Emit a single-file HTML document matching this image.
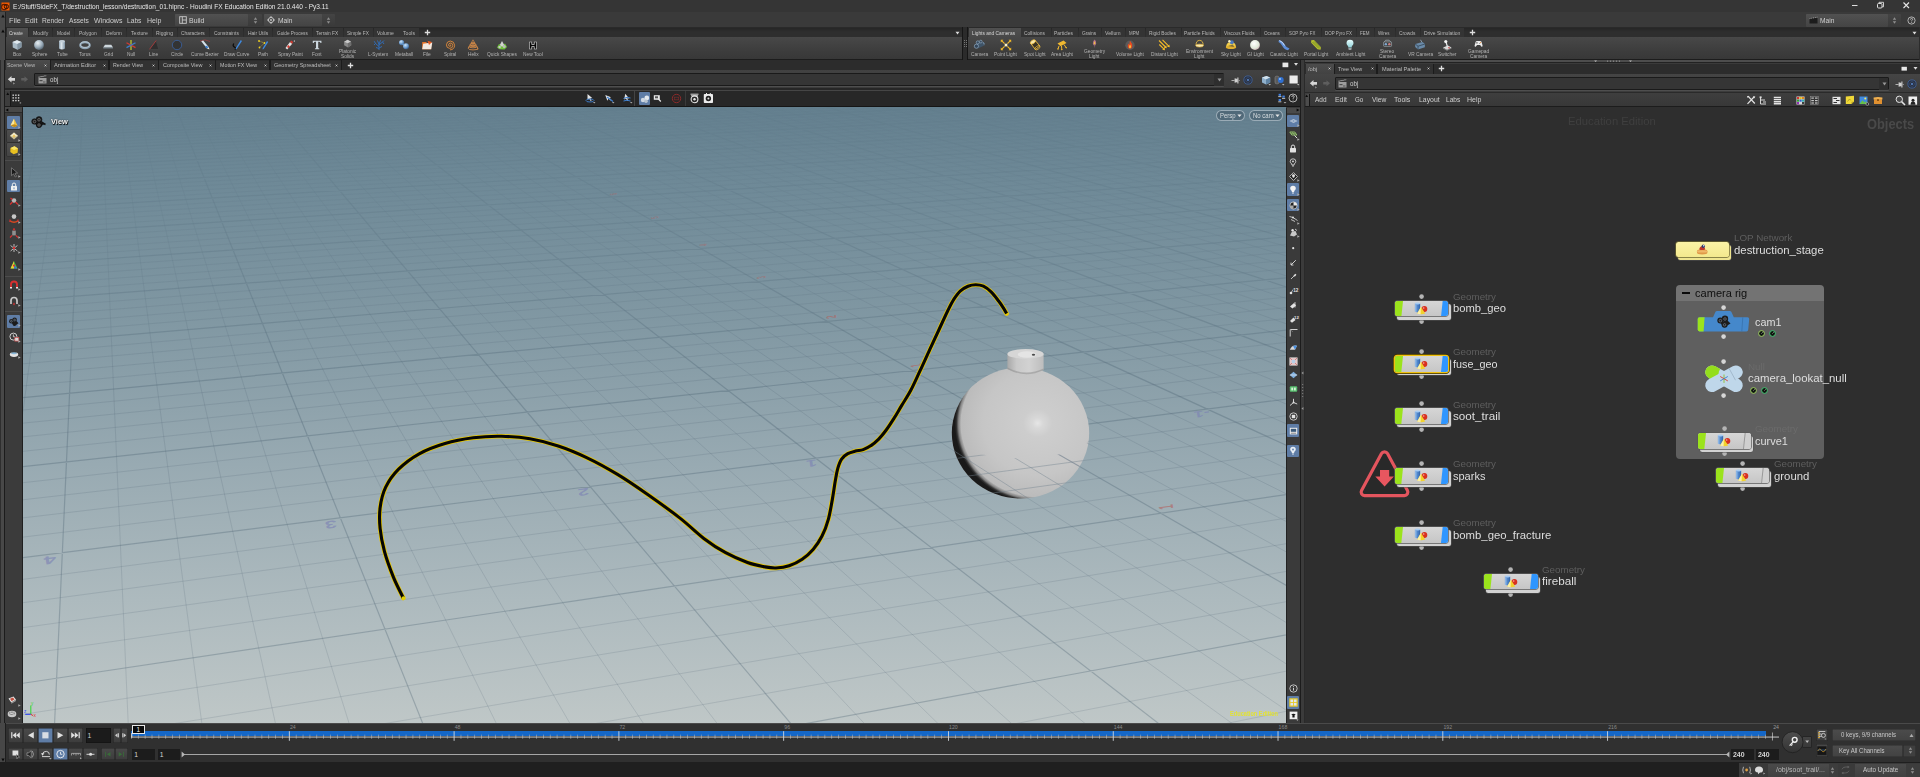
<!DOCTYPE html>
<html><head><meta charset="utf-8"><title>Houdini FX Education Edition</title>
<style>
html,body{margin:0;padding:0;background:#3a3a3a;overflow:hidden;}
body{width:1920px;height:777px;position:relative;font-family:"Liberation Sans",sans-serif;}
#app{position:absolute;left:0;top:0;width:1920px;height:777px;overflow:hidden;}
#app div,#app span,#app svg{position:absolute;}
#app svg{overflow:visible;display:block;}
.t{white-space:nowrap;transform-origin:0 50%;display:block;}
</style></head><body><div id="app"><div style="left:0px;top:0px;width:1920px;height:12px;background:#353535;"></div><svg style="left:1px;top:1.5px;" width="9" height="9" viewBox="0 0 9 9"><rect x="0.5" y="0.5" width="8" height="8" fill="#f05a00"/><circle cx="3.2" cy="5" r="2.6" fill="none" stroke="#5a1c00" stroke-width="1.1"/><circle cx="5.4" cy="4.6" r="2.1" fill="none" stroke="#3a1200" stroke-width="1"/></svg><span class="t" style="left:12.50px;top:2.82px;font-size:7.3px;line-height:7.3px;color:#e6e6e6;transform:scaleX(0.8991);">E:/Stuff/SideFX_T/destruction_lesson/destruction_01.hipnc - Houdini FX Education Edition 21.0.440 - Py3.11</span><svg style="left:1849px;top:0.3px;" width="64" height="10" viewBox="0 0 64 10"><path d="M3 5.5 H8.5" stroke="#ddd" stroke-width="1"/><rect x="28.5" y="3.5" width="4.5" height="4.5" fill="none" stroke="#ddd" stroke-width="1" rx="1"/><path d="M30 3.5 V2.3 H34.5 V6.8 H33" fill="none" stroke="#ddd" stroke-width="0.9"/><path d="M54.5 2.5 L60 8 M60 2.5 L54.5 8" stroke="#e6e6e6" stroke-width="1.1"/></svg><div style="left:0px;top:12px;width:1920px;height:15px;background:#3a3a3a;"></div><div style="left:0px;top:12px;width:5px;height:15px;background:#4a4a4a;"></div><div style="left:5px;top:12px;width:1px;height:15px;background:#222;"></div><svg style="left:1px;top:14px;" width="4" height="4" viewBox="0 0 4 4"><path d="M2 0.5 L3.7 3.5 H0.3Z" fill="#0a0a0a"/></svg><span class="t" style="left:9.00px;top:16.57px;font-size:7.6px;line-height:7.6px;color:#cfcfcf;transform:scaleX(0.9768);">File</span><span class="t" style="left:25.00px;top:16.57px;font-size:7.6px;line-height:7.6px;color:#cfcfcf;transform:scaleX(0.9514);">Edit</span><span class="t" style="left:42.00px;top:16.57px;font-size:7.6px;line-height:7.6px;color:#cfcfcf;transform:scaleX(0.8798);">Render</span><span class="t" style="left:69.00px;top:16.57px;font-size:7.6px;line-height:7.6px;color:#cfcfcf;transform:scaleX(0.8740);">Assets</span><span class="t" style="left:94.00px;top:16.57px;font-size:7.6px;line-height:7.6px;color:#cfcfcf;transform:scaleX(0.9214);">Windows</span><span class="t" style="left:127.00px;top:16.57px;font-size:7.6px;line-height:7.6px;color:#cfcfcf;transform:scaleX(0.8770);">Labs</span><span class="t" style="left:147.00px;top:16.57px;font-size:7.6px;line-height:7.6px;color:#cfcfcf;transform:scaleX(0.9248);">Help</span><div style="left:175.2px;top:13.6px;width:86.8px;height:12.6px;background:linear-gradient(#444,#3a3a3a);border-radius:1px;"></div><div style="left:175.2px;top:13.6px;width:73.3px;height:12.6px;background:linear-gradient(#515151,#444444);border-radius:1px;"></div><svg style="left:179px;top:16px;" width="8" height="8" viewBox="0 0 8 8"><rect x="0.7" y="0.7" width="6.6" height="6.6" fill="none" stroke="#ccc" stroke-width="0.9"/><path d="M3.3 0.7 V7.3 M3.3 4 H7.3" stroke="#ccc" stroke-width="0.9"/></svg><span class="t" style="left:189.00px;top:16.57px;font-size:7.6px;line-height:7.6px;color:#d0d0d0;transform:scaleX(0.9143);">Build</span><svg style="left:252.8px;top:15.5px;" width="5" height="9" viewBox="0 0 5 9"><path d="M2.5 1.2 L4.2 3.7 L0.8 3.7Z M2.5 7.8 L4.2 5.3 L0.8 5.3Z" fill="#8e8e8e"/></svg><div style="left:264.2px;top:13.6px;width:71px;height:12.6px;background:linear-gradient(#444,#3a3a3a);border-radius:1px;"></div><div style="left:264.2px;top:13.6px;width:57.8px;height:12.6px;background:linear-gradient(#515151,#444444);border-radius:1px;"></div><svg style="left:267px;top:16px;" width="8" height="8" viewBox="0 0 8 8"><circle cx="4" cy="4" r="2.6" fill="none" stroke="#ccc" stroke-width="0.9"/><circle cx="4" cy="4" r="0.9" fill="#ccc"/><path d="M4 0 V1.6 M4 6.4 V8 M0 4 H1.6 M6.4 4 H8" stroke="#ccc" stroke-width="0.9"/></svg><span class="t" style="left:278.00px;top:16.57px;font-size:7.6px;line-height:7.6px;color:#d0d0d0;transform:scaleX(0.8774);">Main</span><svg style="left:326.3px;top:15.5px;" width="5" height="9" viewBox="0 0 5 9"><path d="M2.5 1.2 L4.2 3.7 L0.8 3.7Z M2.5 7.8 L4.2 5.3 L0.8 5.3Z" fill="#8e8e8e"/></svg><div style="left:1806px;top:13.5px;width:95px;height:13px;background:linear-gradient(#444,#3a3a3a);border-radius:1px;"></div><div style="left:1806px;top:13.5px;width:81.5px;height:13px;background:linear-gradient(#515151,#444444);border-radius:1px;"></div><svg style="left:1808.5px;top:15.5px;" width="9" height="8" viewBox="0 0 9 8"><path d="M0.5 2.6 L8.5 1.4 V7.5 H0.5Z" fill="#1c1c1c"/><path d="M0.5 2.6 L8.5 1.2" stroke="#999" stroke-width="1" stroke-dasharray="1 0.8"/></svg><span class="t" style="left:1820.00px;top:16.57px;font-size:7.6px;line-height:7.6px;color:#d0d0d0;transform:scaleX(0.8774);">Main</span><svg style="left:1892.2px;top:15.5px;" width="5" height="9" viewBox="0 0 5 9"><path d="M2.5 1.2 L4.2 3.7 L0.8 3.7Z M2.5 7.8 L4.2 5.3 L0.8 5.3Z" fill="#8e8e8e"/></svg><svg style="left:1906.5px;top:15.5px;" width="9" height="9" viewBox="0 0 9 9"><circle cx="4.5" cy="4.5" r="3.6" fill="none" stroke="#ccc" stroke-width="0.8"/><path d="M3.5 3.6 Q3.5 2.4 4.6 2.4 Q5.7 2.4 5.6 3.5 Q5.5 4.2 4.6 4.7 V5.3 M4.6 6 V6.8" fill="none" stroke="#ccc" stroke-width="0.8"/></svg><div style="left:0px;top:27px;width:1920px;height:33px;background:#2a2a2a;"></div><div style="left:0px;top:27px;width:5px;height:33px;background:#4a4a4a;"></div><div style="left:5px;top:27px;width:1px;height:33px;background:#1e1e1e;"></div><svg style="left:1px;top:29px;" width="4" height="4" viewBox="0 0 4 4"><path d="M2 0.5 L3.7 3.5 H0.3Z" fill="#0a0a0a"/></svg><div style="left:6px;top:27.5px;width:956px;height:10px;background:linear-gradient(#262626,#2e2e2e 40%);"></div><div style="left:6px;top:37px;width:956px;height:22.5px;background:linear-gradient(#484848,#3b3b3b 70%,#373737);"></div><div style="left:6px;top:59.2px;width:956px;height:1px;background:#1c1c1c;"></div><div style="left:6.5px;top:27.5px;width:21.8px;height:10px;background:linear-gradient(#505050,#474747);"></div><span class="t" style="left:8.70px;top:30.96px;font-size:5.6px;line-height:5.6px;color:#d8d8d8;transform:scaleX(0.8173);">Create</span><div style="left:29px;top:28px;width:22.8px;height:9px;background:#343434;"></div><span class="t" style="left:32.80px;top:30.96px;font-size:5.6px;line-height:5.6px;color:#b8b8b8;transform:scaleX(0.9355);">Modify</span><div style="left:52.7px;top:28px;width:21.6px;height:9px;background:#343434;"></div><span class="t" style="left:56.70px;top:30.96px;font-size:5.6px;line-height:5.6px;color:#b8b8b8;transform:scaleX(0.8680);">Model</span><div style="left:75.2px;top:28px;width:25.6px;height:9px;background:#343434;"></div><span class="t" style="left:78.70px;top:30.96px;font-size:5.6px;line-height:5.6px;color:#b8b8b8;transform:scaleX(0.8756);">Polygon</span><div style="left:101.7px;top:28px;width:24.8px;height:9px;background:#343434;"></div><span class="t" style="left:105.50px;top:30.96px;font-size:5.6px;line-height:5.6px;color:#b8b8b8;transform:scaleX(0.8676);">Deform</span><div style="left:127.4px;top:28px;width:24.4px;height:9px;background:#343434;"></div><span class="t" style="left:130.50px;top:30.96px;font-size:5.6px;line-height:5.6px;color:#b8b8b8;transform:scaleX(0.9215);">Texture</span><div style="left:152.7px;top:28px;width:24.1px;height:9px;background:#343434;"></div><span class="t" style="left:155.80px;top:30.96px;font-size:5.6px;line-height:5.6px;color:#b8b8b8;transform:scaleX(0.8911);">Rigging</span><div style="left:177.7px;top:28px;width:31.8px;height:9px;background:#343434;"></div><span class="t" style="left:181.30px;top:30.96px;font-size:5.6px;line-height:5.6px;color:#b8b8b8;transform:scaleX(0.8651);">Characters</span><div style="left:210.4px;top:28px;width:33.1px;height:9px;background:#343434;"></div><span class="t" style="left:213.80px;top:30.96px;font-size:5.6px;line-height:5.6px;color:#b8b8b8;transform:scaleX(0.8787);">Constraints</span><div style="left:244.4px;top:28px;width:27.9px;height:9px;background:#343434;"></div><span class="t" style="left:247.80px;top:30.96px;font-size:5.6px;line-height:5.6px;color:#b8b8b8;transform:scaleX(0.8898);">Hair Utils</span><div style="left:273.2px;top:28px;width:39.1px;height:9px;background:#343434;"></div><span class="t" style="left:276.70px;top:30.96px;font-size:5.6px;line-height:5.6px;color:#b8b8b8;transform:scaleX(0.8402);">Guide Process</span><div style="left:313.2px;top:28px;width:29.9px;height:9px;background:#343434;"></div><span class="t" style="left:316.00px;top:30.96px;font-size:5.6px;line-height:5.6px;color:#b8b8b8;transform:scaleX(0.8595);">Terrain FX</span><div style="left:344px;top:28px;width:29.1px;height:9px;background:#343434;"></div><span class="t" style="left:347.00px;top:30.96px;font-size:5.6px;line-height:5.6px;color:#b8b8b8;transform:scaleX(0.8479);">Simple FX</span><div style="left:374px;top:28px;width:24.5px;height:9px;background:#343434;"></div><span class="t" style="left:377.00px;top:30.96px;font-size:5.6px;line-height:5.6px;color:#b8b8b8;transform:scaleX(0.9060);">Volume</span><div style="left:399.4px;top:28px;width:19.9px;height:9px;background:#343434;"></div><span class="t" style="left:403.00px;top:30.96px;font-size:5.6px;line-height:5.6px;color:#b8b8b8;transform:scaleX(0.9137);">Tools</span><svg style="left:423.5px;top:29px;" width="7" height="7" viewBox="0 0 7 7"><path d="M3.5 0.8 V6.2 M0.8 3.5 H6.2" stroke="#ddd" stroke-width="1.3"/></svg><svg style="left:955px;top:30.5px;" width="5" height="4" viewBox="0 0 5 4"><path d="M0.5 0.8 H4.5 L2.5 3.4Z" fill="#ddd"/></svg><div style="left:962px;top:27px;width:6px;height:33px;background:#2b2b2b;"></div><div style="left:962px;top:27px;width:0.8px;height:33px;background:#161616;"></div><div style="left:967.4px;top:27px;width:0.8px;height:33px;background:#161616;"></div><svg style="left:963.5px;top:40px;" width="3" height="7" viewBox="0 0 3 7"><g fill="#777"><rect x="0" y="0" width="1" height="1"/><rect x="2" y="0" width="1" height="1"/><rect x="0" y="2" width="1" height="1"/><rect x="2" y="2" width="1" height="1"/><rect x="0" y="4" width="1" height="1"/><rect x="2" y="4" width="1" height="1"/><rect x="0" y="6" width="1" height="1"/><rect x="2" y="6" width="1" height="1"/></g></svg><div style="left:968px;top:27.5px;width:950.5px;height:10px;background:linear-gradient(#262626,#2e2e2e 40%);"></div><div style="left:968px;top:37px;width:950.5px;height:22.5px;background:linear-gradient(#484848,#3b3b3b 70%,#373737);"></div><div style="left:968px;top:59.2px;width:950.5px;height:1px;background:#1c1c1c;"></div><div style="left:1918.5px;top:27px;width:1.5px;height:33px;background:#2c2c2c;"></div><div style="left:968.7px;top:27.5px;width:52px;height:10px;background:linear-gradient(#505050,#474747);"></div><span class="t" style="left:971.70px;top:30.96px;font-size:5.6px;line-height:5.6px;color:#d8d8d8;transform:scaleX(0.8601);">Lights and Cameras</span><div style="left:1021.4px;top:28px;width:29.4px;height:9px;background:#343434;"></div><span class="t" style="left:1024.00px;top:30.96px;font-size:5.6px;line-height:5.6px;color:#b8b8b8;transform:scaleX(0.8723);">Collisions</span><div style="left:1051.7px;top:28px;width:26.8px;height:9px;background:#343434;"></div><span class="t" style="left:1054.30px;top:30.96px;font-size:5.6px;line-height:5.6px;color:#b8b8b8;transform:scaleX(0.8808);">Particles</span><div style="left:1079.4px;top:28px;width:22.1px;height:9px;background:#343434;"></div><span class="t" style="left:1082.00px;top:30.96px;font-size:5.6px;line-height:5.6px;color:#b8b8b8;transform:scaleX(0.8631);">Grains</span><div style="left:1102.4px;top:28px;width:23.1px;height:9px;background:#343434;"></div><span class="t" style="left:1105.00px;top:30.96px;font-size:5.6px;line-height:5.6px;color:#b8b8b8;transform:scaleX(0.9298);">Vellum</span><div style="left:1126.4px;top:28px;width:19.1px;height:9px;background:#343434;"></div><span class="t" style="left:1129.00px;top:30.96px;font-size:5.6px;line-height:5.6px;color:#b8b8b8;transform:scaleX(0.7849);">MPM</span><div style="left:1146.4px;top:28px;width:34.4px;height:9px;background:#343434;"></div><span class="t" style="left:1149.00px;top:30.96px;font-size:5.6px;line-height:5.6px;color:#b8b8b8;transform:scaleX(0.8549);">Rigid Bodies</span><div style="left:1181.7px;top:28px;width:38.8px;height:9px;background:#343434;"></div><span class="t" style="left:1184.30px;top:30.96px;font-size:5.6px;line-height:5.6px;color:#b8b8b8;transform:scaleX(0.8775);">Particle Fluids</span><div style="left:1221.4px;top:28px;width:38.8px;height:9px;background:#343434;"></div><span class="t" style="left:1224.00px;top:30.96px;font-size:5.6px;line-height:5.6px;color:#b8b8b8;transform:scaleX(0.8489);">Viscous Fluids</span><div style="left:1261.1px;top:28px;width:24.1px;height:9px;background:#343434;"></div><span class="t" style="left:1263.70px;top:30.96px;font-size:5.6px;line-height:5.6px;color:#b8b8b8;transform:scaleX(0.8253);">Oceans</span><div style="left:1286.1px;top:28px;width:35.1px;height:9px;background:#343434;"></div><span class="t" style="left:1288.70px;top:30.96px;font-size:5.6px;line-height:5.6px;color:#b8b8b8;transform:scaleX(0.7874);">SOP Pyro FX</span><div style="left:1322.1px;top:28px;width:34.4px;height:9px;background:#343434;"></div><span class="t" style="left:1324.70px;top:30.96px;font-size:5.6px;line-height:5.6px;color:#b8b8b8;transform:scaleX(0.7949);">DOP Pyro FX</span><div style="left:1357.4px;top:28px;width:16.8px;height:9px;background:#343434;"></div><span class="t" style="left:1360.00px;top:30.96px;font-size:5.6px;line-height:5.6px;color:#b8b8b8;transform:scaleX(0.8001);">FEM</span><div style="left:1375.1px;top:28px;width:20.1px;height:9px;background:#343434;"></div><span class="t" style="left:1377.70px;top:30.96px;font-size:5.6px;line-height:5.6px;color:#b8b8b8;transform:scaleX(0.8140);">Wires</span><div style="left:1396.1px;top:28px;width:24.1px;height:9px;background:#343434;"></div><span class="t" style="left:1398.70px;top:30.96px;font-size:5.6px;line-height:5.6px;color:#b8b8b8;transform:scaleX(0.8653);">Crowds</span><div style="left:1421.1px;top:28px;width:43.2px;height:9px;background:#343434;"></div><span class="t" style="left:1423.70px;top:30.96px;font-size:5.6px;line-height:5.6px;color:#b8b8b8;transform:scaleX(0.8912);">Drive Simulation</span><svg style="left:1469px;top:29px;" width="7" height="7" viewBox="0 0 7 7"><path d="M3.5 0.8 V6.2 M0.8 3.5 H6.2" stroke="#ddd" stroke-width="1.3"/></svg><svg style="left:1912px;top:31px;" width="5" height="4" viewBox="0 0 5 4"><path d="M0.5 0.8 H4.5 L2.5 3.4Z" fill="#ddd"/></svg><svg width="0" height="0" style="position:absolute"><defs>
<radialGradient id="gSph" cx="38%" cy="30%" r="70%"><stop offset="0" stop-color="#e8eef2"/><stop offset="0.6" stop-color="#9fb0bd"/><stop offset="1" stop-color="#5d6d7a"/></radialGradient>
<radialGradient id="gBlu" cx="38%" cy="30%" r="70%"><stop offset="0" stop-color="#cfe3f7"/><stop offset="0.6" stop-color="#6f9fd0"/><stop offset="1" stop-color="#3a5f8e"/></radialGradient>
<radialGradient id="gGI" cx="40%" cy="35%" r="70%"><stop offset="0" stop-color="#ffffff"/><stop offset="0.7" stop-color="#dfe8d8"/><stop offset="1" stop-color="#c9a9b0"/></radialGradient>
<linearGradient id="gCyl" x1="0" x2="1"><stop offset="0" stop-color="#8fa3b2"/><stop offset="0.4" stop-color="#dde6ec"/><stop offset="1" stop-color="#7f93a3"/></linearGradient>
<linearGradient id="gBulb" x1="0" x2="0" y1="0" y2="1"><stop offset="0" stop-color="#e8ffff"/><stop offset="1" stop-color="#8fd0d8"/></linearGradient>
</defs></svg><svg style="left:10.7px;top:38.6px;" width="12" height="12" viewBox="0 0 12 12"><path d="M1.5 3 L6 1.2 L10.5 3 L10.5 8.3 L6.5 10.8 L1.8 8.5Z" fill="#a9bac6"/><path d="M1.5 3 L6 1.2 L10.5 3 L6.3 5Z" fill="#dfe8ee"/><path d="M6.3 5 L10.5 3 L10.5 8.3 L6.5 10.8Z" fill="#8193a1"/></svg><span class="t" style="left:12.53px;top:51.76px;font-size:5.6px;line-height:5.6px;color:#b4b4b4;transform:scaleX(0.8600);">Box</span><svg style="left:33.3px;top:38.6px;" width="12" height="12" viewBox="0 0 12 12"><circle cx="6" cy="6" r="4.9" fill="url(#gSph)"/></svg><span class="t" style="left:31.50px;top:51.76px;font-size:5.6px;line-height:5.6px;color:#b4b4b4;transform:scaleX(0.8600);">Sphere</span><svg style="left:56.3px;top:38.6px;" width="12" height="12" viewBox="0 0 12 12"><path d="M3 2.2 V9.5 Q6 11.3 9 9.5 V2.2Z" fill="url(#gCyl)"/><ellipse cx="6" cy="2.3" rx="3" ry="1.3" fill="#c4d0d9"/></svg><span class="t" style="left:56.88px;top:51.76px;font-size:5.6px;line-height:5.6px;color:#b4b4b4;transform:scaleX(0.8600);">Tube</span><svg style="left:79.3px;top:38.6px;" width="12" height="12" viewBox="0 0 12 12"><ellipse cx="6" cy="6.2" rx="4.7" ry="3" fill="none" stroke="#8fa5b6" stroke-width="2.2"/><ellipse cx="6" cy="5.6" rx="4.6" ry="2.7" fill="none" stroke="#c3d0da" stroke-width="0.8"/></svg><span class="t" style="left:79.38px;top:51.76px;font-size:5.6px;line-height:5.6px;color:#b4b4b4;transform:scaleX(0.8600);">Torus</span><svg style="left:102.3px;top:38.6px;" width="12" height="12" viewBox="0 0 12 12"><path d="M3 5.8 H9.3 L11 8.6 H1.2Z" fill="#cdd6dc"/><path d="M1.2 8.6 H11 V9.4 H1.2Z" fill="#7d8e9b"/></svg><span class="t" style="left:103.73px;top:51.76px;font-size:5.6px;line-height:5.6px;color:#b4b4b4;transform:scaleX(0.8600);">Grid</span><svg style="left:125px;top:38.6px;" width="12" height="12" viewBox="0 0 12 12"><path d="M6 1 V11" stroke="#b8c832" stroke-width="1.3"/><path d="M1.5 3.8 L10.5 8.6" stroke="#d23a32" stroke-width="1.3"/><path d="M1.5 8.6 L10.5 3.8" stroke="#3d7fc8" stroke-width="1.3"/></svg><span class="t" style="left:126.83px;top:51.76px;font-size:5.6px;line-height:5.6px;color:#b4b4b4;transform:scaleX(0.8600);">Null</span><svg style="left:148px;top:38.6px;" width="12" height="12" viewBox="0 0 12 12"><path d="M1.5 10.5 H10.8 L8 1.5Z" fill="#2f2f2f" stroke="#4a4a4a" stroke-width="0.5"/><path d="M1.5 10.3 L8.2 1.5" stroke="#a03a3a" stroke-width="1"/></svg><span class="t" style="left:149.43px;top:51.76px;font-size:5.6px;line-height:5.6px;color:#b4b4b4;transform:scaleX(0.8600);">Line</span><svg style="left:171px;top:38.6px;" width="12" height="12" viewBox="0 0 12 12"><circle cx="6" cy="6" r="4.7" fill="#333" stroke="#3a5f9a" stroke-width="0.9"/></svg><span class="t" style="left:170.82px;top:51.76px;font-size:5.6px;line-height:5.6px;color:#b4b4b4;transform:scaleX(0.8600);">Circle</span><svg style="left:199px;top:38.6px;" width="12" height="12" viewBox="0 0 12 12"><path d="M1 2 Q6 -0.5 11 2.5" fill="none" stroke="#a04040" stroke-width="0.7"/><path d="M2.2 2.2 L4.2 1.6 L9.8 8.3 L8 9.6Z" fill="#d8e2ea"/><path d="M7 6.5 L9.8 8.3 L8 9.6 L6 8Z" fill="#3d7fd0"/><path d="M8 9.6 L9.8 8.3 L10.5 10.6Z" fill="#e8e8e8"/></svg><span class="t" style="left:191.02px;top:51.76px;font-size:5.6px;line-height:5.6px;color:#b4b4b4;transform:scaleX(0.8600);">Curve Bezier</span><svg style="left:231px;top:38.6px;" width="12" height="12" viewBox="0 0 12 12"><path d="M2.8 4.5 Q1.2 7 3.5 8.2 Q5.5 9 4 10.8" fill="none" stroke="#0c0c0c" stroke-width="1.3"/><path d="M9.8 1 L11 1.9 L5.7 10 L4.6 10.6 L4.7 9.2Z" fill="#3f8ae0"/></svg><span class="t" style="left:224.23px;top:51.76px;font-size:5.6px;line-height:5.6px;color:#b4b4b4;transform:scaleX(0.8600);">Draw Curve</span><svg style="left:257.3px;top:38.6px;" width="12" height="12" viewBox="0 0 12 12"><path d="M2 2 L7.5 4 L2.5 8.5" fill="none" stroke="#d8c030" stroke-width="0.7" stroke-dasharray="1 0.7"/><circle cx="2" cy="2" r="0.9" fill="#f0d020"/><circle cx="7.5" cy="4" r="0.9" fill="#f0d020"/><circle cx="2.5" cy="8.5" r="0.9" fill="#f0d020"/><path d="M10 2 L11.2 2.9 L6.7 10 L5.6 10.6 L5.7 9.2Z" fill="#3f8ae0"/></svg><span class="t" style="left:258.32px;top:51.76px;font-size:5.6px;line-height:5.6px;color:#b4b4b4;transform:scaleX(0.8600);">Path</span><svg style="left:284.3px;top:38.6px;" width="12" height="12" viewBox="0 0 12 12"><path d="M3.2 10.5 L1.5 9 L6 3 L8.2 4.7Z" fill="#e4e4e4"/><path d="M4.3 6 L6 7.4 L4.5 9.2 L3 7.9Z" fill="#cf3a30"/><path d="M6 3 L7.2 1.5 L9.2 3 L8.2 4.7Z" fill="#cf3a30"/><path d="M9.5 2 L11 1.3 L10.5 3Z" fill="#e4e4e4"/></svg><span class="t" style="left:277.80px;top:51.76px;font-size:5.6px;line-height:5.6px;color:#b4b4b4;transform:scaleX(0.8600);">Spray Paint</span><svg style="left:311px;top:38.6px;" width="12" height="12" viewBox="0 0 12 12"><path d="M1.2 1.5 H10.8 V4 H9.8 Q9.6 2.6 8.2 2.6 H7.2 V9.3 Q7.2 10 8.4 10 V10.8 H3.6 V10 Q4.8 10 4.8 9.3 V2.6 H3.8 Q2.4 2.6 2.2 4 H1.2Z" fill="#cdd8e0" transform="translate(0.7 0.5) scale(0.9)"/></svg><span class="t" style="left:312.16px;top:51.76px;font-size:5.6px;line-height:5.6px;color:#b4b4b4;transform:scaleX(0.8600);">Font</span><svg style="left:343.1px;top:38.6px;" width="9.2" height="9.2" viewBox="0 0 12 12"><path d="M6 1 L10.5 3.5 L10.8 8 L6.5 11 L1.5 8.3 L1.5 3.5Z" fill="#8a8a8a"/><path d="M6 1 L10.5 3.5 L6.2 5.5 L1.5 3.5Z" fill="#c8c8c8"/><path d="M6.2 5.5 L10.5 3.5 L10.8 8 L6.5 11Z" fill="#6e6e6e"/></svg><span class="t" style="left:339.09px;top:48.86px;font-size:5.6px;line-height:5.6px;color:#b4b4b4;transform:scaleX(0.8600);">Platonic</span><span class="t" style="left:341.11px;top:53.86px;font-size:5.6px;line-height:5.6px;color:#b4b4b4;transform:scaleX(0.8600);">Solids</span><svg style="left:372.7px;top:38.6px;" width="12" height="12" viewBox="0 0 12 12"><path d="M6 11 V5.5 M6 7.5 L2.5 4.5 M6 6 L9.5 3 M6 5.5 L4.5 1.5 M6 5.5 L7.5 1.2 M2.5 4.5 L1.2 2.2 M2.5 4.5 L1 6 M9.5 3 L11 1.5 M9.5 3 L11 5 M6 9 L9 7.5 M6 9.5 L3 8.5" fill="none" stroke="#2f6fbf" stroke-width="0.9"/></svg><span class="t" style="left:368.48px;top:51.76px;font-size:5.6px;line-height:5.6px;color:#b4b4b4;transform:scaleX(0.8600);">L-System</span><svg style="left:398px;top:38.6px;" width="12" height="12" viewBox="0 0 12 12"><circle cx="3.6" cy="3.6" r="2.6" fill="url(#gBlu)"/><circle cx="8" cy="7.3" r="3" fill="url(#gBlu)"/><path d="M4.5 5.2 L6.2 5.8" stroke="#6f9fd0" stroke-width="1.6"/></svg><span class="t" style="left:394.86px;top:51.76px;font-size:5.6px;line-height:5.6px;color:#b4b4b4;transform:scaleX(0.8600);">Metaball</span><svg style="left:421.3px;top:38.6px;" width="12" height="12" viewBox="0 0 12 12"><path d="M1.2 3 H5 L6 4 H10.2 V10.3 H1.2Z" fill="#e8742a"/><path d="M2.2 4.8 L11.3 3.6 L10.2 10.3 H1.2Z" fill="#f3e9e0"/><path d="M6.5 1.8 L11 3 L8 6Z" fill="#e85a20"/></svg><span class="t" style="left:423.40px;top:51.76px;font-size:5.6px;line-height:5.6px;color:#b4b4b4;transform:scaleX(0.8600);">File</span><svg style="left:444.3px;top:38.6px;" width="12" height="12" viewBox="0 0 12 12"><path d="M6 6 Q7 5.5 6.8 6.8 Q6 8 4.8 6.8 Q4 5 6 4 Q8.5 3.6 8.8 6.5 Q8.6 9.4 5.6 9.4 Q2.4 9 2.4 5.8 Q2.8 2.2 6.3 2 Q10.4 2.3 10.6 6.3 Q10.4 10.6 6 10.9" fill="none" stroke="#e08a3a" stroke-width="0.9"/></svg><span class="t" style="left:444.12px;top:51.76px;font-size:5.6px;line-height:5.6px;color:#b4b4b4;transform:scaleX(0.8600);">Spiral</span><svg style="left:467.3px;top:38.6px;" width="12" height="12" viewBox="0 0 12 12"><g fill="none" stroke="#e09048" stroke-width="0.75"><ellipse cx="6" cy="9.2" rx="4.8" ry="1.7"/><ellipse cx="6" cy="7.4" rx="3.8" ry="1.4"/><ellipse cx="6" cy="5.7" rx="2.8" ry="1.1"/><ellipse cx="6" cy="4.1" rx="1.8" ry="0.8"/><path d="M6 0.8 L1.2 9 M6 0.8 L10.8 9" stroke-width="0.6"/><path d="M9.5 10.5 Q11.5 10.8 10.9 9.2"/></g></svg><span class="t" style="left:467.92px;top:51.76px;font-size:5.6px;line-height:5.6px;color:#b4b4b4;transform:scaleX(0.8600);">Helix</span><svg style="left:496.3px;top:38.6px;" width="12" height="12" viewBox="0 0 12 12"><path d="M1 8.5 L3 5 L6 6.5 L9 4.5 L11 8 L8.5 10.5 L3.5 10.3Z" fill="#6fc03a"/><path d="M3.8 6 L6 2 L8.2 6 L6 7.8Z" fill="#d2d2d2"/><circle cx="8.2" cy="7.5" r="1.5" fill="#bbb"/><path d="M2.5 7 h2.2 v2.2 h-2.2Z" fill="#c8c8c8"/></svg><span class="t" style="left:487.24px;top:51.76px;font-size:5.6px;line-height:5.6px;color:#b4b4b4;transform:scaleX(0.8600);">Quick Shapes</span><svg style="left:527px;top:38.6px;" width="12" height="12" viewBox="0 0 12 12"><path d="M3.6 4.2 V8.8 M8.4 4.2 V8.8 M3.6 6.5 H8.4" stroke="#dcdcdc" stroke-width="2.8" stroke-linecap="square"/><path d="M3.6 4.2 V8.8 M8.4 4.2 V8.8 M3.6 6.5 H8.4" stroke="#060606" stroke-width="1.7" stroke-linecap="square"/></svg><span class="t" style="left:523.09px;top:51.76px;font-size:5.6px;line-height:5.6px;color:#b4b4b4;transform:scaleX(0.8600);">New Tool</span><svg style="left:973.3px;top:38.6px;" width="12" height="12" viewBox="0 0 12 12"><path d="M2.5 5 L9.5 3.2 L11.3 6.6 L4.8 9.6Z" fill="#3f5468"/><path d="M9.5 3.2 L11.3 6.6 L11.6 4.6 L10.6 2.9Z" fill="#6c8aa6"/><circle cx="3.4" cy="7.2" r="2.1" fill="#33465a" stroke="#9db8d0" stroke-width="0.6"/><circle cx="4.8" cy="3.4" r="1.6" fill="#3a4e62" stroke="#9db8d0" stroke-width="0.55"/><circle cx="7.8" cy="2.6" r="1.4" fill="#3a4e62" stroke="#9db8d0" stroke-width="0.55"/></svg><span class="t" style="left:970.70px;top:51.76px;font-size:5.6px;line-height:5.6px;color:#b4b4b4;transform:scaleX(0.8600);">Camera</span><svg style="left:999.7px;top:38.6px;" width="12" height="12" viewBox="0 0 12 12"><path d="M1.3 1.3 L4.6 4.6 M10.7 1.3 L7.4 4.6 M1.3 10.7 L4.6 7.4 M10.7 10.7 L7.4 7.4" stroke="#f0b82a" stroke-width="1.2"/><path d="M0.8 0.8 h2.6 l-2.6 2.6Z M11.2 0.8 v2.6 l-2.6 -2.6Z M0.8 11.2 v-2.6 l2.6 2.6Z M11.2 11.2 h-2.6 l2.6 -2.6Z" fill="#f0b82a"/><circle cx="6" cy="6" r="1.5" fill="#fff4c8"/></svg><span class="t" style="left:994.27px;top:51.76px;font-size:5.6px;line-height:5.6px;color:#b4b4b4;transform:scaleX(0.8600);">Point Light</span><svg style="left:1028.7px;top:38.6px;" width="12" height="12" viewBox="0 0 12 12"><path d="M1.6 4.2 L6 1.2 L10.8 7 L6.4 10.6Z" fill="#3a3424" stroke="#eebc3c" stroke-width="0.9"/><ellipse cx="3.9" cy="2.9" rx="2.9" ry="1.7" transform="rotate(-33 3.9 2.9)" fill="#f7e6a8" stroke="#eebc3c" stroke-width="0.7"/><ellipse cx="8.5" cy="8.7" rx="2.9" ry="1.6" transform="rotate(-33 8.5 8.7)" fill="none" stroke="#eebc3c" stroke-width="0.7"/></svg><span class="t" style="left:1023.81px;top:51.76px;font-size:5.6px;line-height:5.6px;color:#b4b4b4;transform:scaleX(0.8600);">Spot Light</span><svg style="left:1056.3px;top:38.6px;" width="12" height="12" viewBox="0 0 12 12"><path d="M1.5 4.5 L7.5 1.5 L10.5 4 L4.5 7.2Z" fill="#f0b830"/><path d="M3 7 L2 10 M5.5 7 L5.8 10.5 M8 5.5 L10 8.5" stroke="#f0b830" stroke-width="1"/><path d="M1 9.5 h2 l-1 1.7Z M4.8 10 h2 l-1 1.5Z M9 8 h2 l-0.6 1.7Z" fill="#f0b830"/></svg><span class="t" style="left:1051.27px;top:51.76px;font-size:5.6px;line-height:5.6px;color:#b4b4b4;transform:scaleX(0.8600);">Area Light</span><svg style="left:1090.1px;top:38.6px;" width="9.2" height="9.2" viewBox="0 0 12 12"><path d="M6 0.8 Q8.5 3 8 6 Q7.5 8.5 6 9 Q4 8.5 3.8 6 Q3.6 3 6 0.8Z" fill="#b0708a"/><path d="M6 2.5 Q7.3 4.5 6.8 6.5 Q6.3 7.8 5.6 7.6 Q4.8 6.5 5 4.8Z" fill="#f0c040"/><path d="M6 7 V11" stroke="#7a5a68" stroke-width="1"/></svg><span class="t" style="left:1084.08px;top:48.86px;font-size:5.6px;line-height:5.6px;color:#b4b4b4;transform:scaleX(0.8600);">Geometry</span><span class="t" style="left:1089.45px;top:53.86px;font-size:5.6px;line-height:5.6px;color:#b4b4b4;transform:scaleX(0.8600);">Light</span><svg style="left:1124.3px;top:38.6px;" width="12" height="12" viewBox="0 0 12 12"><circle cx="6" cy="6.3" r="4.7" fill="#5a5a5a"/><path d="M6 1.8 Q8.8 5 8.3 7.4 Q7.8 9.6 6 9.8 Q4.1 9.6 3.7 7.4 Q3.5 5.6 4.8 4.6 Q5 5.8 5.6 5.8 Q5.3 3.6 6 1.8Z" fill="#e84a20"/><path d="M6 5.4 Q7.4 7 7 8.3 Q6.6 9.3 6 9.3 Q5.2 9.2 5 8.2 Q5 7 6 5.4Z" fill="#f8c040"/></svg><span class="t" style="left:1116.31px;top:51.76px;font-size:5.6px;line-height:5.6px;color:#b4b4b4;transform:scaleX(0.8600);">Volume Light</span><svg style="left:1158px;top:38.6px;" width="12" height="12" viewBox="0 0 12 12"><path d="M1 1.5 L7.5 8 M4.5 0.8 L11 7.3 M1.3 5.5 L6 10.2" stroke="#f0b82a" stroke-width="1.1"/><path d="M8.8 9.3 L5.8 8.8 L8.3 6.3Z M11.8 8.2 L9 7.8 L11.3 5.5Z M7 11.3 L4.2 10.8 L6.6 8.5Z" fill="#f0b82a"/></svg><span class="t" style="left:1150.55px;top:51.76px;font-size:5.6px;line-height:5.6px;color:#b4b4b4;transform:scaleX(0.8600);">Distant Light</span><svg style="left:1195.1px;top:38.6px;" width="9.2" height="9.2" viewBox="0 0 12 12"><path d="M1.3 8.5 Q1.3 1.8 6 1.8 Q10.7 1.8 10.7 8.5" fill="none" stroke="#f0c040" stroke-width="1.1"/><ellipse cx="6" cy="8.6" rx="4.9" ry="1.9" fill="#f8e8b0" stroke="#f0c040" stroke-width="0.8"/></svg><span class="t" style="left:1186.12px;top:48.86px;font-size:5.6px;line-height:5.6px;color:#b4b4b4;transform:scaleX(0.8600);">Environment</span><span class="t" style="left:1194.45px;top:53.86px;font-size:5.6px;line-height:5.6px;color:#b4b4b4;transform:scaleX(0.8600);">Light</span><svg style="left:1225px;top:38.6px;" width="12" height="12" viewBox="0 0 12 12"><path d="M1 8 Q1.5 3 6 3 Q10.5 3 11 8Z" fill="#f0cc4a"/><ellipse cx="6" cy="8.3" rx="5.2" ry="1.8" fill="#e0b030"/><circle cx="6.8" cy="3.2" r="2" fill="#4a78c0"/><circle cx="4.4" cy="2.2" r="1.2" fill="#f8f0c0"/><path d="M3 7 L8 5.5 L9 8Z" fill="#3a3a3a" opacity="0.6"/></svg><span class="t" style="left:1221.05px;top:51.76px;font-size:5.6px;line-height:5.6px;color:#b4b4b4;transform:scaleX(0.8600);">Sky Light</span><svg style="left:1249.3px;top:38.6px;" width="12" height="12" viewBox="0 0 12 12"><circle cx="6" cy="6" r="4.9" fill="url(#gGI)"/></svg><span class="t" style="left:1246.83px;top:51.76px;font-size:5.6px;line-height:5.6px;color:#b4b4b4;transform:scaleX(0.8600);">GI Light</span><svg style="left:1278px;top:38.6px;" width="12" height="12" viewBox="0 0 12 12"><path d="M1 1 Q5 2 7 6 Q8.5 9 11.5 9.5 L10 11.3 Q6 10.5 4 6.5 Q2.5 3.5 0.5 3Z" fill="#5f8fd8"/><path d="M1.5 1.5 Q5 3 6.5 6.5" fill="none" stroke="#cfe0f8" stroke-width="1"/></svg><span class="t" style="left:1270.02px;top:51.76px;font-size:5.6px;line-height:5.6px;color:#b4b4b4;transform:scaleX(0.8600);">Caustic Light</span><svg style="left:1310.3px;top:38.6px;" width="12" height="12" viewBox="0 0 12 12"><path d="M1.2 1.2 L4 1 L11 8.3 L10.5 10.8 L7.5 10.2 L1.2 3.8Z" fill="#b8c030"/><path d="M2.5 3 L9 9.5 M4 2.4 L10.3 8.8" stroke="#5a7a20" stroke-width="0.7"/></svg><span class="t" style="left:1304.06px;top:51.76px;font-size:5.6px;line-height:5.6px;color:#b4b4b4;transform:scaleX(0.8600);">Portal Light</span><svg style="left:1344.3px;top:38.6px;" width="12" height="12" viewBox="0 0 12 12"><path d="M6 0.8 Q9.5 0.8 9.5 4.2 Q9.5 5.8 7.8 7.3 V8.6 H4.2 V7.3 Q2.5 5.8 2.5 4.2 Q2.5 0.8 6 0.8Z" fill="url(#gBulb)"/><path d="M4.4 9 H7.6 V10.6 Q6 11.6 4.4 10.6Z" fill="#9aa4a8"/></svg><span class="t" style="left:1335.51px;top:51.76px;font-size:5.6px;line-height:5.6px;color:#b4b4b4;transform:scaleX(0.8600);">Ambient Light</span><svg style="left:1382.7px;top:38.6px;" width="9.2" height="9.2" viewBox="0 0 12 12"><rect x="0.8" y="3.8" width="10.4" height="5.8" rx="0.8" fill="#3c3c3c" stroke="#b8c4cc" stroke-width="0.7"/><path d="M1.8 3.6 L3.5 1.6 H8 L10 3.6" fill="none" stroke="#b8c4cc" stroke-width="0.8"/><circle cx="3.7" cy="6.7" r="1.6" fill="#7fa8d0"/><circle cx="8.3" cy="6.7" r="1.6" fill="#d07f7f"/></svg><span class="t" style="left:1380.17px;top:48.86px;font-size:5.6px;line-height:5.6px;color:#b4b4b4;transform:scaleX(0.8600);">Stereo</span><span class="t" style="left:1378.70px;top:53.86px;font-size:5.6px;line-height:5.6px;color:#b4b4b4;transform:scaleX(0.8600);">Camera</span><svg style="left:1414.3px;top:38.6px;" width="12" height="12" viewBox="0 0 12 12"><path d="M1.2 5 L8.5 3 L11 5 L10.8 8.2 L4 10.5 L1.2 8Z" fill="#6a8aa8"/><path d="M1.2 5 L4 7.2 L11 5 M4 7.2 V10.5" stroke="#2a3a48" stroke-width="0.7" fill="none"/><path d="M6.5 0.8 L7.8 3" stroke="#9ab0c4" stroke-width="0.8"/></svg><span class="t" style="left:1407.66px;top:51.76px;font-size:5.6px;line-height:5.6px;color:#b4b4b4;transform:scaleX(0.8600);">VR Camera</span><svg style="left:1441.3px;top:38.6px;" width="12" height="12" viewBox="0 0 12 12"><path d="M2 8.5 L7 6.5 L10.5 8.5 L6 11Z" fill="#d8d8d8"/><path d="M2 8.5 V9.5 L6 11.8 L10.5 9.5 V8.5 L6 11Z" fill="#8a8a8a"/><path d="M6.5 8 L5 3" stroke="#e8e8e8" stroke-width="1.2"/><circle cx="4.8" cy="2.5" r="1.6" fill="#f4f4f4"/><circle cx="8" cy="8.8" r="0.8" fill="#c83a3a"/></svg><span class="t" style="left:1438.02px;top:51.76px;font-size:5.6px;line-height:5.6px;color:#b4b4b4;transform:scaleX(0.8600);">Switcher</span><svg style="left:1473.7px;top:38.6px;" width="9.2" height="9.2" viewBox="0 0 12 12"><path d="M2.2 3.5 Q3 2.2 4.5 2.6 H7.5 Q9 2.2 9.8 3.5 L11.2 8.5 Q11.3 10.3 9.8 10 L8 7.8 H4 L2.2 10 Q0.7 10.3 0.8 8.5Z" fill="#ededed"/><path d="M2.8 5 h2 M3.8 4 v2" stroke="#555" stroke-width="0.8"/><circle cx="8.6" cy="4.6" r="0.8" fill="#e88a3a"/><circle cx="7.4" cy="5.8" r="0.6" fill="#666"/></svg><span class="t" style="left:1467.68px;top:48.86px;font-size:5.6px;line-height:5.6px;color:#b4b4b4;transform:scaleX(0.8600);">Gamepad</span><span class="t" style="left:1469.70px;top:53.86px;font-size:5.6px;line-height:5.6px;color:#b4b4b4;transform:scaleX(0.8600);">Camera</span><div style="left:0px;top:60px;width:1300px;height:663px;background:#3a3a3a;"></div><div style="left:0px;top:60px;width:1.2px;height:663px;background:#2e2e2e;"></div><div style="left:1.2px;top:60px;width:2.6px;height:663px;background:#484848;"></div><div style="left:3.8px;top:60px;width:0.9px;height:663px;background:#1c1c1c;"></div><div style="left:4.7px;top:60px;width:1.3px;height:663px;background:#3b3b3b;"></div><div style="left:4.7px;top:60px;width:1295.3px;height:10.5px;background:#2c2c2c;"></div><div style="left:5.7px;top:60px;width:44px;height:11px;background:linear-gradient(#4c4c4c,#414141);"></div><span class="t" style="left:7.20px;top:63.07px;font-size:5.7px;line-height:5.7px;color:#b9b9b9;transform:scaleX(0.9418);">Scene View</span><svg style="left:43.5px;top:63.6px;" width="3" height="3" viewBox="0 0 3 3"><path d="M0.7 0.7 L2.3 2.3 M2.3 0.7 L0.7 2.3" stroke="#d8d8d8" stroke-width="0.95"/></svg><div style="left:50px;top:60px;width:1.1px;height:10.5px;background:#1c1c1c;"></div><div style="left:51.1px;top:60.6px;width:57.2px;height:9.7px;background:#323232;"></div><div style="left:108.3px;top:60px;width:1px;height:10.5px;background:#1c1c1c;"></div><span class="t" style="left:53.80px;top:63.07px;font-size:5.7px;line-height:5.7px;color:#bdbdbd;transform:scaleX(1.0075);">Animation Editor</span><svg style="left:102.5px;top:63.6px;" width="3" height="3" viewBox="0 0 3 3"><path d="M0.7 0.7 L2.3 2.3 M2.3 0.7 L0.7 2.3" stroke="#d8d8d8" stroke-width="0.95"/></svg><div style="left:108.8px;top:60px;width:1.1px;height:10.5px;background:#1c1c1c;"></div><div style="left:109.9px;top:60.6px;width:47.7px;height:9.7px;background:#323232;"></div><div style="left:157.6px;top:60px;width:1px;height:10.5px;background:#1c1c1c;"></div><span class="t" style="left:113.30px;top:63.07px;font-size:5.7px;line-height:5.7px;color:#bdbdbd;transform:scaleX(0.9295);">Render View</span><svg style="left:151.8px;top:63.6px;" width="3" height="3" viewBox="0 0 3 3"><path d="M0.7 0.7 L2.3 2.3 M2.3 0.7 L0.7 2.3" stroke="#d8d8d8" stroke-width="0.95"/></svg><div style="left:158.1px;top:60px;width:1.1px;height:10.5px;background:#1c1c1c;"></div><div style="left:159.2px;top:60.6px;width:55.4px;height:9.7px;background:#323232;"></div><div style="left:214.6px;top:60px;width:1px;height:10.5px;background:#1c1c1c;"></div><span class="t" style="left:162.50px;top:63.07px;font-size:5.7px;line-height:5.7px;color:#bdbdbd;transform:scaleX(0.9653);">Composite View</span><svg style="left:208.8px;top:63.6px;" width="3" height="3" viewBox="0 0 3 3"><path d="M0.7 0.7 L2.3 2.3 M2.3 0.7 L0.7 2.3" stroke="#d8d8d8" stroke-width="0.95"/></svg><div style="left:215.1px;top:60px;width:1.1px;height:10.5px;background:#1c1c1c;"></div><div style="left:216.2px;top:60.6px;width:53.1px;height:9.7px;background:#323232;"></div><div style="left:269.3px;top:60px;width:1px;height:10.5px;background:#1c1c1c;"></div><span class="t" style="left:219.50px;top:63.07px;font-size:5.7px;line-height:5.7px;color:#bdbdbd;transform:scaleX(0.9338);">Motion FX View</span><svg style="left:263.5px;top:63.6px;" width="3" height="3" viewBox="0 0 3 3"><path d="M0.7 0.7 L2.3 2.3 M2.3 0.7 L0.7 2.3" stroke="#d8d8d8" stroke-width="0.95"/></svg><div style="left:269.8px;top:60px;width:1.1px;height:10.5px;background:#1c1c1c;"></div><div style="left:270.9px;top:60.6px;width:70.1px;height:9.7px;background:#323232;"></div><div style="left:341px;top:60px;width:1px;height:10.5px;background:#1c1c1c;"></div><span class="t" style="left:273.80px;top:63.07px;font-size:5.7px;line-height:5.7px;color:#bdbdbd;transform:scaleX(0.9673);">Geometry Spreadsheet</span><svg style="left:335.2px;top:63.6px;" width="3" height="3" viewBox="0 0 3 3"><path d="M0.7 0.7 L2.3 2.3 M2.3 0.7 L0.7 2.3" stroke="#d8d8d8" stroke-width="0.95"/></svg><svg style="left:346.5px;top:61.7px;" width="7" height="7" viewBox="0 0 7 7"><path d="M3.5 0.8 V6.2 M0.8 3.5 H6.2" stroke="#e0e0e0" stroke-width="1.3"/></svg><svg style="left:1281.5px;top:62.3px;" width="17" height="6" viewBox="0 0 17 6"><rect x="0.5" y="0.6" width="5.8" height="4.6" fill="#e8e8e8"/><path d="M12 1 H16 L14 3.8Z" fill="#ddd"/></svg><div style="left:4.7px;top:70.2px;width:1295.3px;height:18px;background:linear-gradient(#424242,#3b3b3b);"></div><svg style="left:7px;top:75px;" width="22" height="10" viewBox="0 0 22 10"><path d="M0.8 4.3 L4.5 1 V3 H8 V5.8 H4.5 V7.6Z" fill="#d6d6d6"/><path d="M6.3 7.3 L7.8 8.4 L6.3 9.5Z" fill="#aaa"/><path d="M21 4.3 L17.5 1.3 V3.1 H14.2 V5.6 H17.5 V7.3Z" fill="#5e5e5e"/></svg><div style="left:34.3px;top:73.3px;width:1190px;height:13.2px;background:#353535;border:0.7px solid #1a1a1a;box-sizing:border-box;border-radius:1px;box-shadow:0 0.7px 0 #555;"></div><div style="left:1214px;top:74px;width:9.5px;height:11.8px;background:#2e2e2e;"></div><svg style="left:1216.5px;top:78px;" width="5" height="4" viewBox="0 0 5 4"><path d="M0.5 0.6 H4.5 L2.5 3.4Z" fill="#999"/></svg><svg style="left:37.5px;top:75.3px;" width="9" height="9" viewBox="0 0 9 9"><path d="M0.5 3 H8.5 V8.5 H0.5Z" fill="#9c9c9c"/><path d="M0.5 2.2 L8.5 0.6" stroke="#bdbdbd" stroke-width="1.1" stroke-dasharray="1.2 0.8"/><path d="M1.5 5 H4.5 V6.2 H1.5Z" fill="#4a4a4a"/><path d="M5 6.5 H7.5 V7.5 H5Z" fill="#555"/></svg><span class="t" style="left:49.80px;top:76.71px;font-size:6.6px;line-height:6.6px;color:#cfcfcf;transform:scaleX(0.9389);">obj</span><svg style="left:1230.5px;top:75.5px;" width="10" height="9" viewBox="0 0 10 9"><path d="M0.5 4.5 H3.6" stroke="#bdbdbd" stroke-width="0.9"/><path d="M3.6 2.2 V6.8 L6.6 6 V3Z" fill="#d0d0d0"/><path d="M6.9 1.6 V7.4" stroke="#d0d0d0" stroke-width="1.1"/><path d="M7.4 4.5 H9" stroke="#9a9a9a" stroke-width="0.8"/></svg><svg style="left:1242.5px;top:75px;" width="10" height="10" viewBox="0 0 10 10"><circle cx="5" cy="5" r="4.1" fill="#2a2e38" stroke="#3f66a6" stroke-width="0.8"/><circle cx="5" cy="5" r="2.4" fill="none" stroke="#3a5c96" stroke-width="0.55"/><circle cx="5" cy="5" r="0.9" fill="#5f94e4"/></svg><svg style="left:1261px;top:74.5px;" width="10" height="11" viewBox="0 0 10 11"><path d="M1 2.5 L5.5 1 L9.2 2.6 V7.5 L5 9.5 L1 7.6Z" fill="#8fb0cc"/><path d="M1 2.5 L5.5 1 L9.2 2.6 L5 4.4Z" fill="#d2e2ee"/><path d="M5 4.4 L9.2 2.6 V7.5 L5 9.5Z" fill="#5f83a3"/><path d="M7.5 9 H10 L8.7 10.6Z" fill="#bbb"/></svg><svg style="left:1274px;top:74.5px;" width="11" height="11" viewBox="0 0 11 11"><rect x="1" y="1.2" width="4" height="7.6" rx="1.6" fill="#5a5a5a" stroke="#8a8a8a" stroke-width="0.6"/><circle cx="6.8" cy="5" r="2.9" fill="#2f6fd0"/><circle cx="6" cy="4.1" r="1" fill="#9cc4f4"/><path d="M8 9 H10.5 L9.2 10.6Z" fill="#bbb"/></svg><svg style="left:1288.5px;top:75.3px;" width="11" height="11" viewBox="0 0 11 11"><rect x="0.5" y="0.5" width="8.2" height="8" fill="#ececec"/><path d="M8 9 H10.4 L9.2 10.5Z" fill="#bbb"/></svg><div style="left:4.7px;top:88px;width:1295.3px;height:18.7px;background:#272727;"></div><div style="left:4.7px;top:88px;width:1295.3px;height:1.6px;background:#262626;"></div><div style="left:4.7px;top:89.6px;width:1295.3px;height:0.9px;background:#454545;"></div><div style="left:4.7px;top:90.5px;width:5.1px;height:15.7px;background:#3d3d3d;"></div><div style="left:9.8px;top:90.5px;width:0.8px;height:15.7px;background:#181818;"></div><svg style="left:5.5px;top:91.5px;" width="3.5" height="3.5" viewBox="0 0 3.5 3.5"><path d="M1.75 0.4 L3.2 3 H0.3Z" fill="#0a0a0a"/></svg><svg style="left:12px;top:93.5px;" width="10" height="10" viewBox="0 0 10 10"><g fill="#d8d8d8"><rect x="0.5" y="0.5" width="1.4" height="1.4"/><rect x="3.2" y="0.5" width="1.4" height="1.4"/><rect x="5.9" y="0.5" width="1.4" height="1.4"/><rect x="0.5" y="3.2" width="1.4" height="1.4"/><rect x="3.2" y="3.2" width="1.4" height="1.4"/><rect x="5.9" y="3.2" width="1.4" height="1.4"/><rect x="0.5" y="5.9" width="1.4" height="1.4"/><rect x="3.2" y="5.9" width="1.4" height="1.4"/><rect x="5.9" y="5.9" width="1.4" height="1.4"/></g><path d="M7.8 8 L9.5 9 L7.8 9.8Z" fill="#aaa"/></svg><svg style="left:585px;top:93px;" width="11" height="11" viewBox="0 0 11 11"><path d="M2.5 1 L2.5 7 L4.2 5.6 L5.6 8 L6.6 7.5 L5.3 5.2 L7.2 5Z" fill="#e4e4e4" transform="rotate(0 5 5)"/><ellipse cx="5" cy="7.5" rx="4" ry="1.5" fill="none" stroke="#3d7fd0" stroke-width="0.9"/><path d="M8 9 H10.5 L9.2 10.6Z" fill="#aaa"/></svg><svg style="left:603.5px;top:93px;" width="11" height="11" viewBox="0 0 11 11"><path d="M2.5 1 L2.5 7 L4.2 5.6 L5.6 8 L6.6 7.5 L5.3 5.2 L7.2 5Z" fill="#e4e4e4" transform="rotate(-20 5 5)"/><path d="M3 4 L9 8.5" stroke="#3d7fd0" stroke-width="1.2"/><path d="M8 9 H10.5 L9.2 10.6Z" fill="#aaa"/></svg><svg style="left:621.5px;top:93px;" width="11" height="11" viewBox="0 0 11 11"><path d="M2.5 1 L2.5 7 L4.2 5.6 L5.6 8 L6.6 7.5 L5.3 5.2 L7.2 5Z" fill="#e4e4e4" transform="rotate(10 5 5)"/><path d="M1.5 5.5 Q5 3.5 8.5 5 M1.5 8 Q5 6.5 8.5 8" stroke="#3d7fd0" stroke-width="1" fill="none"/><path d="M8 9 H10.5 L9.2 10.6Z" fill="#aaa"/></svg><div style="left:634.3px;top:90.5px;width:0.8px;height:15.5px;background:#444;"></div><div style="left:638.5px;top:92px;width:11.5px;height:12.5px;background:#5f7da6;border-radius:1px;"></div><svg style="left:639.5px;top:93.5px;" width="10" height="10" viewBox="0 0 10 10"><circle cx="3" cy="6" r="2.2" fill="#cfd8e2"/><circle cx="6.8" cy="4" r="2.4" fill="#e2e8ee"/><circle cx="6" cy="7.3" r="1.8" fill="#b8c4d0"/></svg><svg style="left:653px;top:94px;" width="10" height="9" viewBox="0 0 10 9"><rect x="0.8" y="1.2" width="6" height="4.6" fill="#e8e8e8"/><path d="M4.5 4 L7.8 7.5" stroke="#e8e8e8" stroke-width="1.2"/><rect x="2" y="2.3" width="3" height="2" fill="#555"/></svg><svg style="left:671px;top:93px;" width="11" height="11" viewBox="0 0 11 11"><circle cx="5.5" cy="5.5" r="4.2" fill="none" stroke="#8a2a2a" stroke-width="1"/><rect x="3.3" y="4.2" width="4.4" height="2.6" fill="none" stroke="#7a2a2a" stroke-width="0.7"/></svg><div style="left:685px;top:90.5px;width:0.8px;height:15.5px;background:#3a3a3a;"></div><svg style="left:688.5px;top:92.5px;" width="11" height="11" viewBox="0 0 11 11"><circle cx="5.5" cy="6.3" r="3.4" fill="none" stroke="#e6e6e6" stroke-width="1.1"/><circle cx="5.5" cy="6.3" r="1.2" fill="#e6e6e6"/><path d="M1.5 1.2 H9.5 M2 2.8 H9" stroke="#e6e6e6" stroke-width="0.9"/></svg><svg style="left:703px;top:93px;" width="11" height="11" viewBox="0 0 11 11"><rect x="0.8" y="1" width="9.2" height="9" rx="0.8" fill="#ececec"/><circle cx="5.4" cy="5.5" r="2.7" fill="#222"/><circle cx="5.4" cy="5.5" r="1" fill="#ddd"/><path d="M3.5 1 V-0 M7.3 1 V0" stroke="#ececec"/></svg><svg style="left:1276.5px;top:93px;" width="10" height="11" viewBox="0 0 10 11"><g fill="#3f7fe0"><rect x="1.6" y="0.8" width="2.4" height="2"/><rect x="1.6" y="6" width="2.4" height="2"/><rect x="5.4" y="2.6" width="2.4" height="2"/></g><path d="M1.2 3.6 H4.4 M1.2 8.8 H4.4 M5 5.4 H8.2" stroke="#e0e0e0" stroke-width="0.8"/><path d="M6.6 9 H9.4 L8 10.6Z" fill="#aaa"/></svg><svg style="left:1288px;top:92.7px;" width="10" height="10" viewBox="0 0 10 10"><circle cx="5" cy="5" r="4" fill="#222" stroke="#d8d8d8" stroke-width="0.8"/><path d="M3.8 4 Q3.8 2.6 5.1 2.6 Q6.4 2.6 6.2 3.9 Q6 4.7 5.1 5.2 V5.9 M5.1 6.7 V7.5" fill="none" stroke="#d8d8d8" stroke-width="0.8"/></svg><div style="left:4.7px;top:106.1px;width:1295.3px;height:0.7px;background:#151515;"></div><div id="vp" style="left:23px;top:106.7px;width:1263px;height:616.3px;background:linear-gradient(#64808f 0%,#6e8997 12%,#8198a3 35%,#98aab2 58%,#adbabe 80%,#bfc7c7 100%);overflow:hidden;"><svg style="left:0;top:0;-webkit-mask-image:linear-gradient(to bottom,rgba(0,0,0,0.18) 0%,rgba(0,0,0,0.45) 15%,#000 45%);mask-image:linear-gradient(to bottom,rgba(0,0,0,0.18) 0%,rgba(0,0,0,0.45) 15%,#000 45%);" width="1263" height="616.3" viewBox="23 106.7 1263 616.3"><path d="M2319.0 13.4 L4498.3 126.4 M2313.2 13.6 L4495.3 127.2 M2307.4 13.9 L4492.3 128.1 M2301.5 14.1 L4489.3 129.0 M2289.7 14.5 L4483.2 130.8 M2283.8 14.8 L4480.1 131.8 M2277.9 15.0 L4477.0 132.7 M2271.9 15.2 L4473.8 133.6 M2259.9 15.7 L4467.4 135.5 M2253.8 15.9 L4464.2 136.5 M2247.8 16.1 L4461.0 137.4 M2241.7 16.4 L4457.7 138.4 M2229.4 16.8 L4451.0 140.4 M2223.2 17.1 L4447.7 141.4 M2217.0 17.3 L4444.3 142.4 M2210.8 17.6 L4440.9 143.4 M2198.3 18.0 L4433.9 145.5 M2192.0 18.3 L4430.4 146.5 M2185.7 18.5 L4426.9 147.5 M2179.3 18.8 L4423.3 148.6 M2166.5 19.3 L4416.1 150.7 M2160.1 19.5 L4412.5 151.8 M2153.6 19.8 L4408.8 152.9 M2147.2 20.0 L4405.0 154.0 M2134.1 20.5 L4397.5 156.3 M2127.6 20.8 L4393.7 157.4 M2121.0 21.0 L4389.8 158.5 M2114.3 21.3 L4385.9 159.7 M2101.0 21.8 L4378.0 162.0 M2094.3 22.0 L4374.0 163.2 M2087.6 22.3 L4370.0 164.4 M2080.8 22.5 L4365.9 165.6 M2067.2 23.1 L4357.7 168.1 M2060.3 23.3 L4353.5 169.3 M2053.5 23.6 L4349.3 170.6 M2046.6 23.9 L4345.0 171.8 M2032.7 24.4 L4336.3 174.4 M2025.7 24.7 L4332.0 175.7 M2018.6 24.9 L4327.5 177.0 M2011.6 25.2 L4323.1 178.4 M1997.4 25.7 L4314.0 181.0 M1990.2 26.0 L4309.4 182.4 M1983.0 26.3 L4304.7 183.8 M1975.8 26.6 L4300.0 185.2 M1961.3 27.1 L4290.5 188.0 M1954.0 27.4 L4285.7 189.4 M1946.6 27.7 L4280.8 190.9 M1939.2 28.0 L4275.9 192.4 M1924.4 28.5 L4265.9 195.3 M1916.9 28.8 L4260.8 196.8 M1909.4 29.1 L4255.6 198.4 M1901.8 29.4 L4250.4 199.9 M1886.7 30.0 L4239.9 203.0 M1879.0 30.3 L4234.5 204.6 M1871.3 30.6 L4229.1 206.2 M1863.6 30.9 L4223.7 207.9 M1848.1 31.5 L4212.5 211.2 M1840.2 31.8 L4206.9 212.8 M1832.4 32.1 L4201.2 214.5 M1824.5 32.4 L4195.4 216.2 M1808.6 33.0 L4183.7 219.7 M1800.6 33.3 L4177.7 221.5 M1792.5 33.6 L4171.7 223.3 M1784.5 33.9 L4165.6 225.1 M1768.2 34.5 L4153.2 228.8 M1760.0 34.8 L4146.9 230.6 M1751.7 35.1 L4140.5 232.5 M1743.5 35.5 L4134.0 234.4 M1726.8 36.1 L4120.9 238.3 M1718.4 36.4 L4114.2 240.3 M1710.0 36.7 L4107.5 242.3 M1701.5 37.1 L4100.6 244.4 M1684.5 37.7 L4086.7 248.5 M1675.9 38.1 L4079.6 250.6 M1667.2 38.4 L4072.4 252.7 M1658.5 38.7 L4065.1 254.9 M1641.1 39.4 L4050.3 259.3 M1632.3 39.7 L4042.8 261.5 M1623.4 40.1 L4035.1 263.8 M1614.5 40.4 L4027.4 266.1 M1596.6 41.1 L4011.7 270.8 M1587.6 41.4 L4003.6 273.1 M1578.5 41.8 L3995.5 275.6 M1569.4 42.1 L3987.2 278.0 M1551.1 42.8 L3970.4 283.0 M1541.8 43.2 L3961.8 285.5 M1532.5 43.5 L3953.2 288.1 M1523.2 43.9 L3944.3 290.7 M1504.4 44.6 L3926.4 296.1 M1494.9 45.0 L3917.2 298.8 M1485.3 45.4 L3907.9 301.6 M1475.8 45.7 L3898.5 304.3 M1456.5 46.5 L3879.2 310.1 M1446.7 46.8 L3869.4 313.0 M1437.0 47.2 L3859.4 315.9 M1427.1 47.6 L3849.2 319.0 M1407.3 48.3 L3828.6 325.1 M1397.3 48.7 L3818.0 328.2 M1387.3 49.1 L3807.2 331.4 M1377.2 49.5 L3796.3 334.6 M1356.9 50.3 L3774.1 341.3 M1346.7 50.7 L3762.6 344.6 M1336.4 51.1 L3751.1 348.1 M1326.0 51.5 L3739.3 351.6 M1305.1 52.3 L3715.2 358.7 M1294.6 52.7 L3702.9 362.4 M1284.0 53.1 L3690.4 366.1 M1273.4 53.5 L3677.7 369.9 M1252.0 54.3 L3651.6 377.6 M1241.2 54.7 L3638.2 381.6 M1230.3 55.1 L3624.6 385.6 M1219.4 55.5 L3610.8 389.7 M1197.4 56.4 L3582.4 398.1 M1186.3 56.8 L3567.9 402.4 M1175.1 57.2 L3553.1 406.8 M1163.9 57.7 L3538.0 411.3 M1141.3 58.5 L3507.0 420.5 M1129.9 59.0 L3491.1 425.2 M1118.4 59.4 L3475.0 430.0 M1106.9 59.8 L3458.5 434.9 M1083.6 60.7 L3424.6 445.0 M1071.9 61.2 L3407.1 450.1 M1060.1 61.6 L3389.4 455.4 M1048.2 62.1 L3371.2 460.8 M1024.3 63.0 L3333.9 471.9 M1012.2 63.5 L3314.7 477.6 M1000.1 63.9 L3295.1 483.4 M987.9 64.4 L3275.1 489.3 M963.2 65.3 L3233.9 501.5 M950.8 65.8 L3212.6 507.9 M938.3 66.3 L3190.9 514.3 M925.8 66.8 L3168.7 520.9 M900.4 67.8 L3122.9 534.5 M887.6 68.2 L3099.2 541.5 M874.8 68.7 L3075.0 548.7 M861.8 69.2 L3050.2 556.0 M835.7 70.2 L2999.0 571.2 M822.6 70.7 L2972.5 579.1 M809.3 71.2 L2945.3 587.2 M796.0 71.8 L2917.5 595.4 M769.1 72.8 L2859.8 612.5 M755.5 73.3 L2829.9 621.4 M741.9 73.8 L2799.2 630.5 M728.2 74.4 L2767.8 639.9 M700.4 75.4 L2702.4 659.3 M686.5 76.0 L2668.4 669.3 M672.4 76.5 L2633.5 679.7 M658.2 77.0 L2597.6 690.3 M629.6 78.1 L2522.9 712.5 M615.2 78.7 L2483.9 724.1 M600.7 79.2 L2443.8 736.0 M586.1 79.8 L2402.5 748.2 M556.6 80.9 L2316.2 773.9 M541.7 81.5 L2271.0 787.2 M526.7 82.1 L2224.5 801.1 M511.7 82.6 L2176.5 815.3 M481.2 83.8 L2075.7 845.2 M465.9 84.4 L2022.8 860.9 M450.4 85.0 L1968.2 877.1 M434.8 85.6 L1911.6 893.9 M403.4 86.8 L1792.5 929.3 M387.5 87.4 L1729.7 947.9 M371.6 88.0 L1664.5 967.2 M355.5 88.6 L1597.0 987.3 M323.0 89.9 L1453.9 1029.7 M306.6 90.5 L1378.1 1052.2 M290.1 91.1 L1299.1 1075.6 M273.4 91.8 L1217.0 1100.0 M239.9 93.1 L1041.9 1152.0 M222.9 93.7 L948.6 1179.7 M205.8 94.4 L851.1 1208.6 M188.6 95.0 L749.0 1238.9 M153.9 96.4 L530.0 1303.9 M136.3 97.0 L412.3 1338.8 M118.7 97.7 L288.6 1375.5 M100.9 98.4 L158.4 1414.1 M64.9 99.8 L-123.5 1497.8 M46.8 100.5 L-276.5 1543.2 M28.5 101.2 L-438.4 1591.2 M10.0 101.9 L-610.1 1642.2 M-27.2 103.3 L-986.5 1753.9 M-46.0 104.0 L-1193.4 1815.3 M-65.0 104.7 L-1414.6 1880.9 M-84.0 105.5 L-1651.4 1951.1 M-122.6 106.9 L-2179.2 2107.8 M-142.1 107.7 L-2474.6 2195.4 M-161.8 108.4 L-2794.4 2290.3 M-181.6 109.2 L-3141.8 2393.4 M-221.6 110.7 L-3935.1 2628.8 M-241.8 111.5 L-4390.7 2764.0 M-262.2 112.3 L-4893.8 2913.3 M-282.7 113.1 L-5452.2 3079.0 M-324.3 114.7 L-6776.2 3471.8 M-345.3 115.5 L-7569.0 3707.1 M-366.4 116.3 L-8473.6 3975.5 M-387.7 117.1 L-9515.6 4284.7 M2337.4 13.8 L-414.7 120.3 M2350.1 14.5 L-420.3 122.8 M2363.0 15.2 L-426.1 125.3 M2376.1 15.8 L-431.9 127.9 M2402.6 17.2 L-444.1 133.2 M2416.1 17.9 L-450.4 136.0 M2429.7 18.6 L-456.8 138.8 M2443.5 19.3 L-463.4 141.7 M2471.6 20.8 L-477.1 147.7 M2485.9 21.5 L-484.2 150.8 M2500.4 22.3 L-491.4 154.0 M2515.1 23.0 L-498.9 157.3 M2545.0 24.6 L-514.4 164.1 M2560.2 25.3 L-522.4 167.6 M2575.6 26.1 L-530.7 171.2 M2591.2 26.9 L-539.2 174.9 M2622.9 28.6 L-556.9 182.7 M2639.1 29.4 L-566.2 186.8 M2655.5 30.3 L-575.7 190.9 M2672.1 31.1 L-585.4 195.2 M2706.0 32.9 L-605.9 204.2 M2723.3 33.8 L-616.6 208.9 M2740.8 34.7 L-627.6 213.7 M2758.6 35.6 L-639.0 218.7 M2794.8 37.4 L-662.8 229.2 M2813.3 38.4 L-675.4 234.7 M2832.0 39.4 L-688.3 240.4 M2851.0 40.3 L-701.7 246.2 M2889.8 42.3 L-729.9 258.6 M2909.6 43.4 L-744.8 265.1 M2929.6 44.4 L-760.2 271.9 M2950.0 45.4 L-776.2 278.9 M2991.7 47.6 L-810.1 293.8 M3012.9 48.7 L-828.0 301.6 M3034.5 49.8 L-846.7 309.8 M3056.4 50.9 L-866.1 318.4 M3101.3 53.3 L-907.6 336.5 M3124.2 54.4 L-929.6 346.2 M3147.5 55.6 L-952.7 356.3 M3171.1 56.9 L-976.9 366.9 M3219.5 59.4 L-1028.7 389.7 M3244.2 60.6 L-1056.5 401.9 M3269.4 61.9 L-1085.7 414.7 M3295.0 63.2 L-1116.5 428.2 M3347.4 65.9 L-1183.1 457.4 M3374.2 67.3 L-1219.3 473.3 M3401.5 68.7 L-1257.6 490.1 M3429.2 70.2 L-1298.1 507.9 M3486.1 73.1 L-1387.0 546.8 M3515.3 74.6 L-1435.9 568.3 M3545.0 76.1 L-1488.1 591.2 M3575.3 77.7 L-1544.0 615.7 M3637.3 80.9 L-1668.5 670.3 M3669.2 82.5 L-1738.2 700.9 M3701.6 84.2 L-1813.5 733.9 M3734.6 85.9 L-1895.4 769.9 M3802.5 89.4 L-2082.3 851.8 M3837.5 91.2 L-2189.5 898.9 M3873.0 93.1 L-2307.9 950.8 M3909.3 94.9 L-2439.2 1008.4 M3983.9 98.8 L-2750.3 1144.9 M4022.4 100.8 L-2936.4 1226.5 M4061.6 102.8 L-3148.5 1319.5 M4101.5 104.9 L-3392.6 1426.6 M4184.0 109.1 L-4010.7 1697.8 M4226.5 111.3 L-4410.0 1872.9 M4269.9 113.5 L-4895.4 2085.8 M4314.2 115.8 L-5498.2 2350.2 M4405.7 120.5 L-7279.9 3131.8 M4453.0 123.0 L-8677.3 3744.8 M4501.3 125.5 L-10728.6 4644.6" stroke="#42586a" stroke-opacity="0.165" stroke-width="1" fill="none"/><path d="M1067.0 -51.7 L4501.3 125.5 M1048.9 -51.5 L4486.3 129.9 M1030.7 -51.3 L4470.6 134.6 M1012.3 -51.1 L4454.4 139.4 M993.7 -50.9 L4437.4 144.4 M975.0 -50.7 L4419.7 149.7 M956.1 -50.4 L4401.3 155.1 M937.0 -50.2 L4382.0 160.9 M917.8 -50.0 L4361.8 166.9 M898.4 -49.8 L4340.7 173.1 M878.8 -49.6 L4318.5 179.7 M859.0 -49.3 L4295.3 186.6 M839.1 -49.1 L4270.9 193.8 M818.9 -48.9 L4245.2 201.5 M798.6 -48.7 L4218.1 209.5 M778.1 -48.4 L4189.6 218.0 M757.5 -48.2 L4159.4 226.9 M736.6 -48.0 L4127.5 236.4 M715.5 -47.7 L4093.7 246.4 M694.3 -47.5 L4057.8 257.1 M672.8 -47.2 L4019.6 268.4 M651.1 -47.0 L3978.9 280.5 M629.2 -46.7 L3935.4 293.4 M607.2 -46.5 L3888.9 307.2 M584.9 -46.2 L3839.0 322.0 M562.4 -46.0 L3785.3 337.9 M539.6 -45.7 L3727.4 355.1 M516.7 -45.5 L3664.7 373.7 M493.5 -45.2 L3596.7 393.9 M470.1 -44.9 L3522.7 415.9 M446.5 -44.7 L3441.7 439.9 M422.6 -44.4 L3352.8 466.3 M398.5 -44.1 L3254.7 495.4 M374.2 -43.8 L3146.1 527.6 M349.6 -43.6 L3024.9 563.6 M324.7 -43.3 L2889.0 603.9 M299.6 -43.0 L2735.5 649.4 M274.3 -42.7 L2560.8 701.3 M248.7 -42.4 L2360.0 760.9 M222.8 -42.1 L2126.9 830.0 M196.7 -41.8 L1853.1 911.3 M170.3 -41.5 L1526.8 1008.1 M143.6 -41.2 L1131.3 1125.4 M116.6 -40.9 L642.1 1270.6 M89.3 -40.6 L21.3 1454.8 M61.8 -40.3 L-792.5 1696.3 M33.9 -40.0 L-1905.6 2026.6 M5.8 -39.7 L-3520.6 2505.8 M-22.7 -39.4 L-6075.7 3264.0 M-51.4 -39.0 L-10728.6 4644.6 M1067.0 -51.7 L-51.4 -39.0 M1079.1 -51.1 L-53.7 -38.0 M1091.5 -50.4 L-56.0 -37.0 M1104.2 -49.8 L-58.4 -36.0 M1117.3 -49.1 L-60.9 -34.9 M1130.6 -48.4 L-63.5 -33.7 M1144.4 -47.7 L-66.2 -32.6 M1158.4 -47.0 L-68.9 -31.4 M1172.9 -46.2 L-71.8 -30.1 M1187.8 -45.5 L-74.7 -28.8 M1203.1 -44.7 L-77.8 -27.5 M1218.8 -43.9 L-81.0 -26.1 M1235.0 -43.0 L-84.3 -24.6 M1251.6 -42.2 L-87.7 -23.1 M1268.8 -41.3 L-91.2 -21.6 M1286.4 -40.4 L-95.0 -19.9 M1304.6 -39.4 L-98.8 -18.2 M1323.4 -38.5 L-102.8 -16.5 M1342.7 -37.5 L-107.0 -14.6 M1362.7 -36.4 L-111.4 -12.7 M1383.3 -35.4 L-116.0 -10.7 M1404.6 -34.3 L-120.8 -8.6 M1426.6 -33.1 L-125.8 -6.4 M1449.3 -32.0 L-131.1 -4.1 M1472.9 -30.8 L-136.6 -1.7 M1497.2 -29.5 L-142.4 0.9 M1522.5 -28.2 L-148.5 3.5 M1548.7 -26.8 L-154.9 6.4 M1575.8 -25.4 L-161.7 9.3 M1604.0 -24.0 L-168.8 12.5 M1633.2 -22.5 L-176.4 15.8 M1663.7 -20.9 L-184.4 19.3 M1695.3 -19.3 L-193.0 23.1 M1728.3 -17.6 L-202.0 27.0 M1762.6 -15.8 L-211.7 31.3 M1798.4 -14.0 L-222.0 35.8 M1835.8 -12.0 L-233.0 40.6 M1874.8 -10.0 L-244.9 45.8 M1915.7 -7.9 L-257.6 51.4 M1958.4 -5.7 L-271.3 57.4 M2003.2 -3.4 L-286.2 64.0 M2050.2 -1.0 L-302.3 71.0 M2099.6 1.6 L-319.9 78.7 M2151.5 4.3 L-339.1 87.2 M2206.2 7.1 L-360.2 96.4 M2263.9 10.1 L-383.4 106.6 M2324.8 13.2 L-409.2 117.9 M2389.2 16.5 L-437.9 130.5 M2457.5 20.0 L-470.1 144.7 M2529.9 23.8 L-506.5 160.6 M2606.9 27.7 L-547.9 178.8 M2689.0 32.0 L-595.5 199.6 M2776.6 36.5 L-650.7 223.9 M2870.2 41.3 L-715.6 252.3 M2970.7 46.5 L-792.8 286.2 M3078.7 52.1 L-886.4 327.3 M3195.1 58.1 L-1002.1 378.0 M3321.0 64.6 L-1148.9 442.4 M3457.5 71.6 L-1341.2 526.7 M3606.0 79.3 L-1603.9 642.0 M3768.3 87.7 L-1984.7 809.0 M3946.2 96.8 L-2585.7 1072.7 M4142.3 107.0 L-3676.5 1551.2 M4359.5 118.2 L-6266.6 2687.3" stroke="#42586a" stroke-opacity="0.3" stroke-width="1.2" fill="none"/></svg><svg style="left:0;top:0;" width="1263" height="616.3" viewBox="23 106.7 1263 616.3"><defs>
<radialGradient id="sphLit" cx="0.625" cy="0.425" r="0.66"><stop offset="0" stop-color="#e6e6e6"/><stop offset="0.06" stop-color="#d8d8d8"/><stop offset="0.16" stop-color="#cdcdcd"/><stop offset="0.6" stop-color="#c6c6c6"/><stop offset="0.85" stop-color="#bbbbbb"/><stop offset="1" stop-color="#a8a8a8"/></radialGradient>
<radialGradient id="sphSh" cx="0.622" cy="0.430" r="0.60"><stop offset="0.925" stop-color="#000" stop-opacity="0"/><stop offset="0.955" stop-color="#151515" stop-opacity="0.3"/><stop offset="0.98" stop-color="#121212" stop-opacity="0.8"/><stop offset="1.0" stop-color="#101010" stop-opacity="0.94"/></radialGradient>
<linearGradient id="neckG" x1="0" x2="1"><stop offset="0" stop-color="#a8a8a8"/><stop offset="0.25" stop-color="#c9c9c9"/><stop offset="0.6" stop-color="#d2d2d2"/><stop offset="1" stop-color="#bdbdbd"/></linearGradient>
<clipPath id="sphClip"><ellipse cx="1020.5" cy="432.7" rx="68.7" ry="65.6"/></clipPath>
<clipPath id="sphLow"><path d="M951 436 A69.5 22 0 0 0 1090 436 L1090 500 L951 500Z"/></clipPath>
</defs><text transform="translate(50.1 559.6) rotate(172) scale(2.0 1)" x="0" y="0" text-anchor="middle" dominant-baseline="central" font-size="11.4" fill="#7a80b4" fill-opacity="0.62" font-family="Liberation Sans" font-weight="bold">4</text><text transform="translate(330.8 524.1) rotate(172) scale(2.0 1)" x="0" y="0" text-anchor="middle" dominant-baseline="central" font-size="10.8" fill="#7a80b4" fill-opacity="0.62" font-family="Liberation Sans" font-weight="bold">3</text><text transform="translate(583.3 492.1) rotate(172) scale(2.0 1)" x="0" y="0" text-anchor="middle" dominant-baseline="central" font-size="10.2" fill="#7a80b4" fill-opacity="0.62" font-family="Liberation Sans" font-weight="bold">2</text><text transform="translate(811.6 463.2) rotate(172) scale(2.0 1)" x="0" y="0" text-anchor="middle" dominant-baseline="central" font-size="9.7" fill="#7a80b4" fill-opacity="0.62" font-family="Liberation Sans" font-weight="bold">1</text><text transform="translate(1201.8 413.5) rotate(172) scale(2.0 1)" x="0" y="0" text-anchor="middle" dominant-baseline="central" font-size="8.9" fill="#7a80b4" fill-opacity="0.62" font-family="Liberation Sans" font-weight="bold">-1</text><text transform="translate(1165.7 506.7) rotate(-98) scale(0.8 2.1)" x="0" y="0" text-anchor="middle" dominant-baseline="central" font-size="9.8" fill="#b4605c" fill-opacity="0.60" font-family="Liberation Sans" font-weight="bold">1</text><text transform="translate(916.4 365.4) rotate(-98) scale(0.8 2.1)" x="0" y="0" text-anchor="middle" dominant-baseline="central" font-size="7.5" fill="#b4605c" fill-opacity="0.60" font-family="Liberation Sans" font-weight="bold">1</text><text transform="translate(830.7 316.8) rotate(-98) scale(0.8 2.1)" x="0" y="0" text-anchor="middle" dominant-baseline="central" font-size="6.7" fill="#b4605c" fill-opacity="0.60" font-family="Liberation Sans" font-weight="bold">2</text><text transform="translate(761.1 277.3) rotate(-98) scale(0.8 2.1)" x="0" y="0" text-anchor="middle" dominant-baseline="central" font-size="6.1" fill="#b4605c" fill-opacity="0.40" font-family="Liberation Sans" font-weight="bold">3</text><text transform="translate(703.5 244.7) rotate(-98) scale(0.8 2.1)" x="0" y="0" text-anchor="middle" dominant-baseline="central" font-size="5.6" fill="#b4605c" fill-opacity="0.40" font-family="Liberation Sans" font-weight="bold">4</text><text transform="translate(655.0 217.2) rotate(-98) scale(0.8 2.1)" x="0" y="0" text-anchor="middle" dominant-baseline="central" font-size="5.1" fill="#b4605c" fill-opacity="0.40" font-family="Liberation Sans" font-weight="bold">5</text><text transform="translate(613.7 193.8) rotate(-98) scale(0.8 2.1)" x="0" y="0" text-anchor="middle" dominant-baseline="central" font-size="4.8" fill="#b4605c" fill-opacity="0.40" font-family="Liberation Sans" font-weight="bold">6</text><ellipse cx="1020.5" cy="432.7" rx="68.7" ry="65.6" fill="url(#sphLit)"/><ellipse cx="1020.5" cy="432.7" rx="68.7" ry="65.6" fill="url(#sphSh)"/><g clip-path="url(#sphClip)"><g clip-path="url(#sphLow)"><path d="M2319.0 13.4 L4498.3 126.4 M2313.2 13.6 L4495.3 127.2 M2307.4 13.9 L4492.3 128.1 M2301.5 14.1 L4489.3 129.0 M2289.7 14.5 L4483.2 130.8 M2283.8 14.8 L4480.1 131.8 M2277.9 15.0 L4477.0 132.7 M2271.9 15.2 L4473.8 133.6 M2259.9 15.7 L4467.4 135.5 M2253.8 15.9 L4464.2 136.5 M2247.8 16.1 L4461.0 137.4 M2241.7 16.4 L4457.7 138.4 M2229.4 16.8 L4451.0 140.4 M2223.2 17.1 L4447.7 141.4 M2217.0 17.3 L4444.3 142.4 M2210.8 17.6 L4440.9 143.4 M2198.3 18.0 L4433.9 145.5 M2192.0 18.3 L4430.4 146.5 M2185.7 18.5 L4426.9 147.5 M2179.3 18.8 L4423.3 148.6 M2166.5 19.3 L4416.1 150.7 M2160.1 19.5 L4412.5 151.8 M2153.6 19.8 L4408.8 152.9 M2147.2 20.0 L4405.0 154.0 M2134.1 20.5 L4397.5 156.3 M2127.6 20.8 L4393.7 157.4 M2121.0 21.0 L4389.8 158.5 M2114.3 21.3 L4385.9 159.7 M2101.0 21.8 L4378.0 162.0 M2094.3 22.0 L4374.0 163.2 M2087.6 22.3 L4370.0 164.4 M2080.8 22.5 L4365.9 165.6 M2067.2 23.1 L4357.7 168.1 M2060.3 23.3 L4353.5 169.3 M2053.5 23.6 L4349.3 170.6 M2046.6 23.9 L4345.0 171.8 M2032.7 24.4 L4336.3 174.4 M2025.7 24.7 L4332.0 175.7 M2018.6 24.9 L4327.5 177.0 M2011.6 25.2 L4323.1 178.4 M1997.4 25.7 L4314.0 181.0 M1990.2 26.0 L4309.4 182.4 M1983.0 26.3 L4304.7 183.8 M1975.8 26.6 L4300.0 185.2 M1961.3 27.1 L4290.5 188.0 M1954.0 27.4 L4285.7 189.4 M1946.6 27.7 L4280.8 190.9 M1939.2 28.0 L4275.9 192.4 M1924.4 28.5 L4265.9 195.3 M1916.9 28.8 L4260.8 196.8 M1909.4 29.1 L4255.6 198.4 M1901.8 29.4 L4250.4 199.9 M1886.7 30.0 L4239.9 203.0 M1879.0 30.3 L4234.5 204.6 M1871.3 30.6 L4229.1 206.2 M1863.6 30.9 L4223.7 207.9 M1848.1 31.5 L4212.5 211.2 M1840.2 31.8 L4206.9 212.8 M1832.4 32.1 L4201.2 214.5 M1824.5 32.4 L4195.4 216.2 M1808.6 33.0 L4183.7 219.7 M1800.6 33.3 L4177.7 221.5 M1792.5 33.6 L4171.7 223.3 M1784.5 33.9 L4165.6 225.1 M1768.2 34.5 L4153.2 228.8 M1760.0 34.8 L4146.9 230.6 M1751.7 35.1 L4140.5 232.5 M1743.5 35.5 L4134.0 234.4 M1726.8 36.1 L4120.9 238.3 M1718.4 36.4 L4114.2 240.3 M1710.0 36.7 L4107.5 242.3 M1701.5 37.1 L4100.6 244.4 M1684.5 37.7 L4086.7 248.5 M1675.9 38.1 L4079.6 250.6 M1667.2 38.4 L4072.4 252.7 M1658.5 38.7 L4065.1 254.9 M1641.1 39.4 L4050.3 259.3 M1632.3 39.7 L4042.8 261.5 M1623.4 40.1 L4035.1 263.8 M1614.5 40.4 L4027.4 266.1 M1596.6 41.1 L4011.7 270.8 M1587.6 41.4 L4003.6 273.1 M1578.5 41.8 L3995.5 275.6 M1569.4 42.1 L3987.2 278.0 M1551.1 42.8 L3970.4 283.0 M1541.8 43.2 L3961.8 285.5 M1532.5 43.5 L3953.2 288.1 M1523.2 43.9 L3944.3 290.7 M1504.4 44.6 L3926.4 296.1 M1494.9 45.0 L3917.2 298.8 M1485.3 45.4 L3907.9 301.6 M1475.8 45.7 L3898.5 304.3 M1456.5 46.5 L3879.2 310.1 M1446.7 46.8 L3869.4 313.0 M1437.0 47.2 L3859.4 315.9 M1427.1 47.6 L3849.2 319.0 M1407.3 48.3 L3828.6 325.1 M1397.3 48.7 L3818.0 328.2 M1387.3 49.1 L3807.2 331.4 M1377.2 49.5 L3796.3 334.6 M1356.9 50.3 L3774.1 341.3 M1346.7 50.7 L3762.6 344.6 M1336.4 51.1 L3751.1 348.1 M1326.0 51.5 L3739.3 351.6 M1305.1 52.3 L3715.2 358.7 M1294.6 52.7 L3702.9 362.4 M1284.0 53.1 L3690.4 366.1 M1273.4 53.5 L3677.7 369.9 M1252.0 54.3 L3651.6 377.6 M1241.2 54.7 L3638.2 381.6 M1230.3 55.1 L3624.6 385.6 M1219.4 55.5 L3610.8 389.7 M1197.4 56.4 L3582.4 398.1 M1186.3 56.8 L3567.9 402.4 M1175.1 57.2 L3553.1 406.8 M1163.9 57.7 L3538.0 411.3 M1141.3 58.5 L3507.0 420.5 M1129.9 59.0 L3491.1 425.2 M1118.4 59.4 L3475.0 430.0 M1106.9 59.8 L3458.5 434.9 M1083.6 60.7 L3424.6 445.0 M1071.9 61.2 L3407.1 450.1 M1060.1 61.6 L3389.4 455.4 M1048.2 62.1 L3371.2 460.8 M1024.3 63.0 L3333.9 471.9 M1012.2 63.5 L3314.7 477.6 M1000.1 63.9 L3295.1 483.4 M987.9 64.4 L3275.1 489.3 M963.2 65.3 L3233.9 501.5 M950.8 65.8 L3212.6 507.9 M938.3 66.3 L3190.9 514.3 M925.8 66.8 L3168.7 520.9 M900.4 67.8 L3122.9 534.5 M887.6 68.2 L3099.2 541.5 M874.8 68.7 L3075.0 548.7 M861.8 69.2 L3050.2 556.0 M835.7 70.2 L2999.0 571.2 M822.6 70.7 L2972.5 579.1 M809.3 71.2 L2945.3 587.2 M796.0 71.8 L2917.5 595.4 M769.1 72.8 L2859.8 612.5 M755.5 73.3 L2829.9 621.4 M741.9 73.8 L2799.2 630.5 M728.2 74.4 L2767.8 639.9 M700.4 75.4 L2702.4 659.3 M686.5 76.0 L2668.4 669.3 M672.4 76.5 L2633.5 679.7 M658.2 77.0 L2597.6 690.3 M629.6 78.1 L2522.9 712.5 M615.2 78.7 L2483.9 724.1 M600.7 79.2 L2443.8 736.0 M586.1 79.8 L2402.5 748.2 M556.6 80.9 L2316.2 773.9 M541.7 81.5 L2271.0 787.2 M526.7 82.1 L2224.5 801.1 M511.7 82.6 L2176.5 815.3 M481.2 83.8 L2075.7 845.2 M465.9 84.4 L2022.8 860.9 M450.4 85.0 L1968.2 877.1 M434.8 85.6 L1911.6 893.9 M403.4 86.8 L1792.5 929.3 M387.5 87.4 L1729.7 947.9 M371.6 88.0 L1664.5 967.2 M355.5 88.6 L1597.0 987.3 M323.0 89.9 L1453.9 1029.7 M306.6 90.5 L1378.1 1052.2 M290.1 91.1 L1299.1 1075.6 M273.4 91.8 L1217.0 1100.0 M239.9 93.1 L1041.9 1152.0 M222.9 93.7 L948.6 1179.7 M205.8 94.4 L851.1 1208.6 M188.6 95.0 L749.0 1238.9 M153.9 96.4 L530.0 1303.9 M136.3 97.0 L412.3 1338.8 M118.7 97.7 L288.6 1375.5 M100.9 98.4 L158.4 1414.1 M64.9 99.8 L-123.5 1497.8 M46.8 100.5 L-276.5 1543.2 M28.5 101.2 L-438.4 1591.2 M10.0 101.9 L-610.1 1642.2 M-27.2 103.3 L-986.5 1753.9 M-46.0 104.0 L-1193.4 1815.3 M-65.0 104.7 L-1414.6 1880.9 M-84.0 105.5 L-1651.4 1951.1 M-122.6 106.9 L-2179.2 2107.8 M-142.1 107.7 L-2474.6 2195.4 M-161.8 108.4 L-2794.4 2290.3 M-181.6 109.2 L-3141.8 2393.4 M-221.6 110.7 L-3935.1 2628.8 M-241.8 111.5 L-4390.7 2764.0 M-262.2 112.3 L-4893.8 2913.3 M-282.7 113.1 L-5452.2 3079.0 M-324.3 114.7 L-6776.2 3471.8 M-345.3 115.5 L-7569.0 3707.1 M-366.4 116.3 L-8473.6 3975.5 M-387.7 117.1 L-9515.6 4284.7 M2337.4 13.8 L-414.7 120.3 M2350.1 14.5 L-420.3 122.8 M2363.0 15.2 L-426.1 125.3 M2376.1 15.8 L-431.9 127.9 M2402.6 17.2 L-444.1 133.2 M2416.1 17.9 L-450.4 136.0 M2429.7 18.6 L-456.8 138.8 M2443.5 19.3 L-463.4 141.7 M2471.6 20.8 L-477.1 147.7 M2485.9 21.5 L-484.2 150.8 M2500.4 22.3 L-491.4 154.0 M2515.1 23.0 L-498.9 157.3 M2545.0 24.6 L-514.4 164.1 M2560.2 25.3 L-522.4 167.6 M2575.6 26.1 L-530.7 171.2 M2591.2 26.9 L-539.2 174.9 M2622.9 28.6 L-556.9 182.7 M2639.1 29.4 L-566.2 186.8 M2655.5 30.3 L-575.7 190.9 M2672.1 31.1 L-585.4 195.2 M2706.0 32.9 L-605.9 204.2 M2723.3 33.8 L-616.6 208.9 M2740.8 34.7 L-627.6 213.7 M2758.6 35.6 L-639.0 218.7 M2794.8 37.4 L-662.8 229.2 M2813.3 38.4 L-675.4 234.7 M2832.0 39.4 L-688.3 240.4 M2851.0 40.3 L-701.7 246.2 M2889.8 42.3 L-729.9 258.6 M2909.6 43.4 L-744.8 265.1 M2929.6 44.4 L-760.2 271.9 M2950.0 45.4 L-776.2 278.9 M2991.7 47.6 L-810.1 293.8 M3012.9 48.7 L-828.0 301.6 M3034.5 49.8 L-846.7 309.8 M3056.4 50.9 L-866.1 318.4 M3101.3 53.3 L-907.6 336.5 M3124.2 54.4 L-929.6 346.2 M3147.5 55.6 L-952.7 356.3 M3171.1 56.9 L-976.9 366.9 M3219.5 59.4 L-1028.7 389.7 M3244.2 60.6 L-1056.5 401.9 M3269.4 61.9 L-1085.7 414.7 M3295.0 63.2 L-1116.5 428.2 M3347.4 65.9 L-1183.1 457.4 M3374.2 67.3 L-1219.3 473.3 M3401.5 68.7 L-1257.6 490.1 M3429.2 70.2 L-1298.1 507.9 M3486.1 73.1 L-1387.0 546.8 M3515.3 74.6 L-1435.9 568.3 M3545.0 76.1 L-1488.1 591.2 M3575.3 77.7 L-1544.0 615.7 M3637.3 80.9 L-1668.5 670.3 M3669.2 82.5 L-1738.2 700.9 M3701.6 84.2 L-1813.5 733.9 M3734.6 85.9 L-1895.4 769.9 M3802.5 89.4 L-2082.3 851.8 M3837.5 91.2 L-2189.5 898.9 M3873.0 93.1 L-2307.9 950.8 M3909.3 94.9 L-2439.2 1008.4 M3983.9 98.8 L-2750.3 1144.9 M4022.4 100.8 L-2936.4 1226.5 M4061.6 102.8 L-3148.5 1319.5 M4101.5 104.9 L-3392.6 1426.6 M4184.0 109.1 L-4010.7 1697.8 M4226.5 111.3 L-4410.0 1872.9 M4269.9 113.5 L-4895.4 2085.8 M4314.2 115.8 L-5498.2 2350.2 M4405.7 120.5 L-7279.9 3131.8 M4453.0 123.0 L-8677.3 3744.8 M4501.3 125.5 L-10728.6 4644.6" stroke="#74838f" stroke-opacity="0.45" stroke-width="1" fill="none"/><path d="M1067.0 -51.7 L4501.3 125.5 M1048.9 -51.5 L4486.3 129.9 M1030.7 -51.3 L4470.6 134.6 M1012.3 -51.1 L4454.4 139.4 M993.7 -50.9 L4437.4 144.4 M975.0 -50.7 L4419.7 149.7 M956.1 -50.4 L4401.3 155.1 M937.0 -50.2 L4382.0 160.9 M917.8 -50.0 L4361.8 166.9 M898.4 -49.8 L4340.7 173.1 M878.8 -49.6 L4318.5 179.7 M859.0 -49.3 L4295.3 186.6 M839.1 -49.1 L4270.9 193.8 M818.9 -48.9 L4245.2 201.5 M798.6 -48.7 L4218.1 209.5 M778.1 -48.4 L4189.6 218.0 M757.5 -48.2 L4159.4 226.9 M736.6 -48.0 L4127.5 236.4 M715.5 -47.7 L4093.7 246.4 M694.3 -47.5 L4057.8 257.1 M672.8 -47.2 L4019.6 268.4 M651.1 -47.0 L3978.9 280.5 M629.2 -46.7 L3935.4 293.4 M607.2 -46.5 L3888.9 307.2 M584.9 -46.2 L3839.0 322.0 M562.4 -46.0 L3785.3 337.9 M539.6 -45.7 L3727.4 355.1 M516.7 -45.5 L3664.7 373.7 M493.5 -45.2 L3596.7 393.9 M470.1 -44.9 L3522.7 415.9 M446.5 -44.7 L3441.7 439.9 M422.6 -44.4 L3352.8 466.3 M398.5 -44.1 L3254.7 495.4 M374.2 -43.8 L3146.1 527.6 M349.6 -43.6 L3024.9 563.6 M324.7 -43.3 L2889.0 603.9 M299.6 -43.0 L2735.5 649.4 M274.3 -42.7 L2560.8 701.3 M248.7 -42.4 L2360.0 760.9 M222.8 -42.1 L2126.9 830.0 M196.7 -41.8 L1853.1 911.3 M170.3 -41.5 L1526.8 1008.1 M143.6 -41.2 L1131.3 1125.4 M116.6 -40.9 L642.1 1270.6 M89.3 -40.6 L21.3 1454.8 M61.8 -40.3 L-792.5 1696.3 M33.9 -40.0 L-1905.6 2026.6 M5.8 -39.7 L-3520.6 2505.8 M-22.7 -39.4 L-6075.7 3264.0 M-51.4 -39.0 L-10728.6 4644.6 M1067.0 -51.7 L-51.4 -39.0 M1079.1 -51.1 L-53.7 -38.0 M1091.5 -50.4 L-56.0 -37.0 M1104.2 -49.8 L-58.4 -36.0 M1117.3 -49.1 L-60.9 -34.9 M1130.6 -48.4 L-63.5 -33.7 M1144.4 -47.7 L-66.2 -32.6 M1158.4 -47.0 L-68.9 -31.4 M1172.9 -46.2 L-71.8 -30.1 M1187.8 -45.5 L-74.7 -28.8 M1203.1 -44.7 L-77.8 -27.5 M1218.8 -43.9 L-81.0 -26.1 M1235.0 -43.0 L-84.3 -24.6 M1251.6 -42.2 L-87.7 -23.1 M1268.8 -41.3 L-91.2 -21.6 M1286.4 -40.4 L-95.0 -19.9 M1304.6 -39.4 L-98.8 -18.2 M1323.4 -38.5 L-102.8 -16.5 M1342.7 -37.5 L-107.0 -14.6 M1362.7 -36.4 L-111.4 -12.7 M1383.3 -35.4 L-116.0 -10.7 M1404.6 -34.3 L-120.8 -8.6 M1426.6 -33.1 L-125.8 -6.4 M1449.3 -32.0 L-131.1 -4.1 M1472.9 -30.8 L-136.6 -1.7 M1497.2 -29.5 L-142.4 0.9 M1522.5 -28.2 L-148.5 3.5 M1548.7 -26.8 L-154.9 6.4 M1575.8 -25.4 L-161.7 9.3 M1604.0 -24.0 L-168.8 12.5 M1633.2 -22.5 L-176.4 15.8 M1663.7 -20.9 L-184.4 19.3 M1695.3 -19.3 L-193.0 23.1 M1728.3 -17.6 L-202.0 27.0 M1762.6 -15.8 L-211.7 31.3 M1798.4 -14.0 L-222.0 35.8 M1835.8 -12.0 L-233.0 40.6 M1874.8 -10.0 L-244.9 45.8 M1915.7 -7.9 L-257.6 51.4 M1958.4 -5.7 L-271.3 57.4 M2003.2 -3.4 L-286.2 64.0 M2050.2 -1.0 L-302.3 71.0 M2099.6 1.6 L-319.9 78.7 M2151.5 4.3 L-339.1 87.2 M2206.2 7.1 L-360.2 96.4 M2263.9 10.1 L-383.4 106.6 M2324.8 13.2 L-409.2 117.9 M2389.2 16.5 L-437.9 130.5 M2457.5 20.0 L-470.1 144.7 M2529.9 23.8 L-506.5 160.6 M2606.9 27.7 L-547.9 178.8 M2689.0 32.0 L-595.5 199.6 M2776.6 36.5 L-650.7 223.9 M2870.2 41.3 L-715.6 252.3 M2970.7 46.5 L-792.8 286.2 M3078.7 52.1 L-886.4 327.3 M3195.1 58.1 L-1002.1 378.0 M3321.0 64.6 L-1148.9 442.4 M3457.5 71.6 L-1341.2 526.7 M3606.0 79.3 L-1603.9 642.0 M3768.3 87.7 L-1984.7 809.0 M3946.2 96.8 L-2585.7 1072.7 M4142.3 107.0 L-3676.5 1551.2 M4359.5 118.2 L-6266.6 2687.3" stroke="#6a7a88" stroke-opacity="0.6" stroke-width="1.1" fill="none"/></g></g><path d="M1007.4 353.5 V368.6 Q1025.5 378 1043.6 369.6 V353.5Z" fill="url(#neckG)"/><path d="M1007.4 367.2 Q1025.5 376.6 1043.6 368.2 V369.6 Q1025.5 378.6 1007.4 368.6Z" fill="#909090" fill-opacity="0.55"/><ellipse cx="1025.5" cy="353.6" rx="18.1" ry="4.9" fill="#d6d6d6"/><ellipse cx="1027" cy="354.2" rx="9.3" ry="3.2" fill="#e4e4e4"/><ellipse cx="1033.5" cy="354.5" rx="1.7" ry="1" fill="#4a4a4a"/><path d="M403.3 597.7 C401.7 594.2 396.6 584.7 393.5 577.0 C390.4 569.3 386.7 559.4 384.5 551.3 C382.3 543.1 380.8 535.4 380.1 528.1 C379.4 520.8 379.2 514.4 380.1 507.5 C381.0 500.6 382.6 493.3 385.7 486.9 C388.8 480.5 393.0 474.5 398.6 468.9 C404.2 463.3 411.5 457.8 419.2 453.5 C426.9 449.2 436.0 445.9 445.0 443.2 C454.0 440.5 463.9 438.7 473.3 437.5 C482.7 436.3 492.2 435.8 501.6 436.0 C511.0 436.2 520.5 436.9 529.9 438.5 C539.3 440.1 548.8 442.6 558.2 445.7 C567.7 448.8 576.7 452.6 586.6 457.3 C596.5 462.0 607.2 467.9 617.5 474.1 C627.8 480.3 638.0 487.4 648.4 494.7 C658.8 502.0 670.8 510.6 680.0 517.8 C689.2 525.0 696.2 532.3 703.8 538.1 C711.4 543.9 718.3 548.4 725.6 552.4 C732.9 556.4 740.9 559.8 747.5 562.2 C754.1 564.6 760.2 565.7 765.0 566.6 C769.8 567.5 772.0 567.9 776.0 567.7 C780.0 567.5 784.7 567.0 789.1 565.5 C793.5 564.0 798.2 561.6 802.2 558.9 C806.2 556.2 809.8 552.9 813.1 549.1 C816.4 545.3 819.3 541.1 821.9 536.0 C824.5 530.9 826.8 524.7 828.5 518.5 C830.2 512.3 831.2 505.2 832.4 498.8 C833.5 492.4 834.5 485.1 835.4 480.0 C836.3 474.9 836.8 471.6 837.8 468.1 C838.8 464.6 839.9 461.2 841.6 458.8 C843.3 456.4 845.5 454.7 847.8 453.4 C850.1 452.1 852.9 451.5 855.5 450.8 C858.1 450.1 860.6 450.2 863.2 449.3 C865.8 448.4 868.4 447.1 871.0 445.3 C873.6 443.6 876.1 441.4 878.7 438.8 C881.3 436.2 883.8 433.0 886.4 429.5 C889.0 426.0 891.5 422.0 894.1 417.9 C896.7 413.8 899.1 409.4 901.9 404.8 C904.7 400.2 907.8 395.7 910.8 390.0 C913.8 384.3 917.0 377.0 920.1 370.4 C923.2 363.8 926.2 357.0 929.3 350.3 C932.4 343.6 935.5 336.9 938.6 330.2 C941.7 323.5 945.3 315.5 947.9 310.2 C950.5 304.9 952.0 301.8 954.1 298.6 C956.2 295.4 957.9 292.9 960.2 290.8 C962.5 288.7 965.4 287.0 968.0 285.9 C970.6 284.8 973.1 284.4 975.7 284.4 C978.3 284.4 980.8 284.7 983.4 285.9 C986.0 287.1 988.5 289.1 991.1 291.6 C993.7 294.1 996.7 298.2 998.8 300.9 C1000.9 303.6 1002.2 305.8 1003.5 307.8 C1004.8 309.9 1006.1 312.3 1006.6 313.2" fill="none" stroke="#e8c800" stroke-width="4.6" stroke-linecap="round" stroke-linejoin="round"/><path d="M403.3 597.7 C401.7 594.2 396.6 584.7 393.5 577.0 C390.4 569.3 386.7 559.4 384.5 551.3 C382.3 543.1 380.8 535.4 380.1 528.1 C379.4 520.8 379.2 514.4 380.1 507.5 C381.0 500.6 382.6 493.3 385.7 486.9 C388.8 480.5 393.0 474.5 398.6 468.9 C404.2 463.3 411.5 457.8 419.2 453.5 C426.9 449.2 436.0 445.9 445.0 443.2 C454.0 440.5 463.9 438.7 473.3 437.5 C482.7 436.3 492.2 435.8 501.6 436.0 C511.0 436.2 520.5 436.9 529.9 438.5 C539.3 440.1 548.8 442.6 558.2 445.7 C567.7 448.8 576.7 452.6 586.6 457.3 C596.5 462.0 607.2 467.9 617.5 474.1 C627.8 480.3 638.0 487.4 648.4 494.7 C658.8 502.0 670.8 510.6 680.0 517.8 C689.2 525.0 696.2 532.3 703.8 538.1 C711.4 543.9 718.3 548.4 725.6 552.4 C732.9 556.4 740.9 559.8 747.5 562.2 C754.1 564.6 760.2 565.7 765.0 566.6 C769.8 567.5 772.0 567.9 776.0 567.7 C780.0 567.5 784.7 567.0 789.1 565.5 C793.5 564.0 798.2 561.6 802.2 558.9 C806.2 556.2 809.8 552.9 813.1 549.1 C816.4 545.3 819.3 541.1 821.9 536.0 C824.5 530.9 826.8 524.7 828.5 518.5 C830.2 512.3 831.2 505.2 832.4 498.8 C833.5 492.4 834.5 485.1 835.4 480.0 C836.3 474.9 836.8 471.6 837.8 468.1 C838.8 464.6 839.9 461.2 841.6 458.8 C843.3 456.4 845.5 454.7 847.8 453.4 C850.1 452.1 852.9 451.5 855.5 450.8 C858.1 450.1 860.6 450.2 863.2 449.3 C865.8 448.4 868.4 447.1 871.0 445.3 C873.6 443.6 876.1 441.4 878.7 438.8 C881.3 436.2 883.8 433.0 886.4 429.5 C889.0 426.0 891.5 422.0 894.1 417.9 C896.7 413.8 899.1 409.4 901.9 404.8 C904.7 400.2 907.8 395.7 910.8 390.0 C913.8 384.3 917.0 377.0 920.1 370.4 C923.2 363.8 926.2 357.0 929.3 350.3 C932.4 343.6 935.5 336.9 938.6 330.2 C941.7 323.5 945.3 315.5 947.9 310.2 C950.5 304.9 952.0 301.8 954.1 298.6 C956.2 295.4 957.9 292.9 960.2 290.8 C962.5 288.7 965.4 287.0 968.0 285.9 C970.6 284.8 973.1 284.4 975.7 284.4 C978.3 284.4 980.8 284.7 983.4 285.9 C986.0 287.1 988.5 289.1 991.1 291.6 C993.7 294.1 996.7 298.2 998.8 300.9 C1000.9 303.6 1002.2 305.8 1003.5 307.8 C1004.8 309.9 1006.1 312.3 1006.6 313.2" fill="none" stroke="#050505" stroke-width="3.1" stroke-linecap="butt" stroke-linejoin="round"/><circle cx="403.4" cy="597.6" r="1.7" fill="#e0d000"/></svg></div><svg style="left:30px;top:115.5px;" width="17" height="13" viewBox="0 0 17 13"><g fill="#1c1c1c" stroke="#0a0a0a" stroke-width="0.5"><circle cx="4.5" cy="5.5" r="2.8"/><circle cx="9" cy="3.6" r="3"/><path d="M5 7 L11.5 5 L14 8 L8 11.5Z"/><circle cx="9" cy="9" r="2.7"/></g><g fill="none" stroke="#8a8a8a" stroke-width="0.6"><circle cx="4.6" cy="5.6" r="1.3"/><circle cx="9" cy="3.8" r="1.3"/><circle cx="9" cy="9" r="1.2"/></g><path d="M12 6.5 L15.5 8.5" stroke="#111" stroke-width="1.6"/></svg><span class="t" style="left:50.70px;top:118.10px;font-size:7.8px;line-height:7.8px;color:#f4f4f4;font-weight:bold;transform:scaleX(0.9589);text-shadow:0.6px 0.6px 0.8px #000,0 0 1.5px rgba(0,0,0,0.8);">View</span><div style="left:1216.2px;top:110.1px;width:28.4px;height:11.2px;background:rgba(62,84,100,0.5);border:0.75px solid rgba(200,212,220,0.62);box-sizing:border-box;border-radius:5.6px;"></div><span class="t" style="left:1220.00px;top:112.97px;font-size:6.3px;line-height:6.3px;color:#d6dcdf;transform:scaleX(0.9493);">Persp</span><svg style="left:1236.6px;top:114.3px;" width="5" height="3.5" viewBox="0 0 5 3.5"><path d="M0.4 0.5 H4.6 L2.5 3Z" fill="#e8e8e8"/></svg><div style="left:1249px;top:110.1px;width:34px;height:11.2px;background:rgba(62,84,100,0.5);border:0.75px solid rgba(200,212,220,0.62);box-sizing:border-box;border-radius:5.6px;"></div><span class="t" style="left:1252.80px;top:112.97px;font-size:6.3px;line-height:6.3px;color:#d6dcdf;transform:scaleX(0.9519);">No cam</span><svg style="left:1275px;top:114.3px;" width="5" height="3.5" viewBox="0 0 5 3.5"><path d="M0.4 0.5 H4.6 L2.5 3Z" fill="#e8e8e8"/></svg><svg style="left:24px;top:700.6px;" width="16" height="17" viewBox="0 0 16 17"><path d="M6.8 13.3 V4.5" stroke="#38d838" stroke-width="1.1"/><path d="M6.8 13.3 H1.2" stroke="#2840f0" stroke-width="1.1"/><path d="M6.8 13.3 L9 14.6" stroke="#e03030" stroke-width="1"/><text x="7" y="4.3" font-size="4.5" fill="#38d838" font-family="Liberation Sans">y</text><text x="0" y="12.3" font-size="4.5" fill="#2840f0" font-family="Liberation Sans">z</text><text x="9.5" y="16.3" font-size="4.8" fill="#e03030" font-family="Liberation Sans">x</text></svg><span class="t" style="left:1229.80px;top:710.28px;font-size:7.7px;line-height:7.7px;color:#e2e236;font-weight:bold;transform:scaleX(0.7348);">Education Edition</span><div style="left:4.7px;top:106.7px;width:18.3px;height:616.3px;background:#3b3b3b;"></div><div style="left:4.7px;top:107.4px;width:17.5px;height:4.7px;background:#484848;box-shadow:0 0 0 0.6px #222;"></div><svg style="left:5.3px;top:107.8px;" width="4" height="4" viewBox="0 0 4 4"><path d="M3.3 0.4 V3.6 L0.5 2Z" fill="#050505"/></svg><div style="left:22.2px;top:108px;width:0.8px;height:615px;background:#1f1f1f;"></div><div style="left:7px;top:116.3px;width:13.2px;height:12.6px;background:#5f7da6;border-radius:1px;"></div><svg style="left:8.8px;top:117.5px;" width="10" height="10" viewBox="0 0 10 10"><path d="M5 0.8 L8.5 7.5 L5.2 9.3 L1.6 7.3Z" fill="#f0c040"/><path d="M5 0.8 L5.2 9.3 L1.6 7.3Z" fill="#fae9a0"/><path d="M1.6 7.3 L5.2 9.3 L8.5 7.5 L5 6.2Z" fill="#c08a18"/></svg><svg style="left:18px;top:125.5px;" width="3" height="3" viewBox="0 0 3 3"><path d="M0.3 0.2 L2.7 1.5 L0.3 2.8Z" fill="#aaa"/></svg><div style="left:7px;top:129.8px;width:13.2px;height:12.6px;background:linear-gradient(#4e4e4e,#444);border-radius:1px;box-shadow:0 0 0 0.6px #2a2a2a;"></div><svg style="left:8.8px;top:131px;" width="10" height="10" viewBox="0 0 10 10"><path d="M5 1.5 L9 5 L5 8.5 L1 5Z" fill="#cbbf8f"/><path d="M5 1.5 L9 5 L5 5.6 L1 5Z" fill="#efe6c0"/><circle cx="5" cy="5" r="1" fill="#f0c040"/></svg><svg style="left:18px;top:139px;" width="3" height="3" viewBox="0 0 3 3"><path d="M0.3 0.2 L2.7 1.5 L0.3 2.8Z" fill="#aaa"/></svg><div style="left:7px;top:143.4px;width:13.2px;height:12.6px;background:linear-gradient(#4e4e4e,#444);border-radius:1px;box-shadow:0 0 0 0.6px #2a2a2a;"></div><svg style="left:8.8px;top:144.6px;" width="10" height="10" viewBox="0 0 10 10"><path d="M1.5 3 L5.5 1.3 L9 3.4 L8.6 7.8 L4.6 9.3 L1.3 7Z" fill="#e8c020"/><path d="M1.5 3 L5.5 1.3 L9 3.4 L5 5Z" fill="#f8e468"/></svg><svg style="left:18px;top:152.6px;" width="3" height="3" viewBox="0 0 3 3"><path d="M0.3 0.2 L2.7 1.5 L0.3 2.8Z" fill="#aaa"/></svg><div style="left:5px;top:160px;width:17px;height:0.7px;background:#4c4c4c;"></div><svg style="left:8.8px;top:166.5px;" width="11" height="11" viewBox="0 0 11 11"><path d="M2.5 0.8 V8.6 L4.6 6.8 L6.2 10 L7.5 9.4 L5.9 6.2 L8.6 6Z" fill="#1a1a1a" stroke="#999" stroke-width="0.6"/></svg><svg style="left:18px;top:174.6px;" width="3" height="3" viewBox="0 0 3 3"><path d="M0.3 0.2 L2.7 1.5 L0.3 2.8Z" fill="#aaa"/></svg><div style="left:7px;top:179.9px;width:13.2px;height:12.6px;background:#5f7da6;border-radius:1px;"></div><svg style="left:9.8px;top:181.5px;" width="8" height="9" viewBox="0 0 8 9"><rect x="1" y="4" width="6" height="4.6" rx="0.6" fill="#f0f0f0"/><path d="M2.3 4 V2.8 Q2.3 1 4 1 Q5.7 1 5.7 2.8 V4" fill="none" stroke="#f0f0f0" stroke-width="1"/><rect x="3.5" y="5.4" width="1" height="1.8" fill="#6a8ab5"/></svg><svg style="left:8.8px;top:196.4px;" width="10" height="10" viewBox="0 0 10 10"><circle cx="5" cy="4.5" r="2.3" fill="#b8b8b8"/><path d="M1 8.5 L3.5 6 M9 8.5 L6.5 6 M1.5 2 L3.3 3.4" stroke="#d83030" stroke-width="1.3"/></svg><svg style="left:18px;top:204.4px;" width="3" height="3" viewBox="0 0 3 3"><path d="M0.3 0.2 L2.7 1.5 L0.3 2.8Z" fill="#aaa"/></svg><svg style="left:8.8px;top:212.5px;" width="10" height="10" viewBox="0 0 10 10"><circle cx="5" cy="3.6" r="2.3" fill="#c8c8c8"/><path d="M1 7.8 Q5 10.5 9 7.8" stroke="#d84a20" stroke-width="1.5" fill="none"/><path d="M1 6.6 v2.4 M9 6.6 v2.4" stroke="#d83030" stroke-width="1.2"/></svg><svg style="left:18px;top:220.5px;" width="3" height="3" viewBox="0 0 3 3"><path d="M0.3 0.2 L2.7 1.5 L0.3 2.8Z" fill="#aaa"/></svg><svg style="left:8.8px;top:228.1px;" width="10" height="10" viewBox="0 0 10 10"><rect x="3.2" y="2.6" width="3.6" height="4.8" fill="#909090"/><path d="M5 0.5 V2.6 M1 9.5 L3.2 7.4 M9 9.5 L6.8 7.4" stroke="#d83030" stroke-width="1.2"/><path d="M5 0 l1.3 1.8 h-2.6Z" fill="#d83030"/></svg><svg style="left:18px;top:236.1px;" width="3" height="3" viewBox="0 0 3 3"><path d="M0.3 0.2 L2.7 1.5 L0.3 2.8Z" fill="#aaa"/></svg><svg style="left:8.8px;top:243.4px;" width="10" height="10" viewBox="0 0 10 10"><path d="M5 1 V9 M1.6 2.5 L8.4 8 M8.4 2.5 L1.6 8" stroke="#c8c8c8" stroke-width="0.9"/><circle cx="5" cy="5" r="1.2" fill="#d83030"/></svg><svg style="left:18px;top:251.4px;" width="3" height="3" viewBox="0 0 3 3"><path d="M0.3 0.2 L2.7 1.5 L0.3 2.8Z" fill="#aaa"/></svg><svg style="left:8.8px;top:259.9px;" width="10" height="10" viewBox="0 0 10 10"><path d="M5 1 L8.5 8.5 H1.5Z" fill="#48b848"/><path d="M5 1 L5 8.5 H1.5Z" fill="#e8d030"/><path d="M5 5 L8.5 8.5 L5 8.5Z" fill="#3878d8"/><circle cx="5" cy="5.6" r="1.1" fill="#e03030"/></svg><svg style="left:18px;top:267.9px;" width="3" height="3" viewBox="0 0 3 3"><path d="M0.3 0.2 L2.7 1.5 L0.3 2.8Z" fill="#aaa"/></svg><div style="left:5px;top:275.5px;width:17px;height:0.7px;background:#4c4c4c;"></div><svg style="left:8.8px;top:280.4px;" width="10" height="10" viewBox="0 0 10 10"><path d="M2 8 V4.5 Q2 1.5 5 1.5 Q8 1.5 8 4.5 V8" fill="none" stroke="#d83030" stroke-width="1.9"/><path d="M1 7 H3 V8.6 H1Z M7 7 H9 V8.6 H7Z" fill="#e8e8e8"/></svg><svg style="left:18px;top:288.4px;" width="3" height="3" viewBox="0 0 3 3"><path d="M0.3 0.2 L2.7 1.5 L0.3 2.8Z" fill="#aaa"/></svg><svg style="left:8.8px;top:295.7px;" width="10" height="10" viewBox="0 0 10 10"><path d="M2 8 V4.5 Q2 1.5 5 1.5 Q8 1.5 8 4.5 V8" fill="none" stroke="#c8c8c8" stroke-width="1.7"/><path d="M4 8 l1 -1.4 l1 1.4 l-1 1.4Z" fill="#d83030"/></svg><svg style="left:18px;top:303.7px;" width="3" height="3" viewBox="0 0 3 3"><path d="M0.3 0.2 L2.7 1.5 L0.3 2.8Z" fill="#aaa"/></svg><div style="left:5px;top:311px;width:17px;height:0.7px;background:#4c4c4c;"></div><div style="left:7px;top:315px;width:13.2px;height:12.6px;background:#5f7da6;border-radius:1px;"></div><svg style="left:8.3px;top:316.5px;" width="11" height="10" viewBox="0 0 11 10"><g fill="#1c1c1c"><circle cx="3.3" cy="4.2" r="2.2"/><circle cx="6.6" cy="2.8" r="2.3"/><path d="M3.5 5.5 L8.5 4 L10.5 6.3 L6 9Z"/><circle cx="6.6" cy="6.8" r="2.1"/></g><circle cx="3.4" cy="4.3" r="0.9" fill="none" stroke="#8a9ab0" stroke-width="0.5"/><circle cx="6.6" cy="3" r="0.9" fill="none" stroke="#8a9ab0" stroke-width="0.5"/></svg><svg style="left:18px;top:324.2px;" width="3" height="3" viewBox="0 0 3 3"><path d="M0.3 0.2 L2.7 1.5 L0.3 2.8Z" fill="#aaa"/></svg><svg style="left:8.8px;top:332.2px;" width="11" height="10" viewBox="0 0 11 10"><circle cx="4.4" cy="4.6" r="3.5" fill="none" stroke="#dcdcdc" stroke-width="0.9"/><path d="M4.4 2.4 V4.8 H6.2" stroke="#dcdcdc" stroke-width="0.8" fill="none"/><rect x="5.8" y="5.5" width="4" height="3.6" fill="#d8d8d8" stroke="#d05050" stroke-width="0.7"/></svg><svg style="left:18px;top:340.2px;" width="3" height="3" viewBox="0 0 3 3"><path d="M0.3 0.2 L2.7 1.5 L0.3 2.8Z" fill="#aaa"/></svg><svg style="left:8.8px;top:347.9px;" width="10" height="10" viewBox="0 0 10 10"><ellipse cx="5" cy="6.6" rx="4.2" ry="2.3" fill="#e4e4e4"/><path d="M2.2 5.2 Q5 0.5 7.8 5.2Z" fill="#3a3a3a"/><ellipse cx="5" cy="5.3" rx="2.8" ry="1" fill="#8ab8d8"/></svg><svg style="left:18px;top:355.9px;" width="3" height="3" viewBox="0 0 3 3"><path d="M0.3 0.2 L2.7 1.5 L0.3 2.8Z" fill="#aaa"/></svg><svg style="left:7.3px;top:695px;" width="10" height="10" viewBox="0 0 10 10"><path d="M1.5 3.6 L6.5 1.4 L9 4.8 L4.2 7.6Z" fill="#e8e8e8"/><path d="M3 3.8 L6 2.5 L7.5 4.6 L4.6 6.2Z" fill="#c05040"/><path d="M4.2 7.6 L9 4.8 V6 L4.4 8.8Z" fill="#999"/></svg><svg style="left:18px;top:703.5px;" width="3" height="3" viewBox="0 0 3 3"><path d="M0.3 0.2 L2.7 1.5 L0.3 2.8Z" fill="#aaa"/></svg><svg style="left:7.3px;top:708.5px;" width="10" height="10" viewBox="0 0 10 10"><ellipse cx="5" cy="5" rx="4.3" ry="3.3" fill="#c8c8c8"/><ellipse cx="5" cy="4.3" rx="3" ry="1.8" fill="#8a8a8a"/><path d="M2.5 5 L7.5 3.6 M3 3.6 L7 5.5" stroke="#e4e4e4" stroke-width="0.6"/></svg><svg style="left:18px;top:717px;" width="3" height="3" viewBox="0 0 3 3"><path d="M0.3 0.2 L2.7 1.5 L0.3 2.8Z" fill="#aaa"/></svg><div style="left:1286px;top:106.7px;width:14px;height:616.3px;background:#3a3a3a;"></div><div style="left:1286px;top:108px;width:0.8px;height:615px;background:#222;"></div><div style="left:1286.8px;top:108px;width:13.2px;height:4.5px;background:#4a4a4a;"></div><svg style="left:1295.5px;top:108.3px;" width="4" height="4" viewBox="0 0 4 4"><path d="M0.6 0.5 V3.5 L3.5 2Z" fill="#0a0a0a"/></svg><div style="left:1287.3px;top:114.9px;width:12.2px;height:12.6px;background:#5f7da6;border-radius:1px;"></div><svg style="left:1288.8px;top:117px;" width="9" height="8" viewBox="0 0 9 8"><path d="M0.5 4 L4.5 2 L8.5 4 L4.5 6Z" fill="#bfcad6"/><path d="M2 4 L7 4 M4.5 2.8 V5.2" stroke="#6a8ab5" stroke-width="0.5"/></svg><svg style="left:1296.6px;top:124.2px;" width="3" height="3" viewBox="0 0 3 3"><path d="M0.3 0.2 L2.7 1.5 L0.3 2.8Z" fill="#aaa"/></svg><svg style="left:1288.8px;top:130.3px;" width="9" height="9" viewBox="0 0 9 9"><path d="M0.8 2 H5.8 L7.8 5 H2.8Z" fill="none" stroke="#9ad070" stroke-width="0.9"/><path d="M2 3.5 H6.6 M3.3 2 L5.3 5" stroke="#9ad070" stroke-width="0.6"/><path d="M5.5 5.5 L8 8" stroke="#ddd" stroke-width="1"/></svg><svg style="left:1296.6px;top:137.7px;" width="3" height="3" viewBox="0 0 3 3"><path d="M0.3 0.2 L2.7 1.5 L0.3 2.8Z" fill="#aaa"/></svg><svg style="left:1289.3px;top:144px;" width="8" height="9" viewBox="0 0 8 9"><rect x="1" y="4" width="6" height="4.4" rx="0.6" fill="#e2e2e2"/><path d="M2.3 4 V2.8 Q2.3 1 4 1 Q5.7 1 5.7 2.8 V4" fill="none" stroke="#e2e2e2" stroke-width="1"/></svg><svg style="left:1289.3px;top:158px;" width="8" height="9" viewBox="0 0 8 9"><path d="M4 0.8 Q6.8 0.8 6.8 3.4 Q6.8 4.8 5.2 6 V7 H2.8 V6 Q1.2 4.8 1.2 3.4 Q1.2 0.8 4 0.8Z" fill="none" stroke="#e2e2e2" stroke-width="0.8"/><path d="M3 8 H5" stroke="#e2e2e2" stroke-width="0.8"/><circle cx="4" cy="3.4" r="0.9" fill="#e2e2e2"/></svg><svg style="left:1288.8px;top:171.5px;" width="9" height="9" viewBox="0 0 9 9"><path d="M4.5 0.6 L8.4 4.5 L4.5 8.4 L0.6 4.5Z" fill="#1a1a1a" stroke="#e2e2e2" stroke-width="0.8"/><path d="M4.5 2.3 Q6 2.3 6 3.7 Q6 4.6 5.2 5.2 V5.8 H3.8 V5.2 Q3 4.6 3 3.7 Q3 2.3 4.5 2.3Z" fill="#e2e2e2"/></svg><svg style="left:1296.6px;top:179px;" width="3" height="3" viewBox="0 0 3 3"><path d="M0.3 0.2 L2.7 1.5 L0.3 2.8Z" fill="#aaa"/></svg><div style="left:1287.3px;top:183.2px;width:12.2px;height:12.6px;background:#5f7da6;border-radius:1px;"></div><svg style="left:1289.3px;top:185px;" width="8" height="9" viewBox="0 0 8 9"><path d="M4 0.8 Q6.8 0.8 6.8 3.4 Q6.8 4.8 5.2 6 V7 H2.8 V6 Q1.2 4.8 1.2 3.4 Q1.2 0.8 4 0.8Z" fill="#f4f4f4"/><path d="M3 8 H5" stroke="#f4f4f4" stroke-width="0.9"/></svg><svg style="left:1296.6px;top:192.5px;" width="3" height="3" viewBox="0 0 3 3"><path d="M0.3 0.2 L2.7 1.5 L0.3 2.8Z" fill="#aaa"/></svg><div style="left:1287.3px;top:198.8px;width:12.2px;height:12.6px;background:#5f7da6;border-radius:1px;"></div><svg style="left:1288.8px;top:200.6px;" width="9" height="9" viewBox="0 0 9 9"><circle cx="4.5" cy="4.5" r="3.6" fill="#222" stroke="#ddd" stroke-width="0.7"/><path d="M4.5 0.9 A3.6 3.6 0 0 1 8.1 4.5 L4.5 4.5Z" fill="#e8e8e8"/><path d="M4.5 8.1 A3.6 3.6 0 0 1 0.9 4.5 L4.5 4.5Z" fill="#aaa"/></svg><svg style="left:1296.6px;top:208.1px;" width="3" height="3" viewBox="0 0 3 3"><path d="M0.3 0.2 L2.7 1.5 L0.3 2.8Z" fill="#aaa"/></svg><svg style="left:1288.8px;top:214.5px;" width="9" height="8" viewBox="0 0 9 8"><path d="M0.5 1.5 L4 2.5 L8.5 5.5 M2 4.5 L6 6.5" stroke="#e2e2e2" stroke-width="0.8" fill="none"/><circle cx="4" cy="2.5" r="1" fill="#e2e2e2"/></svg><svg style="left:1296.6px;top:221.7px;" width="3" height="3" viewBox="0 0 3 3"><path d="M0.3 0.2 L2.7 1.5 L0.3 2.8Z" fill="#aaa"/></svg><svg style="left:1288.8px;top:228px;" width="9" height="9" viewBox="0 0 9 9"><path d="M1 7.5 L3 3.5 L6.5 3 L8 6.5 L5 8.5Z" fill="#c8c8c8"/><circle cx="3.6" cy="2.2" r="1.2" fill="#e2e2e2"/><path d="M6 1 L8 2.5" stroke="#e2e2e2" stroke-width="0.8"/></svg><svg style="left:1296.6px;top:235.2px;" width="3" height="3" viewBox="0 0 3 3"><path d="M0.3 0.2 L2.7 1.5 L0.3 2.8Z" fill="#aaa"/></svg><svg style="left:1292.1px;top:247.1px;" width="2.4" height="2.4" viewBox="0 0 2.4 2.4"><circle cx="1.2" cy="1.2" r="1.1" fill="#e2e2e2"/></svg><svg style="left:1289.8px;top:259px;" width="7" height="7" viewBox="0 0 7 7"><path d="M1 6 L5.8 1.2 M1 6 V3.6 M1 6 H3.4" stroke="#e2e2e2" stroke-width="0.9" fill="none"/></svg><svg style="left:1289.8px;top:273px;" width="7" height="7" viewBox="0 0 7 7"><path d="M1 6 L4 3" stroke="#e2e2e2" stroke-width="0.8"/><path d="M3.4 2.4 L5.4 0.8 L6.4 1.8 L4.8 3.8Z" fill="#e2e2e2"/></svg><svg style="left:1288.8px;top:286.5px;" width="10" height="8" viewBox="0 0 10 8"><circle cx="2" cy="6" r="1.3" fill="#e2e2e2"/><path d="M2 6 L4 2.5" stroke="#e2e2e2" stroke-width="0.7"/><text x="4.2" y="4.6" font-size="4.6" fill="#e2e2e2" font-family="Liberation Sans" font-weight="bold">12</text></svg><svg style="left:1288.8px;top:300.5px;" width="9" height="8" viewBox="0 0 9 8"><path d="M1 5.5 L5 2 L7 4.5 L3.5 7.5Z" fill="#e2e2e2"/><path d="M6 1 V6.5" stroke="#e2e2e2" stroke-width="0.8"/></svg><svg style="left:1288.8px;top:314.5px;" width="10" height="8" viewBox="0 0 10 8"><path d="M1 6 L4.5 2.6 L6.5 5 L3 7.8Z" fill="#e2e2e2"/><text x="5" y="4.3" font-size="4.4" fill="#e2e2e2" font-family="Liberation Sans" font-weight="bold">12</text></svg><svg style="left:1288.8px;top:328px;" width="9" height="9" viewBox="0 0 9 9"><path d="M1.2 8.5 V1.5 H8.5" stroke="#e2e2e2" stroke-width="0.9" fill="none"/><path d="M1.2 1.5 L4 4" stroke="#888" stroke-width="0.6"/></svg><svg style="left:1288.8px;top:342.5px;" width="9" height="8" viewBox="0 0 9 8"><path d="M0.8 6.8 Q3 1.5 8 2.8 L6 6.8Z" fill="#d8d8d8"/><path d="M4 3 Q6.5 2 8 2.8 L6 6.8Z" fill="#4a90e0"/></svg><svg style="left:1288.8px;top:356.5px;" width="9" height="9" viewBox="0 0 9 9"><rect x="0.8" y="0.8" width="7.4" height="7.4" fill="#e8c8c8" stroke="#ddd" stroke-width="0.6"/><path d="M0.8 0.8 L8.2 8.2 M8.2 0.8 L0.8 8.2" stroke="#c05050" stroke-width="0.6"/><rect x="2.8" y="2.8" width="3.4" height="3.4" fill="#b8d0e8"/></svg><svg style="left:1288.8px;top:370.8px;" width="9" height="8" viewBox="0 0 9 8"><path d="M4.5 0.8 L8.2 4 L4.5 7.2 L0.8 4Z" fill="#7fb0e0"/><path d="M0.8 4 H8.2" stroke="#e8e8e8" stroke-width="0.7"/></svg><svg style="left:1288.8px;top:384.5px;" width="9" height="8" viewBox="0 0 9 8"><rect x="0.8" y="1.2" width="7.4" height="5.6" rx="1" fill="#58c070"/><rect x="2.3" y="2.6" width="1.8" height="2.8" fill="#d8f0d8"/><rect x="5" y="2.6" width="1.8" height="2.8" fill="#d8f0d8"/></svg><svg style="left:1288.8px;top:398.3px;" width="9" height="9" viewBox="0 0 9 9"><path d="M4.5 4.5 L4.5 0.8 M4.5 4.5 L1 7.5 M4.5 4.5 L8.2 6" stroke="#e2e2e2" stroke-width="0.9"/><circle cx="4.5" cy="4.5" r="1" fill="#e2e2e2"/></svg><svg style="left:1288.8px;top:412.2px;" width="9" height="9" viewBox="0 0 9 9"><circle cx="4.5" cy="4.5" r="3.7" fill="none" stroke="#e2e2e2" stroke-width="0.8"/><rect x="2.8" y="2.8" width="3.4" height="3.4" fill="#e2e2e2"/></svg><div style="left:1287.3px;top:424.4px;width:12.2px;height:12.6px;background:#5f7da6;border-radius:1px;"></div><svg style="left:1288.8px;top:426.5px;" width="9" height="8.5" viewBox="0 0 9 8.5"><rect x="0.8" y="0.8" width="7.4" height="6.6" fill="#f0f0f0"/><rect x="1.8" y="1.8" width="5.4" height="3" fill="#3a5a7a"/><path d="M1.8 6.2 H7.2" stroke="#555" stroke-width="0.7"/></svg><div style="left:1287.3px;top:444.5px;width:12.2px;height:12.6px;background:#5f7da6;border-radius:1px;"></div><svg style="left:1289.3px;top:446.3px;" width="8" height="9" viewBox="0 0 8 9"><path d="M4 0.8 Q6.8 0.8 6.8 3.4 Q6.8 4.8 5.2 6 V7 H2.8 V6 Q1.2 4.8 1.2 3.4 Q1.2 0.8 4 0.8Z" fill="#e8eef4"/><path d="M3 8 H5" stroke="#e8eef4" stroke-width="0.9"/><circle cx="4" cy="3.4" r="1" fill="#6a8ab5"/></svg><svg style="left:1288.8px;top:683.7px;" width="9" height="9" viewBox="0 0 9 9"><circle cx="4.5" cy="4.5" r="3.7" fill="none" stroke="#e2e2e2" stroke-width="0.8"/><path d="M4.5 3.8 V6.6 M4.5 2.2 V3" stroke="#e2e2e2" stroke-width="0.9"/></svg><div style="left:1287.3px;top:696.1px;width:12.2px;height:12.6px;background:#5f7da6;border-radius:1px;"></div><svg style="left:1288.8px;top:698px;" width="9" height="9" viewBox="0 0 9 9"><rect x="0.9" y="0.9" width="7.2" height="7.2" fill="#dfe6f0" stroke="#e8cc28" stroke-width="1.2"/><path d="M4.5 0.9 V8.1 M0.9 4.5 H8.1" stroke="#e8cc28" stroke-width="0.9"/></svg><svg style="left:1288.8px;top:711px;" width="10" height="10" viewBox="0 0 10 10"><rect x="0.6" y="0.6" width="7.8" height="7.6" fill="#f0f0f0"/><path d="M2.2 4 Q4.5 1.6 6.8 4 L5.6 4 V6.4 H3.4 V4Z" fill="#151515"/><path d="M7.6 8 L9.6 8.8 L8 10Z" fill="#aaa"/></svg><div style="left:1300px;top:60px;width:5px;height:663px;background:#3b3b3b;"></div><div style="left:1300px;top:60px;width:0.8px;height:663px;background:#1c1c1c;"></div><div style="left:1304.3px;top:60px;width:0.7px;height:663px;background:#2a2a2a;"></div><svg style="left:1301px;top:371px;" width="3" height="40" viewBox="0 0 3 40"><path d="M2.4 0.5 V3.5 L0.5 2Z M2.4 36 V39 L0.5 37.5Z" fill="#999"/><g fill="#777"><rect x="1" y="13" width="1.2" height="1"/><rect x="1" y="16" width="1.2" height="1"/><rect x="1" y="19" width="1.2" height="1"/><rect x="1" y="22" width="1.2" height="1"/><rect x="1" y="25" width="1.2" height="1"/></g></svg><div style="left:1305px;top:60px;width:615px;height:663px;background:#3a3a3a;"></div><div style="left:1305px;top:60px;width:615px;height:2.5px;background:#4d4d4d;"></div><div style="left:1305px;top:62.3px;width:615px;height:0.8px;background:#222;"></div><svg style="left:1593px;top:60.2px;" width="60" height="2.4" viewBox="0 0 60 2.4"><path d="M1 0.4 H4 L2.5 2Z M36 0.4 H39 L37.5 2Z" fill="#bbb"/><g fill="#888"><rect x="14" y="0.5" width="1" height="1.4"/><rect x="17" y="0.5" width="1" height="1.4"/><rect x="20" y="0.5" width="1" height="1.4"/><rect x="23" y="0.5" width="1" height="1.4"/><rect x="26" y="0.5" width="1" height="1.4"/></g></svg><div style="left:1305px;top:63.5px;width:615px;height:10.5px;background:#2c2c2c;"></div><div style="left:1306px;top:63.5px;width:27.6px;height:11px;background:linear-gradient(#4c4c4c,#414141);"></div><span class="t" style="left:1307.50px;top:66.57px;font-size:5.7px;line-height:5.7px;color:#b9b9b9;transform:scaleX(1.0249);">/obj</span><svg style="left:1327.8px;top:67.1px;" width="3" height="3" viewBox="0 0 3 3"><path d="M0.7 0.7 L2.3 2.3 M2.3 0.7 L0.7 2.3" stroke="#d8d8d8" stroke-width="0.95"/></svg><div style="left:1333.9px;top:63.5px;width:1.1px;height:10.5px;background:#1c1c1c;"></div><div style="left:1335px;top:64.1px;width:41.4px;height:9.7px;background:#323232;"></div><div style="left:1376.4px;top:63.5px;width:1px;height:10.5px;background:#1c1c1c;"></div><span class="t" style="left:1338.30px;top:66.57px;font-size:5.7px;line-height:5.7px;color:#bdbdbd;transform:scaleX(0.9584);">Tree View</span><svg style="left:1370.8px;top:67.1px;" width="3" height="3" viewBox="0 0 3 3"><path d="M0.7 0.7 L2.3 2.3 M2.3 0.7 L0.7 2.3" stroke="#d8d8d8" stroke-width="0.95"/></svg><div style="left:1376.9px;top:63.5px;width:1.1px;height:10.5px;background:#1c1c1c;"></div><div style="left:1378px;top:64.1px;width:55.1px;height:9.7px;background:#323232;"></div><div style="left:1433.1px;top:63.5px;width:1px;height:10.5px;background:#1c1c1c;"></div><span class="t" style="left:1381.50px;top:66.57px;font-size:5.7px;line-height:5.7px;color:#bdbdbd;transform:scaleX(0.9889);">Material Palette</span><svg style="left:1427.3px;top:67.1px;" width="3" height="3" viewBox="0 0 3 3"><path d="M0.7 0.7 L2.3 2.3 M2.3 0.7 L0.7 2.3" stroke="#d8d8d8" stroke-width="0.95"/></svg><svg style="left:1438px;top:65.2px;" width="7" height="7" viewBox="0 0 7 7"><path d="M3.5 0.8 V6.2 M0.8 3.5 H6.2" stroke="#e0e0e0" stroke-width="1.3"/></svg><svg style="left:1901px;top:66px;" width="18" height="6" viewBox="0 0 18 6"><rect x="0.5" y="0.8" width="5.4" height="3.8" fill="#e8e8e8"/><path d="M12.5 1 H16.5 L14.5 3.8Z" fill="#ddd"/></svg><div style="left:1305px;top:74.2px;width:615px;height:18px;background:linear-gradient(#454545,#3c3c3c);"></div><svg style="left:1308.5px;top:78.8px;" width="22" height="10" viewBox="0 0 22 10"><path d="M0.8 4.3 L4.5 1 V3 H8 V5.8 H4.5 V7.6Z" fill="#d6d6d6"/><path d="M6.3 7.3 L7.8 8.4 L6.3 9.5Z" fill="#aaa"/><path d="M21 4.3 L17.5 1.3 V3.1 H14.2 V5.6 H17.5 V7.3Z" fill="#5e5e5e"/></svg><div style="left:1335px;top:77.3px;width:554px;height:13.2px;background:#353535;border:0.7px solid #1a1a1a;box-sizing:border-box;border-radius:1px;box-shadow:0 0.7px 0 #555;"></div><div style="left:1879px;top:78px;width:9.3px;height:11.8px;background:#2e2e2e;"></div><svg style="left:1881.5px;top:82px;" width="5" height="4" viewBox="0 0 5 4"><path d="M0.5 0.6 H4.5 L2.5 3.4Z" fill="#999"/></svg><svg style="left:1338.3px;top:79.3px;" width="9" height="9" viewBox="0 0 9 9"><path d="M0.5 3 H8.5 V8.5 H0.5Z" fill="#9c9c9c"/><path d="M0.5 2.2 L8.5 0.6" stroke="#bdbdbd" stroke-width="1.1" stroke-dasharray="1.2 0.8"/><path d="M1.5 5 H4.5 V6.2 H1.5Z" fill="#4a4a4a"/><path d="M5 6.5 H7.5 V7.5 H5Z" fill="#555"/></svg><span class="t" style="left:1350.30px;top:80.71px;font-size:6.6px;line-height:6.6px;color:#cfcfcf;transform:scaleX(0.9389);">obj</span><svg style="left:1895px;top:79.5px;" width="10" height="9" viewBox="0 0 10 9"><path d="M0.5 4.5 H3.6" stroke="#bdbdbd" stroke-width="0.9"/><path d="M3.6 2.2 V6.8 L6.6 6 V3Z" fill="#d0d0d0"/><path d="M6.9 1.6 V7.4" stroke="#d0d0d0" stroke-width="1.1"/><path d="M7.4 4.5 H9" stroke="#9a9a9a" stroke-width="0.8"/></svg><svg style="left:1907px;top:79px;" width="10" height="10" viewBox="0 0 10 10"><circle cx="5" cy="5" r="4.1" fill="#2a2e38" stroke="#3f66a6" stroke-width="0.8"/><circle cx="5" cy="5" r="2.4" fill="none" stroke="#3a5c96" stroke-width="0.55"/><circle cx="5" cy="5" r="0.9" fill="#5f94e4"/></svg><div style="left:1305px;top:92.2px;width:615px;height:14px;background:linear-gradient(#3f3f3f,#383838);"></div><div style="left:1305px;top:92.2px;width:615px;height:0.7px;background:#2a2a2a;"></div><div style="left:1305.5px;top:93.5px;width:3px;height:12px;background:#4c4c4c;"></div><div style="left:1308.7px;top:93.5px;width:0.8px;height:12px;background:#151515;"></div><svg style="left:1305.4px;top:94px;" width="3.4" height="3.4" viewBox="0 0 3.4 3.4"><path d="M1.7 0.4 L3.1 3 H0.3Z" fill="#0a0a0a"/></svg><span class="t" style="left:1314.80px;top:96.31px;font-size:7.2px;line-height:7.2px;color:#cfcfcf;transform:scaleX(0.8993);">Add</span><span class="t" style="left:1334.70px;top:96.31px;font-size:7.2px;line-height:7.2px;color:#cfcfcf;transform:scaleX(0.9606);">Edit</span><span class="t" style="left:1354.80px;top:96.31px;font-size:7.2px;line-height:7.2px;color:#cfcfcf;transform:scaleX(0.8583);">Go</span><span class="t" style="left:1371.70px;top:96.31px;font-size:7.2px;line-height:7.2px;color:#cfcfcf;transform:scaleX(0.9304);">View</span><span class="t" style="left:1394.00px;top:96.31px;font-size:7.2px;line-height:7.2px;color:#cfcfcf;transform:scaleX(0.9750);">Tools</span><span class="t" style="left:1418.50px;top:96.31px;font-size:7.2px;line-height:7.2px;color:#cfcfcf;transform:scaleX(0.9557);">Layout</span><span class="t" style="left:1446.00px;top:96.31px;font-size:7.2px;line-height:7.2px;color:#cfcfcf;transform:scaleX(0.9097);">Labs</span><span class="t" style="left:1467.00px;top:96.31px;font-size:7.2px;line-height:7.2px;color:#cfcfcf;transform:scaleX(0.9725);">Help</span><svg style="left:1745.5px;top:95px;" width="10" height="10" viewBox="0 0 10 10"><path d="M1.5 8.8 L8 2 M2 1.2 L8.8 8.5" stroke="#e4e4e4" stroke-width="1.2"/><path d="M1 1 L3.4 1.2 L1.6 3Z M7 1 L9.3 1.6 L8.4 3.4Z" fill="#e4e4e4"/></svg><svg style="left:1759px;top:95.5px;" width="9" height="10" viewBox="0 0 9 10"><path d="M1.5 1 V8 H7 M1.5 4 H6 M4 6 H7" stroke="#e4e4e4" stroke-width="0.9" fill="none"/><rect x="0.6" y="0.4" width="2" height="1.8" fill="#e4e4e4"/></svg><svg style="left:1773px;top:96px;" width="9" height="9" viewBox="0 0 9 9"><path d="M0.8 1.5 H8 M0.8 3.6 H8 M0.8 5.7 H8 M0.8 7.8 H8" stroke="#e4e4e4" stroke-width="1.4"/></svg><svg style="left:1795.5px;top:95.5px;" width="9" height="9" viewBox="0 0 9 9"><rect x="0.5" y="0.5" width="8" height="8" fill="#e0e0e0"/><g><rect x="1" y="1" width="2.2" height="2.2" fill="#d03030"/><rect x="3.5" y="1" width="2.2" height="2.2" fill="#e0c020"/><rect x="6" y="1" width="2.2" height="2.2" fill="#e08020"/><rect x="1" y="3.5" width="2.2" height="2.2" fill="#30a030"/><rect x="3.5" y="3.5" width="2.2" height="2.2" fill="#3060d0"/><rect x="6" y="3.5" width="2.2" height="2.2" fill="#30b0b0"/><rect x="1" y="6" width="2.2" height="2.2" fill="#9030b0"/><rect x="3.5" y="6" width="2.2" height="2.2" fill="#d8d8d8"/><rect x="6" y="6" width="2.2" height="2.2" fill="#404040"/></g></svg><svg style="left:1809.5px;top:95.5px;" width="9" height="9" viewBox="0 0 9 9"><rect x="0.5" y="0.5" width="8" height="8" fill="#333" stroke="#999" stroke-width="0.5"/><g fill="#c8c8c8"><rect x="1.3" y="1.5" width="2.6" height="1.2"/><rect x="5" y="1.5" width="2.6" height="1.2"/><rect x="1.3" y="4" width="2.6" height="1.2"/><rect x="5" y="4" width="2.6" height="1.2"/><rect x="1.3" y="6.4" width="2.6" height="1.2"/><rect x="5" y="6.4" width="2.6" height="1.2"/></g></svg><svg style="left:1832px;top:95.5px;" width="9" height="9" viewBox="0 0 9 9"><rect x="0.5" y="0.8" width="8" height="7.4" fill="#e4e4e4"/><path d="M1.5 2.5 H5 M4 4.5 H7.5 M1.5 6.5 H5" stroke="#333" stroke-width="1"/></svg><svg style="left:1845px;top:95px;" width="10" height="10" viewBox="0 0 10 10"><path d="M0.8 1.5 L9 0.8 L9 6.5 L6.5 9 L0.8 9Z" fill="#f0d838"/><path d="M9 6.5 L6.5 6.8 L6.5 9Z" fill="#b8a020"/><path d="M2.5 6.5 L4.5 4 L5.8 5.4" stroke="#8a7a18" stroke-width="0.6" fill="none"/></svg><svg style="left:1858.5px;top:95.5px;" width="10" height="9.5" viewBox="0 0 10 9.5"><rect x="0.5" y="0.5" width="8" height="7.6" fill="#3f8ae0"/><path d="M0.5 8.1 L3.5 4.2 L5.5 6.5 L6.8 5.2 L8.5 8.1Z" fill="#68c048"/><circle cx="6.3" cy="2.5" r="1" fill="#f8e860"/><circle cx="8.3" cy="8" r="1.4" fill="#222" stroke="#ddd" stroke-width="0.5"/></svg><svg style="left:1872.5px;top:96px;" width="10" height="9" viewBox="0 0 10 9"><path d="M1 3.2 H9 V8 H1Z" fill="#e09030"/><path d="M0.6 1.6 Q5 0.2 9.4 1.6 V3.4 H0.6Z" fill="#f0b050"/><rect x="4" y="3.2" width="2" height="1.8" fill="#8a5010"/></svg><svg style="left:1894.5px;top:95px;" width="11" height="11" viewBox="0 0 11 11"><circle cx="4.3" cy="4.3" r="3.2" fill="#4a4a4a" stroke="#e4e4e4" stroke-width="1"/><path d="M6.6 6.6 L10 10" stroke="#e4e4e4" stroke-width="1.5"/></svg><svg style="left:1908px;top:95.5px;" width="10" height="9.5" viewBox="0 0 10 9.5"><rect x="0.5" y="0.5" width="8.6" height="8.2" fill="#f0f0f0"/><circle cx="5" cy="4.2" r="1.5" fill="#222"/><path d="M2.6 8.7 Q2.6 5.6 5 5.6 Q7.4 5.6 7.4 8.7Z" fill="#222"/></svg><div style="left:1305px;top:106.2px;width:615px;height:616.8px;background:#2e2e2e;"></div><div style="left:1305px;top:106.2px;width:615px;height:0.8px;background:#1c1c1c;"></div><span class="t" style="left:1567.50px;top:114.98px;font-size:11.6px;line-height:11.6px;color:#3f3f3f;transform:scaleX(0.9726);">Education Edition</span><span class="t" style="left:1866.50px;top:117.11px;font-size:14.4px;line-height:14.4px;color:#494949;font-weight:bold;transform:scaleX(0.8914);">Objects</span><svg style="left:1418.7px;top:293.6px;" width="5.2" height="5.2" viewBox="0 0 5.2 5.2"><circle cx="2.6" cy="2.6" r="2.3" fill="#b4b4b4"/></svg><svg style="left:1418.7px;top:319px;" width="5.2" height="5.2" viewBox="0 0 5.2 5.2"><circle cx="2.6" cy="2.6" r="2.3" fill="#b4b4b4"/></svg><div style="left:1396.8px;top:303.7px;width:53.8px;height:16px;background:#d2d2d2;border-radius:2.5px;box-shadow:0 0 0 0.6px #555;"></div><div style="left:1394.8px;top:300.6px;width:53.6px;height:15.8px;background:linear-gradient(#d6d6d6,#c6c6c6);border-radius:2.5px;overflow:hidden;box-shadow:0 0 0 0.7px #5a5a5a;"><div style="left:0;top:0;width:7.6px;height:100%;background:#9be31c;transform:skewX(-6deg);transform-origin:0 0;"></div><div style="left:45.8px;top:0;width:9px;height:100%;background:#2f96ff;transform:skewX(-6deg);transform-origin:0 100%;"></div></div><svg style="left:1414.4px;top:302px;" width="14" height="13" viewBox="0 0 14 13"><path d="M0.9 1.6 V9.6 Q3.5 11.2 6.1 9.6 V1.6Z" fill="#4f86cc"/><path d="M1.3 2 V9.8 Q1.9 10.2 2.4 10.3 V2.4Z" fill="#a4c8ee"/><path d="M4.6 2.4 V10.3 Q5.5 10.1 6.1 9.6 V1.8Z" fill="#3a6cb0"/><ellipse cx="3.5" cy="1.6" rx="2.6" ry="1" fill="#a8ccf2"/><circle cx="10.4" cy="7" r="2.9" fill="#d8301f"/><circle cx="9.6" cy="6" r="0.9" fill="#f08878"/><path d="M6.9 4.8 L11.2 11.6 Q7.2 12.8 3.2 11.6Z" fill="#f2d22e"/><path d="M6.9 4.8 L6.6 12.3 Q4.8 12.2 3.2 11.6Z" fill="#fbf0a8"/></svg><span class="t" style="left:1453.00px;top:292.07px;font-size:9.6px;line-height:9.6px;color:#5e5e5e;transform:scaleX(1.0200);">Geometry</span><span class="t" style="left:1453.00px;top:302.48px;font-size:11.6px;line-height:11.6px;color:#dedede;transform:scaleX(0.9684);">bomb_geo</span><svg style="left:1418.7px;top:349px;" width="5.2" height="5.2" viewBox="0 0 5.2 5.2"><circle cx="2.6" cy="2.6" r="2.3" fill="#b4b4b4"/></svg><svg style="left:1418.7px;top:374.4px;" width="5.2" height="5.2" viewBox="0 0 5.2 5.2"><circle cx="2.6" cy="2.6" r="2.3" fill="#b4b4b4"/></svg><div style="left:1396.8px;top:359.1px;width:53.8px;height:16px;background:#d2d2d2;border-radius:2.5px;box-shadow:0 0 0 0.6px #555;"></div><div style="left:1394.8px;top:356px;width:53.6px;height:15.8px;background:linear-gradient(#d6d6d6,#c6c6c6);border-radius:2.5px;overflow:hidden;box-shadow:0 0 0 1.3px #f0c010, 0 0 0 2px #3a3000;"><div style="left:0;top:0;width:7.6px;height:100%;background:#9be31c;transform:skewX(-6deg);transform-origin:0 0;"></div><div style="left:45.8px;top:0;width:9px;height:100%;background:#2f96ff;transform:skewX(-6deg);transform-origin:0 100%;"></div></div><svg style="left:1414.4px;top:357.4px;" width="14" height="13" viewBox="0 0 14 13"><path d="M0.9 1.6 V9.6 Q3.5 11.2 6.1 9.6 V1.6Z" fill="#4f86cc"/><path d="M1.3 2 V9.8 Q1.9 10.2 2.4 10.3 V2.4Z" fill="#a4c8ee"/><path d="M4.6 2.4 V10.3 Q5.5 10.1 6.1 9.6 V1.8Z" fill="#3a6cb0"/><ellipse cx="3.5" cy="1.6" rx="2.6" ry="1" fill="#a8ccf2"/><circle cx="10.4" cy="7" r="2.9" fill="#d8301f"/><circle cx="9.6" cy="6" r="0.9" fill="#f08878"/><path d="M6.9 4.8 L11.2 11.6 Q7.2 12.8 3.2 11.6Z" fill="#f2d22e"/><path d="M6.9 4.8 L6.6 12.3 Q4.8 12.2 3.2 11.6Z" fill="#fbf0a8"/></svg><span class="t" style="left:1453.00px;top:347.47px;font-size:9.6px;line-height:9.6px;color:#5e5e5e;transform:scaleX(1.0200);">Geometry</span><span class="t" style="left:1453.00px;top:357.88px;font-size:11.6px;line-height:11.6px;color:#dedede;transform:scaleX(0.9303);">fuse_geo</span><svg style="left:1418.7px;top:401.3px;" width="5.2" height="5.2" viewBox="0 0 5.2 5.2"><circle cx="2.6" cy="2.6" r="2.3" fill="#b4b4b4"/></svg><svg style="left:1418.7px;top:426.7px;" width="5.2" height="5.2" viewBox="0 0 5.2 5.2"><circle cx="2.6" cy="2.6" r="2.3" fill="#b4b4b4"/></svg><div style="left:1396.8px;top:411.4px;width:53.8px;height:16px;background:#d2d2d2;border-radius:2.5px;box-shadow:0 0 0 0.6px #555;"></div><div style="left:1394.8px;top:408.3px;width:53.6px;height:15.8px;background:linear-gradient(#d6d6d6,#c6c6c6);border-radius:2.5px;overflow:hidden;box-shadow:0 0 0 0.7px #5a5a5a;"><div style="left:0;top:0;width:7.6px;height:100%;background:#9be31c;transform:skewX(-6deg);transform-origin:0 0;"></div><div style="left:45.8px;top:0;width:9px;height:100%;background:#2f96ff;transform:skewX(-6deg);transform-origin:0 100%;"></div></div><svg style="left:1414.4px;top:409.7px;" width="14" height="13" viewBox="0 0 14 13"><path d="M0.9 1.6 V9.6 Q3.5 11.2 6.1 9.6 V1.6Z" fill="#4f86cc"/><path d="M1.3 2 V9.8 Q1.9 10.2 2.4 10.3 V2.4Z" fill="#a4c8ee"/><path d="M4.6 2.4 V10.3 Q5.5 10.1 6.1 9.6 V1.8Z" fill="#3a6cb0"/><ellipse cx="3.5" cy="1.6" rx="2.6" ry="1" fill="#a8ccf2"/><circle cx="10.4" cy="7" r="2.9" fill="#d8301f"/><circle cx="9.6" cy="6" r="0.9" fill="#f08878"/><path d="M6.9 4.8 L11.2 11.6 Q7.2 12.8 3.2 11.6Z" fill="#f2d22e"/><path d="M6.9 4.8 L6.6 12.3 Q4.8 12.2 3.2 11.6Z" fill="#fbf0a8"/></svg><span class="t" style="left:1453.00px;top:399.77px;font-size:9.6px;line-height:9.6px;color:#5e5e5e;transform:scaleX(1.0200);">Geometry</span><span class="t" style="left:1453.00px;top:410.18px;font-size:11.6px;line-height:11.6px;color:#dedede;transform:scaleX(1.0070);">soot_trail</span><svg style="left:1355px;top:445px;" width="60" height="56" viewBox="0 0 60 56"><path d="M26.51 8.60 A3.40 3.40 0 0 1 32.49 8.60 L52.45 45.59 A3.40 3.40 0 0 1 49.46 50.60 L9.54 50.60 A3.40 3.40 0 0 1 6.55 45.59 Z" fill="#292929" stroke="#e4555e" stroke-width="3.2"/><path d="M25.0 25.0 H34.2 V31.6 H38.9 L29.6 41.6 L20.3 31.6 H25.0 Z" fill="#e8565f"/></svg><svg style="left:1418.7px;top:460.8px;" width="5.2" height="5.2" viewBox="0 0 5.2 5.2"><circle cx="2.6" cy="2.6" r="2.3" fill="#b4b4b4"/></svg><svg style="left:1418.7px;top:486.2px;" width="5.2" height="5.2" viewBox="0 0 5.2 5.2"><circle cx="2.6" cy="2.6" r="2.3" fill="#b4b4b4"/></svg><div style="left:1396.8px;top:470.9px;width:53.8px;height:16px;background:#d2d2d2;border-radius:2.5px;box-shadow:0 0 0 0.6px #555;"></div><div style="left:1394.8px;top:467.8px;width:53.6px;height:15.8px;background:linear-gradient(#d6d6d6,#c6c6c6);border-radius:2.5px;overflow:hidden;box-shadow:0 0 0 0.7px #5a5a5a;"><div style="left:0;top:0;width:7.6px;height:100%;background:#9be31c;transform:skewX(-6deg);transform-origin:0 0;"></div><div style="left:45.8px;top:0;width:9px;height:100%;background:#2f96ff;transform:skewX(-6deg);transform-origin:0 100%;"></div></div><svg style="left:1414.4px;top:469.2px;" width="14" height="13" viewBox="0 0 14 13"><path d="M0.9 1.6 V9.6 Q3.5 11.2 6.1 9.6 V1.6Z" fill="#4f86cc"/><path d="M1.3 2 V9.8 Q1.9 10.2 2.4 10.3 V2.4Z" fill="#a4c8ee"/><path d="M4.6 2.4 V10.3 Q5.5 10.1 6.1 9.6 V1.8Z" fill="#3a6cb0"/><ellipse cx="3.5" cy="1.6" rx="2.6" ry="1" fill="#a8ccf2"/><circle cx="10.4" cy="7" r="2.9" fill="#d8301f"/><circle cx="9.6" cy="6" r="0.9" fill="#f08878"/><path d="M6.9 4.8 L11.2 11.6 Q7.2 12.8 3.2 11.6Z" fill="#f2d22e"/><path d="M6.9 4.8 L6.6 12.3 Q4.8 12.2 3.2 11.6Z" fill="#fbf0a8"/></svg><span class="t" style="left:1453.00px;top:459.27px;font-size:9.6px;line-height:9.6px;color:#5e5e5e;transform:scaleX(1.0200);">Geometry</span><span class="t" style="left:1453.00px;top:469.68px;font-size:11.6px;line-height:11.6px;color:#dedede;transform:scaleX(0.9492);">sparks</span><svg style="left:1418.7px;top:519.8px;" width="5.2" height="5.2" viewBox="0 0 5.2 5.2"><circle cx="2.6" cy="2.6" r="2.3" fill="#b4b4b4"/></svg><svg style="left:1418.7px;top:545.2px;" width="5.2" height="5.2" viewBox="0 0 5.2 5.2"><circle cx="2.6" cy="2.6" r="2.3" fill="#b4b4b4"/></svg><div style="left:1396.8px;top:529.9px;width:53.8px;height:16px;background:#d2d2d2;border-radius:2.5px;box-shadow:0 0 0 0.6px #555;"></div><div style="left:1394.8px;top:526.8px;width:53.6px;height:15.8px;background:linear-gradient(#d6d6d6,#c6c6c6);border-radius:2.5px;overflow:hidden;box-shadow:0 0 0 0.7px #5a5a5a;"><div style="left:0;top:0;width:7.6px;height:100%;background:#9be31c;transform:skewX(-6deg);transform-origin:0 0;"></div><div style="left:45.8px;top:0;width:9px;height:100%;background:#2f96ff;transform:skewX(-6deg);transform-origin:0 100%;"></div></div><svg style="left:1414.4px;top:528.2px;" width="14" height="13" viewBox="0 0 14 13"><path d="M0.9 1.6 V9.6 Q3.5 11.2 6.1 9.6 V1.6Z" fill="#4f86cc"/><path d="M1.3 2 V9.8 Q1.9 10.2 2.4 10.3 V2.4Z" fill="#a4c8ee"/><path d="M4.6 2.4 V10.3 Q5.5 10.1 6.1 9.6 V1.8Z" fill="#3a6cb0"/><ellipse cx="3.5" cy="1.6" rx="2.6" ry="1" fill="#a8ccf2"/><circle cx="10.4" cy="7" r="2.9" fill="#d8301f"/><circle cx="9.6" cy="6" r="0.9" fill="#f08878"/><path d="M6.9 4.8 L11.2 11.6 Q7.2 12.8 3.2 11.6Z" fill="#f2d22e"/><path d="M6.9 4.8 L6.6 12.3 Q4.8 12.2 3.2 11.6Z" fill="#fbf0a8"/></svg><span class="t" style="left:1453.00px;top:518.27px;font-size:9.6px;line-height:9.6px;color:#5e5e5e;transform:scaleX(1.0200);">Geometry</span><span class="t" style="left:1453.00px;top:528.68px;font-size:11.6px;line-height:11.6px;color:#dedede;transform:scaleX(0.9771);">bomb_geo_fracture</span><svg style="left:1508.1px;top:566.6px;" width="5.2" height="5.2" viewBox="0 0 5.2 5.2"><circle cx="2.6" cy="2.6" r="2.3" fill="#b4b4b4"/></svg><svg style="left:1508.1px;top:592px;" width="5.2" height="5.2" viewBox="0 0 5.2 5.2"><circle cx="2.6" cy="2.6" r="2.3" fill="#b4b4b4"/></svg><div style="left:1486.2px;top:576.7px;width:53.8px;height:16px;background:#d2d2d2;border-radius:2.5px;box-shadow:0 0 0 0.6px #555;"></div><div style="left:1484.2px;top:573.6px;width:53.6px;height:15.8px;background:linear-gradient(#d6d6d6,#c6c6c6);border-radius:2.5px;overflow:hidden;box-shadow:0 0 0 0.7px #5a5a5a;"><div style="left:0;top:0;width:7.6px;height:100%;background:#9be31c;transform:skewX(-6deg);transform-origin:0 0;"></div><div style="left:45.8px;top:0;width:9px;height:100%;background:#2f96ff;transform:skewX(-6deg);transform-origin:0 100%;"></div></div><svg style="left:1503.8px;top:575px;" width="14" height="13" viewBox="0 0 14 13"><path d="M0.9 1.6 V9.6 Q3.5 11.2 6.1 9.6 V1.6Z" fill="#4f86cc"/><path d="M1.3 2 V9.8 Q1.9 10.2 2.4 10.3 V2.4Z" fill="#a4c8ee"/><path d="M4.6 2.4 V10.3 Q5.5 10.1 6.1 9.6 V1.8Z" fill="#3a6cb0"/><ellipse cx="3.5" cy="1.6" rx="2.6" ry="1" fill="#a8ccf2"/><circle cx="10.4" cy="7" r="2.9" fill="#d8301f"/><circle cx="9.6" cy="6" r="0.9" fill="#f08878"/><path d="M6.9 4.8 L11.2 11.6 Q7.2 12.8 3.2 11.6Z" fill="#f2d22e"/><path d="M6.9 4.8 L6.6 12.3 Q4.8 12.2 3.2 11.6Z" fill="#fbf0a8"/></svg><span class="t" style="left:1542.40px;top:565.07px;font-size:9.6px;line-height:9.6px;color:#5e5e5e;transform:scaleX(1.0200);">Geometry</span><span class="t" style="left:1542.40px;top:575.48px;font-size:11.6px;line-height:11.6px;color:#dedede;transform:scaleX(1.0075);">fireball</span><div style="left:1678px;top:245.3px;width:53.4px;height:15px;background:#efe58f;border-radius:2.5px;box-shadow:0 0 0 0.6px #555;"></div><div style="left:1676px;top:242.3px;width:53.2px;height:14.8px;background:linear-gradient(#fbf3a5,#f3e98e);border-radius:2.5px;box-shadow:0 0 0 0.7px #6a6430;"></div><svg style="left:1696.4px;top:244.3px;" width="12.4" height="11" viewBox="0 0 12.4 11"><path d="M1 7.2 Q1 5.2 6.2 5.2 Q11.4 5.2 11.4 7.2 V8.8 Q11.4 10.4 6.2 10.4 Q1 10.4 1 8.8Z" fill="#e09a48"/><path d="M3.2 5.6 Q3.5 2.4 6.2 2.2 Q9 2.4 9.2 5.6 Q6.2 6.6 3.2 5.6Z" fill="#c0392b"/><circle cx="7.3" cy="2.2" r="1.7" fill="#2c3e70"/><circle cx="7.7" cy="1.8" r="0.8" fill="#e8e8f0"/><ellipse cx="6.2" cy="7.4" rx="5.2" ry="1.2" fill="#f0b868"/></svg><span class="t" style="left:1734.40px;top:233.17px;font-size:9.6px;line-height:9.6px;color:#5e5e5e;transform:scaleX(1.0252);">LOP Network</span><span class="t" style="left:1734.40px;top:243.98px;font-size:11.6px;line-height:11.6px;color:#dedede;transform:scaleX(0.9808);">destruction_stage</span><div style="left:1676px;top:284.9px;width:147.8px;height:174px;background:rgba(255,255,255,0.235);border-radius:4px;"></div><div style="left:1676px;top:284.9px;width:147.8px;height:16.3px;background:rgba(255,255,255,0.13);border-radius:4px 4px 0 0;"></div><div style="left:1681.5px;top:291.5px;width:8.4px;height:2px;background:#0a0a0a;"></div><span class="t" style="left:1694.80px;top:287.52px;font-size:11.2px;line-height:11.2px;color:#0e0e0e;transform:scaleX(0.9880);">camera rig</span><svg style="left:1721px;top:304.6px;" width="5.2" height="5.2" viewBox="0 0 5.2 5.2"><circle cx="2.6" cy="2.6" r="2.3" fill="#d6d6d6"/></svg><svg style="left:1721px;top:333.9px;" width="5.2" height="5.2" viewBox="0 0 5.2 5.2"><circle cx="2.6" cy="2.6" r="2.3" fill="#d6d6d6"/></svg><svg style="left:1696px;top:309.5px;" width="55" height="23" viewBox="0 0 55 23"><path d="M3.5 7.3 H17 L19.5 1.8 Q20 1 21 1 H33.8 Q34.8 1 35.3 1.8 L37.8 7.3 H51.5 Q53.2 7.3 53.2 9 L52.2 19.8 Q52 21.4 50.4 21.4 H3.5 Q1.7 21.4 1.7 19.6 V9 Q1.7 7.3 3.5 7.3Z" fill="#4588cb"/><path d="M3.5 7.3 H8.6 L7.6 21.4 H3.5 Q1.7 21.4 1.7 19.6 V9 Q1.7 7.3 3.5 7.3Z" fill="#9be31c"/><path d="M46.8 7.3 L45.8 21.4" stroke="#356fa8" stroke-width="0.7"/><g fill="#1d1d1d"><circle cx="24.3" cy="10.5" r="3"/><circle cx="29" cy="8.8" r="3.2"/><path d="M24 12.5 L31.5 10.5 L34.5 13.5 L28 17.5Z"/><circle cx="28.6" cy="14.8" r="3"/></g><g fill="none" stroke="#7d8c9c" stroke-width="0.6"><circle cx="24.4" cy="10.7" r="1.3"/><circle cx="29" cy="9" r="1.3"/><circle cx="28.6" cy="14.8" r="1.2"/></g></svg><span class="t" style="left:1755.30px;top:315.78px;font-size:11.6px;line-height:11.6px;color:#dedede;transform:scaleX(0.9323);">cam1</span><svg style="left:1757.6px;top:329.8px;" width="7" height="7" viewBox="0 0 7 7"><circle cx="3.5" cy="3.5" r="2.9" fill="#0e140e" stroke="#a4d468" stroke-width="1"/><path d="M3.5 3.5 L4.6 2.4" stroke="#ddd" stroke-width="0.7"/></svg><svg style="left:1769.1px;top:329.8px;" width="7" height="7" viewBox="0 0 7 7"><circle cx="3.5" cy="3.5" r="2.9" fill="#0e140e" stroke="#48c878" stroke-width="1"/><path d="M3.5 3.5 L4.6 2.4" stroke="#ddd" stroke-width="0.7"/></svg><svg style="left:1721px;top:359.1px;" width="5.2" height="5.2" viewBox="0 0 5.2 5.2"><circle cx="2.6" cy="2.6" r="2.3" fill="#d6d6d6"/></svg><svg style="left:1721px;top:393.4px;" width="5.2" height="5.2" viewBox="0 0 5.2 5.2"><circle cx="2.6" cy="2.6" r="2.3" fill="#d6d6d6"/></svg><svg style="left:1703.5px;top:364px;" width="40" height="30" viewBox="0 0 40 30"><g transform="translate(20 14.7)"><g transform="rotate(28.6)"><rect x="-20.4" y="-6.75" width="40.8" height="13.5" rx="6.75" fill="#bfd7ea"/><rect x="-20.4" y="-6.75" width="13.5" height="13.5" rx="6.75" fill="#94de1c"/><rect x="-13.6" y="-6.75" width="5.6" height="13.5" fill="#94de1c"/></g><g transform="rotate(-28.6)"><rect x="-20.4" y="-6.75" width="40.8" height="13.5" rx="6.75" fill="#bfd7ea"/><path d="M9.4 -6.75 V6.75" stroke="#8aa0b4" stroke-width="0.5"/></g><path d="M0 -4.2 V4.2" stroke="#8fc030" stroke-width="0.9"/><path d="M-3.8 -2.2 L3.8 2.2" stroke="#d83a30" stroke-width="0.9"/><path d="M-3.8 2.2 L3.8 -2.2" stroke="#3d7fd0" stroke-width="0.9"/></g></svg><span class="t" style="left:1748.10px;top:361.87px;font-size:9.6px;line-height:9.6px;color:#6a6a6a;transform:scaleX(1.0252);">Null</span><span class="t" style="left:1748.10px;top:372.18px;font-size:11.6px;line-height:11.6px;color:#dedede;transform:scaleX(0.9821);">camera_lookat_null</span><svg style="left:1749.7px;top:387.1px;" width="7" height="7" viewBox="0 0 7 7"><circle cx="3.5" cy="3.5" r="2.9" fill="#0e140e" stroke="#a4d468" stroke-width="1"/><path d="M3.5 3.5 L4.6 2.4" stroke="#ddd" stroke-width="0.7"/></svg><svg style="left:1761.3px;top:387.1px;" width="7" height="7" viewBox="0 0 7 7"><circle cx="3.5" cy="3.5" r="2.9" fill="#0e140e" stroke="#48c878" stroke-width="1"/><path d="M3.5 3.5 L4.6 2.4" stroke="#ddd" stroke-width="0.7"/></svg><svg style="left:1721.6px;top:425.9px;" width="5.2" height="5.2" viewBox="0 0 5.2 5.2"><circle cx="2.6" cy="2.6" r="2.3" fill="#b4b4b4"/></svg><svg style="left:1721.6px;top:451.3px;" width="5.2" height="5.2" viewBox="0 0 5.2 5.2"><circle cx="2.6" cy="2.6" r="2.3" fill="#b4b4b4"/></svg><div style="left:1699.7px;top:436px;width:53.8px;height:16px;background:#d2d2d2;border-radius:2.5px;box-shadow:0 0 0 0.6px #555;"></div><div style="left:1697.7px;top:432.9px;width:53.6px;height:15.8px;background:linear-gradient(#d6d6d6,#c6c6c6);border-radius:2.5px;overflow:hidden;box-shadow:0 0 0 0.7px #5a5a5a;"><div style="left:0;top:0;width:7.6px;height:100%;background:#9be31c;transform:skewX(-6deg);transform-origin:0 0;"></div><div style="left:45.8px;top:0;width:9px;height:100%;background:#cfcfcf;transform:skewX(-6deg);transform-origin:0 100%;"></div><div style="left:45.4px;top:0;width:0.7px;height:100%;background:#999;transform:skewX(-6deg);transform-origin:0 100%;"></div></div><svg style="left:1717.3px;top:434.3px;" width="14" height="13" viewBox="0 0 14 13"><path d="M0.9 1.6 V9.6 Q3.5 11.2 6.1 9.6 V1.6Z" fill="#4f86cc"/><path d="M1.3 2 V9.8 Q1.9 10.2 2.4 10.3 V2.4Z" fill="#a4c8ee"/><path d="M4.6 2.4 V10.3 Q5.5 10.1 6.1 9.6 V1.8Z" fill="#3a6cb0"/><ellipse cx="3.5" cy="1.6" rx="2.6" ry="1" fill="#a8ccf2"/><circle cx="10.4" cy="7" r="2.9" fill="#d8301f"/><circle cx="9.6" cy="6" r="0.9" fill="#f08878"/><path d="M6.9 4.8 L11.2 11.6 Q7.2 12.8 3.2 11.6Z" fill="#f2d22e"/><path d="M6.9 4.8 L6.6 12.3 Q4.8 12.2 3.2 11.6Z" fill="#fbf0a8"/></svg><span class="t" style="left:1755.30px;top:424.37px;font-size:9.6px;line-height:9.6px;color:#6b6b6b;transform:scaleX(1.0200);">Geometry</span><span class="t" style="left:1755.30px;top:434.78px;font-size:11.6px;line-height:11.6px;color:#dedede;transform:scaleX(0.9458);">curve1</span><div style="left:1676px;top:457px;width:147.8px;height:1.9px;background:rgba(255,255,255,0.0);"></div><svg style="left:1739.6px;top:460.7px;" width="5.2" height="5.2" viewBox="0 0 5.2 5.2"><circle cx="2.6" cy="2.6" r="2.3" fill="#b4b4b4"/></svg><svg style="left:1739.6px;top:486.1px;" width="5.2" height="5.2" viewBox="0 0 5.2 5.2"><circle cx="2.6" cy="2.6" r="2.3" fill="#b4b4b4"/></svg><div style="left:1717.7px;top:470.8px;width:53.8px;height:16px;background:#d2d2d2;border-radius:2.5px;box-shadow:0 0 0 0.6px #555;"></div><div style="left:1715.7px;top:467.7px;width:53.6px;height:15.8px;background:linear-gradient(#d6d6d6,#c6c6c6);border-radius:2.5px;overflow:hidden;box-shadow:0 0 0 0.7px #5a5a5a;"><div style="left:0;top:0;width:7.6px;height:100%;background:#9be31c;transform:skewX(-6deg);transform-origin:0 0;"></div><div style="left:45.8px;top:0;width:9px;height:100%;background:#cfcfcf;transform:skewX(-6deg);transform-origin:0 100%;"></div><div style="left:45.4px;top:0;width:0.7px;height:100%;background:#999;transform:skewX(-6deg);transform-origin:0 100%;"></div></div><svg style="left:1735.3px;top:469.1px;" width="14" height="13" viewBox="0 0 14 13"><path d="M0.9 1.6 V9.6 Q3.5 11.2 6.1 9.6 V1.6Z" fill="#4f86cc"/><path d="M1.3 2 V9.8 Q1.9 10.2 2.4 10.3 V2.4Z" fill="#a4c8ee"/><path d="M4.6 2.4 V10.3 Q5.5 10.1 6.1 9.6 V1.8Z" fill="#3a6cb0"/><ellipse cx="3.5" cy="1.6" rx="2.6" ry="1" fill="#a8ccf2"/><circle cx="10.4" cy="7" r="2.9" fill="#d8301f"/><circle cx="9.6" cy="6" r="0.9" fill="#f08878"/><path d="M6.9 4.8 L11.2 11.6 Q7.2 12.8 3.2 11.6Z" fill="#f2d22e"/><path d="M6.9 4.8 L6.6 12.3 Q4.8 12.2 3.2 11.6Z" fill="#fbf0a8"/></svg><span class="t" style="left:1774.00px;top:459.17px;font-size:9.6px;line-height:9.6px;color:#5e5e5e;transform:scaleX(1.0200);">Geometry</span><span class="t" style="left:1774.00px;top:469.58px;font-size:11.6px;line-height:11.6px;color:#dedede;transform:scaleX(0.9808);">ground</span><div style="left:0px;top:723px;width:1920px;height:39.5px;background:#303030;"></div><div style="left:0px;top:723px;width:1920px;height:0.8px;background:#4a4a4a;"></div><div style="left:0px;top:723px;width:4.5px;height:39.5px;background:#474747;"></div><div style="left:4.5px;top:723px;width:1px;height:39.5px;background:#1e1e1e;"></div><svg style="left:0.8px;top:758px;" width="4" height="4" viewBox="0 0 4 4"><path d="M0.4 0.6 H3.6 L2 3.4Z" fill="#0a0a0a"/></svg><div style="left:8px;top:728px;width:15px;height:14.5px;background:linear-gradient(#4a4a4a,#3c3c3c);box-shadow:inset 0 0 0 0.6px #262626;"></div><div style="left:23px;top:728px;width:15px;height:14.5px;background:linear-gradient(#4a4a4a,#3c3c3c);box-shadow:inset 0 0 0 0.6px #262626;"></div><div style="left:38px;top:728px;width:15px;height:14.5px;background:#5f7da6;box-shadow:inset 0 0 0 0.6px #262626;"></div><div style="left:53px;top:728px;width:15px;height:14.5px;background:linear-gradient(#4a4a4a,#3c3c3c);box-shadow:inset 0 0 0 0.6px #262626;"></div><div style="left:68px;top:728px;width:15px;height:14.5px;background:linear-gradient(#4a4a4a,#3c3c3c);box-shadow:inset 0 0 0 0.6px #262626;"></div><svg style="left:8px;top:728px;" width="75" height="14.5" viewBox="0 0 75 14.5"><g fill="#e0e0e0"><rect x="3.2" y="4.2" width="1.2" height="6"/><path d="M8.2 4.2 V10.2 L4.6 7.2Z M11.8 4.2 V10.2 L8.2 7.2Z"/><path d="M25.8 4 V10.4 L20 7.2Z"/><rect x="34.3" y="4.2" width="6.2" height="6.2" fill="#d8dde4"/><path d="M49.5 4 V10.4 L55.3 7.2Z"/><path d="M63.2 4.2 V10.2 L66.8 7.2Z M66.8 4.2 V10.2 L70.4 7.2Z"/><rect x="70.6" y="4.2" width="1.2" height="6"/></g></svg><div style="left:85.8px;top:728px;width:25.5px;height:14.5px;background:#1b1b1b;box-shadow:inset 0 0 0 0.6px #111;"></div><span class="t" style="left:87.60px;top:732.74px;font-size:6.8px;line-height:6.8px;color:#cfcfcf;">1</span><div style="left:113px;top:728px;width:7.6px;height:14.5px;background:linear-gradient(#4a4a4a,#3c3c3c);box-shadow:inset 0 0 0 0.6px #262626;"></div><div style="left:120.6px;top:728px;width:7.6px;height:14.5px;background:linear-gradient(#4a4a4a,#3c3c3c);box-shadow:inset 0 0 0 0.6px #262626;"></div><svg style="left:113px;top:728px;" width="15.2" height="14.5" viewBox="0 0 15.2 14.5"><g fill="#cfcfcf"><path d="M4.6 5.2 V9.4 L2 7.3Z"/><rect x="5" y="5.2" width="0.9" height="4.2"/><rect x="9.3" y="5.2" width="0.9" height="4.2"/><path d="M10.6 5.2 V9.4 L13.2 7.3Z"/></g></svg><div style="left:131.4px;top:731.2px;width:1634.11px;height:5.3px;background:#1467c8;"></div><svg style="left:0;top:0" width="1920" height="777" viewBox="0 0 1920 777"><rect x="131.05" y="734.6" width="0.7" height="4.2" fill="#aeb4ba" fill-opacity="0.8"/><rect x="137.92" y="734.6" width="0.7" height="4.2" fill="#aeb4ba" fill-opacity="0.8"/><rect x="144.78" y="734.6" width="0.7" height="4.2" fill="#aeb4ba" fill-opacity="0.8"/><rect x="151.65" y="734.6" width="0.7" height="4.2" fill="#aeb4ba" fill-opacity="0.8"/><rect x="158.51" y="734.6" width="0.7" height="4.2" fill="#aeb4ba" fill-opacity="0.8"/><rect x="165.38" y="734.6" width="0.7" height="4.2" fill="#aeb4ba" fill-opacity="0.8"/><rect x="172.25" y="734.6" width="0.7" height="4.2" fill="#aeb4ba" fill-opacity="0.8"/><rect x="179.11" y="734.6" width="0.7" height="4.2" fill="#aeb4ba" fill-opacity="0.8"/><rect x="185.98" y="734.6" width="0.7" height="4.2" fill="#aeb4ba" fill-opacity="0.8"/><rect x="192.84" y="734.6" width="0.7" height="4.2" fill="#aeb4ba" fill-opacity="0.8"/><rect x="199.71" y="734.6" width="0.7" height="4.2" fill="#aeb4ba" fill-opacity="0.8"/><rect x="206.58" y="734.6" width="0.7" height="4.2" fill="#aeb4ba" fill-opacity="0.8"/><rect x="213.44" y="734.6" width="0.7" height="4.2" fill="#aeb4ba" fill-opacity="0.8"/><rect x="220.31" y="734.6" width="0.7" height="4.2" fill="#aeb4ba" fill-opacity="0.8"/><rect x="227.17" y="734.6" width="0.7" height="4.2" fill="#aeb4ba" fill-opacity="0.8"/><rect x="234.04" y="734.6" width="0.7" height="4.2" fill="#aeb4ba" fill-opacity="0.8"/><rect x="240.91" y="734.6" width="0.7" height="4.2" fill="#aeb4ba" fill-opacity="0.8"/><rect x="247.77" y="734.6" width="0.7" height="4.2" fill="#aeb4ba" fill-opacity="0.8"/><rect x="254.64" y="734.6" width="0.7" height="4.2" fill="#aeb4ba" fill-opacity="0.8"/><rect x="261.50" y="734.6" width="0.7" height="4.2" fill="#aeb4ba" fill-opacity="0.8"/><rect x="268.37" y="734.6" width="0.7" height="4.2" fill="#aeb4ba" fill-opacity="0.8"/><rect x="275.24" y="734.6" width="0.7" height="4.2" fill="#aeb4ba" fill-opacity="0.8"/><rect x="282.10" y="734.6" width="0.7" height="4.2" fill="#aeb4ba" fill-opacity="0.8"/><rect x="288.87" y="731.2" width="0.9" height="9.6" fill="#cfd6dd"/><rect x="295.83" y="734.6" width="0.7" height="4.2" fill="#aeb4ba" fill-opacity="0.8"/><rect x="302.70" y="734.6" width="0.7" height="4.2" fill="#aeb4ba" fill-opacity="0.8"/><rect x="309.57" y="734.6" width="0.7" height="4.2" fill="#aeb4ba" fill-opacity="0.8"/><rect x="316.43" y="734.6" width="0.7" height="4.2" fill="#aeb4ba" fill-opacity="0.8"/><rect x="323.30" y="734.6" width="0.7" height="4.2" fill="#aeb4ba" fill-opacity="0.8"/><rect x="330.16" y="734.6" width="0.7" height="4.2" fill="#aeb4ba" fill-opacity="0.8"/><rect x="337.03" y="734.6" width="0.7" height="4.2" fill="#aeb4ba" fill-opacity="0.8"/><rect x="343.90" y="734.6" width="0.7" height="4.2" fill="#aeb4ba" fill-opacity="0.8"/><rect x="350.76" y="734.6" width="0.7" height="4.2" fill="#aeb4ba" fill-opacity="0.8"/><rect x="357.63" y="734.6" width="0.7" height="4.2" fill="#aeb4ba" fill-opacity="0.8"/><rect x="364.49" y="734.6" width="0.7" height="4.2" fill="#aeb4ba" fill-opacity="0.8"/><rect x="371.36" y="734.6" width="0.7" height="4.2" fill="#aeb4ba" fill-opacity="0.8"/><rect x="378.23" y="734.6" width="0.7" height="4.2" fill="#aeb4ba" fill-opacity="0.8"/><rect x="385.09" y="734.6" width="0.7" height="4.2" fill="#aeb4ba" fill-opacity="0.8"/><rect x="391.96" y="734.6" width="0.7" height="4.2" fill="#aeb4ba" fill-opacity="0.8"/><rect x="398.82" y="734.6" width="0.7" height="4.2" fill="#aeb4ba" fill-opacity="0.8"/><rect x="405.69" y="734.6" width="0.7" height="4.2" fill="#aeb4ba" fill-opacity="0.8"/><rect x="412.56" y="734.6" width="0.7" height="4.2" fill="#aeb4ba" fill-opacity="0.8"/><rect x="419.42" y="734.6" width="0.7" height="4.2" fill="#aeb4ba" fill-opacity="0.8"/><rect x="426.29" y="734.6" width="0.7" height="4.2" fill="#aeb4ba" fill-opacity="0.8"/><rect x="433.15" y="734.6" width="0.7" height="4.2" fill="#aeb4ba" fill-opacity="0.8"/><rect x="440.02" y="734.6" width="0.7" height="4.2" fill="#aeb4ba" fill-opacity="0.8"/><rect x="446.89" y="734.6" width="0.7" height="4.2" fill="#aeb4ba" fill-opacity="0.8"/><rect x="453.65" y="731.2" width="0.9" height="9.6" fill="#cfd6dd"/><rect x="460.62" y="734.6" width="0.7" height="4.2" fill="#aeb4ba" fill-opacity="0.8"/><rect x="467.48" y="734.6" width="0.7" height="4.2" fill="#aeb4ba" fill-opacity="0.8"/><rect x="474.35" y="734.6" width="0.7" height="4.2" fill="#aeb4ba" fill-opacity="0.8"/><rect x="481.22" y="734.6" width="0.7" height="4.2" fill="#aeb4ba" fill-opacity="0.8"/><rect x="488.08" y="734.6" width="0.7" height="4.2" fill="#aeb4ba" fill-opacity="0.8"/><rect x="494.95" y="734.6" width="0.7" height="4.2" fill="#aeb4ba" fill-opacity="0.8"/><rect x="501.81" y="734.6" width="0.7" height="4.2" fill="#aeb4ba" fill-opacity="0.8"/><rect x="508.68" y="734.6" width="0.7" height="4.2" fill="#aeb4ba" fill-opacity="0.8"/><rect x="515.55" y="734.6" width="0.7" height="4.2" fill="#aeb4ba" fill-opacity="0.8"/><rect x="522.41" y="734.6" width="0.7" height="4.2" fill="#aeb4ba" fill-opacity="0.8"/><rect x="529.28" y="734.6" width="0.7" height="4.2" fill="#aeb4ba" fill-opacity="0.8"/><rect x="536.14" y="734.6" width="0.7" height="4.2" fill="#aeb4ba" fill-opacity="0.8"/><rect x="543.01" y="734.6" width="0.7" height="4.2" fill="#aeb4ba" fill-opacity="0.8"/><rect x="549.88" y="734.6" width="0.7" height="4.2" fill="#aeb4ba" fill-opacity="0.8"/><rect x="556.74" y="734.6" width="0.7" height="4.2" fill="#aeb4ba" fill-opacity="0.8"/><rect x="563.61" y="734.6" width="0.7" height="4.2" fill="#aeb4ba" fill-opacity="0.8"/><rect x="570.47" y="734.6" width="0.7" height="4.2" fill="#aeb4ba" fill-opacity="0.8"/><rect x="577.34" y="734.6" width="0.7" height="4.2" fill="#aeb4ba" fill-opacity="0.8"/><rect x="584.21" y="734.6" width="0.7" height="4.2" fill="#aeb4ba" fill-opacity="0.8"/><rect x="591.07" y="734.6" width="0.7" height="4.2" fill="#aeb4ba" fill-opacity="0.8"/><rect x="597.94" y="734.6" width="0.7" height="4.2" fill="#aeb4ba" fill-opacity="0.8"/><rect x="604.80" y="734.6" width="0.7" height="4.2" fill="#aeb4ba" fill-opacity="0.8"/><rect x="611.67" y="734.6" width="0.7" height="4.2" fill="#aeb4ba" fill-opacity="0.8"/><rect x="618.44" y="731.2" width="0.9" height="9.6" fill="#cfd6dd"/><rect x="625.40" y="734.6" width="0.7" height="4.2" fill="#aeb4ba" fill-opacity="0.8"/><rect x="632.27" y="734.6" width="0.7" height="4.2" fill="#aeb4ba" fill-opacity="0.8"/><rect x="639.13" y="734.6" width="0.7" height="4.2" fill="#aeb4ba" fill-opacity="0.8"/><rect x="646.00" y="734.6" width="0.7" height="4.2" fill="#aeb4ba" fill-opacity="0.8"/><rect x="652.87" y="734.6" width="0.7" height="4.2" fill="#aeb4ba" fill-opacity="0.8"/><rect x="659.73" y="734.6" width="0.7" height="4.2" fill="#aeb4ba" fill-opacity="0.8"/><rect x="666.60" y="734.6" width="0.7" height="4.2" fill="#aeb4ba" fill-opacity="0.8"/><rect x="673.46" y="734.6" width="0.7" height="4.2" fill="#aeb4ba" fill-opacity="0.8"/><rect x="680.33" y="734.6" width="0.7" height="4.2" fill="#aeb4ba" fill-opacity="0.8"/><rect x="687.20" y="734.6" width="0.7" height="4.2" fill="#aeb4ba" fill-opacity="0.8"/><rect x="694.06" y="734.6" width="0.7" height="4.2" fill="#aeb4ba" fill-opacity="0.8"/><rect x="700.93" y="734.6" width="0.7" height="4.2" fill="#aeb4ba" fill-opacity="0.8"/><rect x="707.79" y="734.6" width="0.7" height="4.2" fill="#aeb4ba" fill-opacity="0.8"/><rect x="714.66" y="734.6" width="0.7" height="4.2" fill="#aeb4ba" fill-opacity="0.8"/><rect x="721.53" y="734.6" width="0.7" height="4.2" fill="#aeb4ba" fill-opacity="0.8"/><rect x="728.39" y="734.6" width="0.7" height="4.2" fill="#aeb4ba" fill-opacity="0.8"/><rect x="735.26" y="734.6" width="0.7" height="4.2" fill="#aeb4ba" fill-opacity="0.8"/><rect x="742.12" y="734.6" width="0.7" height="4.2" fill="#aeb4ba" fill-opacity="0.8"/><rect x="748.99" y="734.6" width="0.7" height="4.2" fill="#aeb4ba" fill-opacity="0.8"/><rect x="755.86" y="734.6" width="0.7" height="4.2" fill="#aeb4ba" fill-opacity="0.8"/><rect x="762.72" y="734.6" width="0.7" height="4.2" fill="#aeb4ba" fill-opacity="0.8"/><rect x="769.59" y="734.6" width="0.7" height="4.2" fill="#aeb4ba" fill-opacity="0.8"/><rect x="776.45" y="734.6" width="0.7" height="4.2" fill="#aeb4ba" fill-opacity="0.8"/><rect x="783.22" y="731.2" width="0.9" height="9.6" fill="#cfd6dd"/><rect x="790.19" y="734.6" width="0.7" height="4.2" fill="#aeb4ba" fill-opacity="0.8"/><rect x="797.05" y="734.6" width="0.7" height="4.2" fill="#aeb4ba" fill-opacity="0.8"/><rect x="803.92" y="734.6" width="0.7" height="4.2" fill="#aeb4ba" fill-opacity="0.8"/><rect x="810.78" y="734.6" width="0.7" height="4.2" fill="#aeb4ba" fill-opacity="0.8"/><rect x="817.65" y="734.6" width="0.7" height="4.2" fill="#aeb4ba" fill-opacity="0.8"/><rect x="824.52" y="734.6" width="0.7" height="4.2" fill="#aeb4ba" fill-opacity="0.8"/><rect x="831.38" y="734.6" width="0.7" height="4.2" fill="#aeb4ba" fill-opacity="0.8"/><rect x="838.25" y="734.6" width="0.7" height="4.2" fill="#aeb4ba" fill-opacity="0.8"/><rect x="845.11" y="734.6" width="0.7" height="4.2" fill="#aeb4ba" fill-opacity="0.8"/><rect x="851.98" y="734.6" width="0.7" height="4.2" fill="#aeb4ba" fill-opacity="0.8"/><rect x="858.85" y="734.6" width="0.7" height="4.2" fill="#aeb4ba" fill-opacity="0.8"/><rect x="865.71" y="734.6" width="0.7" height="4.2" fill="#aeb4ba" fill-opacity="0.8"/><rect x="872.58" y="734.6" width="0.7" height="4.2" fill="#aeb4ba" fill-opacity="0.8"/><rect x="879.44" y="734.6" width="0.7" height="4.2" fill="#aeb4ba" fill-opacity="0.8"/><rect x="886.31" y="734.6" width="0.7" height="4.2" fill="#aeb4ba" fill-opacity="0.8"/><rect x="893.18" y="734.6" width="0.7" height="4.2" fill="#aeb4ba" fill-opacity="0.8"/><rect x="900.04" y="734.6" width="0.7" height="4.2" fill="#aeb4ba" fill-opacity="0.8"/><rect x="906.91" y="734.6" width="0.7" height="4.2" fill="#aeb4ba" fill-opacity="0.8"/><rect x="913.77" y="734.6" width="0.7" height="4.2" fill="#aeb4ba" fill-opacity="0.8"/><rect x="920.64" y="734.6" width="0.7" height="4.2" fill="#aeb4ba" fill-opacity="0.8"/><rect x="927.51" y="734.6" width="0.7" height="4.2" fill="#aeb4ba" fill-opacity="0.8"/><rect x="934.37" y="734.6" width="0.7" height="4.2" fill="#aeb4ba" fill-opacity="0.8"/><rect x="941.24" y="734.6" width="0.7" height="4.2" fill="#aeb4ba" fill-opacity="0.8"/><rect x="948.00" y="731.2" width="0.9" height="9.6" fill="#cfd6dd"/><rect x="954.97" y="734.6" width="0.7" height="4.2" fill="#aeb4ba" fill-opacity="0.8"/><rect x="961.84" y="734.6" width="0.7" height="4.2" fill="#aeb4ba" fill-opacity="0.8"/><rect x="968.70" y="734.6" width="0.7" height="4.2" fill="#aeb4ba" fill-opacity="0.8"/><rect x="975.57" y="734.6" width="0.7" height="4.2" fill="#aeb4ba" fill-opacity="0.8"/><rect x="982.43" y="734.6" width="0.7" height="4.2" fill="#aeb4ba" fill-opacity="0.8"/><rect x="989.30" y="734.6" width="0.7" height="4.2" fill="#aeb4ba" fill-opacity="0.8"/><rect x="996.17" y="734.6" width="0.7" height="4.2" fill="#aeb4ba" fill-opacity="0.8"/><rect x="1003.03" y="734.6" width="0.7" height="4.2" fill="#aeb4ba" fill-opacity="0.8"/><rect x="1009.90" y="734.6" width="0.7" height="4.2" fill="#aeb4ba" fill-opacity="0.8"/><rect x="1016.76" y="734.6" width="0.7" height="4.2" fill="#aeb4ba" fill-opacity="0.8"/><rect x="1023.63" y="734.6" width="0.7" height="4.2" fill="#aeb4ba" fill-opacity="0.8"/><rect x="1030.50" y="734.6" width="0.7" height="4.2" fill="#aeb4ba" fill-opacity="0.8"/><rect x="1037.36" y="734.6" width="0.7" height="4.2" fill="#aeb4ba" fill-opacity="0.8"/><rect x="1044.23" y="734.6" width="0.7" height="4.2" fill="#aeb4ba" fill-opacity="0.8"/><rect x="1051.09" y="734.6" width="0.7" height="4.2" fill="#aeb4ba" fill-opacity="0.8"/><rect x="1057.96" y="734.6" width="0.7" height="4.2" fill="#aeb4ba" fill-opacity="0.8"/><rect x="1064.83" y="734.6" width="0.7" height="4.2" fill="#aeb4ba" fill-opacity="0.8"/><rect x="1071.69" y="734.6" width="0.7" height="4.2" fill="#aeb4ba" fill-opacity="0.8"/><rect x="1078.56" y="734.6" width="0.7" height="4.2" fill="#aeb4ba" fill-opacity="0.8"/><rect x="1085.42" y="734.6" width="0.7" height="4.2" fill="#aeb4ba" fill-opacity="0.8"/><rect x="1092.29" y="734.6" width="0.7" height="4.2" fill="#aeb4ba" fill-opacity="0.8"/><rect x="1099.16" y="734.6" width="0.7" height="4.2" fill="#aeb4ba" fill-opacity="0.8"/><rect x="1106.02" y="734.6" width="0.7" height="4.2" fill="#aeb4ba" fill-opacity="0.8"/><rect x="1112.79" y="731.2" width="0.9" height="9.6" fill="#cfd6dd"/><rect x="1119.75" y="734.6" width="0.7" height="4.2" fill="#aeb4ba" fill-opacity="0.8"/><rect x="1126.62" y="734.6" width="0.7" height="4.2" fill="#aeb4ba" fill-opacity="0.8"/><rect x="1133.49" y="734.6" width="0.7" height="4.2" fill="#aeb4ba" fill-opacity="0.8"/><rect x="1140.35" y="734.6" width="0.7" height="4.2" fill="#aeb4ba" fill-opacity="0.8"/><rect x="1147.22" y="734.6" width="0.7" height="4.2" fill="#aeb4ba" fill-opacity="0.8"/><rect x="1154.08" y="734.6" width="0.7" height="4.2" fill="#aeb4ba" fill-opacity="0.8"/><rect x="1160.95" y="734.6" width="0.7" height="4.2" fill="#aeb4ba" fill-opacity="0.8"/><rect x="1167.82" y="734.6" width="0.7" height="4.2" fill="#aeb4ba" fill-opacity="0.8"/><rect x="1174.68" y="734.6" width="0.7" height="4.2" fill="#aeb4ba" fill-opacity="0.8"/><rect x="1181.55" y="734.6" width="0.7" height="4.2" fill="#aeb4ba" fill-opacity="0.8"/><rect x="1188.41" y="734.6" width="0.7" height="4.2" fill="#aeb4ba" fill-opacity="0.8"/><rect x="1195.28" y="734.6" width="0.7" height="4.2" fill="#aeb4ba" fill-opacity="0.8"/><rect x="1202.15" y="734.6" width="0.7" height="4.2" fill="#aeb4ba" fill-opacity="0.8"/><rect x="1209.01" y="734.6" width="0.7" height="4.2" fill="#aeb4ba" fill-opacity="0.8"/><rect x="1215.88" y="734.6" width="0.7" height="4.2" fill="#aeb4ba" fill-opacity="0.8"/><rect x="1222.74" y="734.6" width="0.7" height="4.2" fill="#aeb4ba" fill-opacity="0.8"/><rect x="1229.61" y="734.6" width="0.7" height="4.2" fill="#aeb4ba" fill-opacity="0.8"/><rect x="1236.48" y="734.6" width="0.7" height="4.2" fill="#aeb4ba" fill-opacity="0.8"/><rect x="1243.34" y="734.6" width="0.7" height="4.2" fill="#aeb4ba" fill-opacity="0.8"/><rect x="1250.21" y="734.6" width="0.7" height="4.2" fill="#aeb4ba" fill-opacity="0.8"/><rect x="1257.07" y="734.6" width="0.7" height="4.2" fill="#aeb4ba" fill-opacity="0.8"/><rect x="1263.94" y="734.6" width="0.7" height="4.2" fill="#aeb4ba" fill-opacity="0.8"/><rect x="1270.81" y="734.6" width="0.7" height="4.2" fill="#aeb4ba" fill-opacity="0.8"/><rect x="1277.57" y="731.2" width="0.9" height="9.6" fill="#cfd6dd"/><rect x="1284.54" y="734.6" width="0.7" height="4.2" fill="#aeb4ba" fill-opacity="0.8"/><rect x="1291.40" y="734.6" width="0.7" height="4.2" fill="#aeb4ba" fill-opacity="0.8"/><rect x="1298.27" y="734.6" width="0.7" height="4.2" fill="#aeb4ba" fill-opacity="0.8"/><rect x="1305.14" y="734.6" width="0.7" height="4.2" fill="#aeb4ba" fill-opacity="0.8"/><rect x="1312.00" y="734.6" width="0.7" height="4.2" fill="#aeb4ba" fill-opacity="0.8"/><rect x="1318.87" y="734.6" width="0.7" height="4.2" fill="#aeb4ba" fill-opacity="0.8"/><rect x="1325.73" y="734.6" width="0.7" height="4.2" fill="#aeb4ba" fill-opacity="0.8"/><rect x="1332.60" y="734.6" width="0.7" height="4.2" fill="#aeb4ba" fill-opacity="0.8"/><rect x="1339.47" y="734.6" width="0.7" height="4.2" fill="#aeb4ba" fill-opacity="0.8"/><rect x="1346.33" y="734.6" width="0.7" height="4.2" fill="#aeb4ba" fill-opacity="0.8"/><rect x="1353.20" y="734.6" width="0.7" height="4.2" fill="#aeb4ba" fill-opacity="0.8"/><rect x="1360.06" y="734.6" width="0.7" height="4.2" fill="#aeb4ba" fill-opacity="0.8"/><rect x="1366.93" y="734.6" width="0.7" height="4.2" fill="#aeb4ba" fill-opacity="0.8"/><rect x="1373.80" y="734.6" width="0.7" height="4.2" fill="#aeb4ba" fill-opacity="0.8"/><rect x="1380.66" y="734.6" width="0.7" height="4.2" fill="#aeb4ba" fill-opacity="0.8"/><rect x="1387.53" y="734.6" width="0.7" height="4.2" fill="#aeb4ba" fill-opacity="0.8"/><rect x="1394.39" y="734.6" width="0.7" height="4.2" fill="#aeb4ba" fill-opacity="0.8"/><rect x="1401.26" y="734.6" width="0.7" height="4.2" fill="#aeb4ba" fill-opacity="0.8"/><rect x="1408.13" y="734.6" width="0.7" height="4.2" fill="#aeb4ba" fill-opacity="0.8"/><rect x="1414.99" y="734.6" width="0.7" height="4.2" fill="#aeb4ba" fill-opacity="0.8"/><rect x="1421.86" y="734.6" width="0.7" height="4.2" fill="#aeb4ba" fill-opacity="0.8"/><rect x="1428.72" y="734.6" width="0.7" height="4.2" fill="#aeb4ba" fill-opacity="0.8"/><rect x="1435.59" y="734.6" width="0.7" height="4.2" fill="#aeb4ba" fill-opacity="0.8"/><rect x="1442.36" y="731.2" width="0.9" height="9.6" fill="#cfd6dd"/><rect x="1449.32" y="734.6" width="0.7" height="4.2" fill="#aeb4ba" fill-opacity="0.8"/><rect x="1456.19" y="734.6" width="0.7" height="4.2" fill="#aeb4ba" fill-opacity="0.8"/><rect x="1463.05" y="734.6" width="0.7" height="4.2" fill="#aeb4ba" fill-opacity="0.8"/><rect x="1469.92" y="734.6" width="0.7" height="4.2" fill="#aeb4ba" fill-opacity="0.8"/><rect x="1476.79" y="734.6" width="0.7" height="4.2" fill="#aeb4ba" fill-opacity="0.8"/><rect x="1483.65" y="734.6" width="0.7" height="4.2" fill="#aeb4ba" fill-opacity="0.8"/><rect x="1490.52" y="734.6" width="0.7" height="4.2" fill="#aeb4ba" fill-opacity="0.8"/><rect x="1497.38" y="734.6" width="0.7" height="4.2" fill="#aeb4ba" fill-opacity="0.8"/><rect x="1504.25" y="734.6" width="0.7" height="4.2" fill="#aeb4ba" fill-opacity="0.8"/><rect x="1511.12" y="734.6" width="0.7" height="4.2" fill="#aeb4ba" fill-opacity="0.8"/><rect x="1517.98" y="734.6" width="0.7" height="4.2" fill="#aeb4ba" fill-opacity="0.8"/><rect x="1524.85" y="734.6" width="0.7" height="4.2" fill="#aeb4ba" fill-opacity="0.8"/><rect x="1531.71" y="734.6" width="0.7" height="4.2" fill="#aeb4ba" fill-opacity="0.8"/><rect x="1538.58" y="734.6" width="0.7" height="4.2" fill="#aeb4ba" fill-opacity="0.8"/><rect x="1545.45" y="734.6" width="0.7" height="4.2" fill="#aeb4ba" fill-opacity="0.8"/><rect x="1552.31" y="734.6" width="0.7" height="4.2" fill="#aeb4ba" fill-opacity="0.8"/><rect x="1559.18" y="734.6" width="0.7" height="4.2" fill="#aeb4ba" fill-opacity="0.8"/><rect x="1566.04" y="734.6" width="0.7" height="4.2" fill="#aeb4ba" fill-opacity="0.8"/><rect x="1572.91" y="734.6" width="0.7" height="4.2" fill="#aeb4ba" fill-opacity="0.8"/><rect x="1579.78" y="734.6" width="0.7" height="4.2" fill="#aeb4ba" fill-opacity="0.8"/><rect x="1586.64" y="734.6" width="0.7" height="4.2" fill="#aeb4ba" fill-opacity="0.8"/><rect x="1593.51" y="734.6" width="0.7" height="4.2" fill="#aeb4ba" fill-opacity="0.8"/><rect x="1600.37" y="734.6" width="0.7" height="4.2" fill="#aeb4ba" fill-opacity="0.8"/><rect x="1607.14" y="731.2" width="0.9" height="9.6" fill="#cfd6dd"/><rect x="1614.11" y="734.6" width="0.7" height="4.2" fill="#aeb4ba" fill-opacity="0.8"/><rect x="1620.97" y="734.6" width="0.7" height="4.2" fill="#aeb4ba" fill-opacity="0.8"/><rect x="1627.84" y="734.6" width="0.7" height="4.2" fill="#aeb4ba" fill-opacity="0.8"/><rect x="1634.70" y="734.6" width="0.7" height="4.2" fill="#aeb4ba" fill-opacity="0.8"/><rect x="1641.57" y="734.6" width="0.7" height="4.2" fill="#aeb4ba" fill-opacity="0.8"/><rect x="1648.44" y="734.6" width="0.7" height="4.2" fill="#aeb4ba" fill-opacity="0.8"/><rect x="1655.30" y="734.6" width="0.7" height="4.2" fill="#aeb4ba" fill-opacity="0.8"/><rect x="1662.17" y="734.6" width="0.7" height="4.2" fill="#aeb4ba" fill-opacity="0.8"/><rect x="1669.03" y="734.6" width="0.7" height="4.2" fill="#aeb4ba" fill-opacity="0.8"/><rect x="1675.90" y="734.6" width="0.7" height="4.2" fill="#aeb4ba" fill-opacity="0.8"/><rect x="1682.77" y="734.6" width="0.7" height="4.2" fill="#aeb4ba" fill-opacity="0.8"/><rect x="1689.63" y="734.6" width="0.7" height="4.2" fill="#aeb4ba" fill-opacity="0.8"/><rect x="1696.50" y="734.6" width="0.7" height="4.2" fill="#aeb4ba" fill-opacity="0.8"/><rect x="1703.36" y="734.6" width="0.7" height="4.2" fill="#aeb4ba" fill-opacity="0.8"/><rect x="1710.23" y="734.6" width="0.7" height="4.2" fill="#aeb4ba" fill-opacity="0.8"/><rect x="1717.10" y="734.6" width="0.7" height="4.2" fill="#aeb4ba" fill-opacity="0.8"/><rect x="1723.96" y="734.6" width="0.7" height="4.2" fill="#aeb4ba" fill-opacity="0.8"/><rect x="1730.83" y="734.6" width="0.7" height="4.2" fill="#aeb4ba" fill-opacity="0.8"/><rect x="1737.69" y="734.6" width="0.7" height="4.2" fill="#aeb4ba" fill-opacity="0.8"/><rect x="1744.56" y="734.6" width="0.7" height="4.2" fill="#aeb4ba" fill-opacity="0.8"/><rect x="1751.43" y="734.6" width="0.7" height="4.2" fill="#aeb4ba" fill-opacity="0.8"/><rect x="1758.29" y="734.6" width="0.7" height="4.2" fill="#aeb4ba" fill-opacity="0.8"/><rect x="1765.16" y="734.6" width="0.7" height="4.2" fill="#aeb4ba" fill-opacity="0.8"/><rect x="1771.97" y="732.5" width="0.8" height="8" fill="#bbb"/><rect x="131" y="736.6" width="1648" height="0.9" fill="#d8d8d8"/></svg><span class="t" style="left:289.92px;top:725.40px;font-size:5.2px;line-height:5.2px;color:#8a8a8a;">24</span><span class="t" style="left:454.70px;top:725.40px;font-size:5.2px;line-height:5.2px;color:#8a8a8a;">48</span><span class="t" style="left:619.49px;top:725.40px;font-size:5.2px;line-height:5.2px;color:#8a8a8a;">72</span><span class="t" style="left:784.27px;top:725.40px;font-size:5.2px;line-height:5.2px;color:#8a8a8a;">96</span><span class="t" style="left:949.05px;top:725.40px;font-size:5.2px;line-height:5.2px;color:#8a8a8a;">120</span><span class="t" style="left:1113.84px;top:725.40px;font-size:5.2px;line-height:5.2px;color:#8a8a8a;">144</span><span class="t" style="left:1278.62px;top:725.40px;font-size:5.2px;line-height:5.2px;color:#8a8a8a;">168</span><span class="t" style="left:1443.41px;top:725.40px;font-size:5.2px;line-height:5.2px;color:#8a8a8a;">192</span><span class="t" style="left:1608.19px;top:725.40px;font-size:5.2px;line-height:5.2px;color:#8a8a8a;">216</span><span class="t" style="left:1773.20px;top:725.40px;font-size:5.2px;line-height:5.2px;color:#9a9a9a;">24</span><div style="left:131.8px;top:724.8px;width:13.2px;height:9px;background:#0a0a0a;border:0.8px solid #e8e8e8;box-sizing:border-box;"></div><span class="t" style="left:136.53px;top:726.58px;font-size:6.4px;line-height:6.4px;color:#f0f0f0;">1</span><svg style="left:131px;top:733px;" width="3" height="5" viewBox="0 0 3 5"><path d="M0.8 0 V4.5" stroke="#eee" stroke-width="0.9"/></svg><div style="left:8px;top:748px;width:15px;height:12.3px;background:linear-gradient(#484848,#3b3b3b);box-shadow:inset 0 0 0 0.6px #262626;"></div><div style="left:23px;top:748px;width:15px;height:12.3px;background:linear-gradient(#484848,#3b3b3b);box-shadow:inset 0 0 0 0.6px #262626;"></div><div style="left:38px;top:748px;width:15px;height:12.3px;background:linear-gradient(#484848,#3b3b3b);box-shadow:inset 0 0 0 0.6px #262626;"></div><div style="left:53px;top:748px;width:15px;height:12.3px;background:#5f7da6;box-shadow:inset 0 0 0 0.6px #262626;"></div><div style="left:68px;top:748px;width:15px;height:12.3px;background:linear-gradient(#484848,#3b3b3b);box-shadow:inset 0 0 0 0.6px #262626;"></div><div style="left:83px;top:748px;width:15px;height:12.3px;background:linear-gradient(#484848,#3b3b3b);box-shadow:inset 0 0 0 0.6px #262626;"></div><div style="left:101px;top:748px;width:13.5px;height:12.3px;background:linear-gradient(#4a4a4a,#3c3c3c);box-shadow:inset 0 0 0 0.6px #262626;"></div><div style="left:114.5px;top:748px;width:13.5px;height:12.3px;background:linear-gradient(#4a4a4a,#3c3c3c);box-shadow:inset 0 0 0 0.6px #262626;"></div><svg style="left:8px;top:748px;" width="122" height="12.3" viewBox="0 0 122 12.3"><rect x="4.5" y="2.5" width="5.8" height="5" fill="#e0e0e0"/><path d="M8 6 L11.5 9 L9.8 9.2 L9 10.8Z" fill="#111" stroke="#ddd" stroke-width="0.4"/>
<path d="M19 4.8 H20.8 L23.2 2.6 V9.8 L20.8 7.6 H19Z" fill="#222" stroke="#ccc" stroke-width="0.5"/><path d="M24.3 3 Q26.6 6.2 24.3 9.4" stroke="#bbb" stroke-width="0.7" fill="none"/>
<path d="M34 8.6 H42 M34.5 6.2 Q35 3.2 38.5 3.4 Q41.5 3.8 41.3 6.6" stroke="#e0e0e0" stroke-width="0.9" fill="none"/><path d="M33.2 5 L36.4 5.6 L34.2 7.8Z" fill="#e0e0e0"/><path d="M41 10 H43.6 L42.3 11.4Z" fill="#aaa"/>
<circle cx="52.5" cy="6.1" r="3.7" fill="none" stroke="#f4f4f4" stroke-width="0.9"/><path d="M52.5 3.8 V6.3 H54.3" stroke="#f4f4f4" stroke-width="0.8" fill="none"/>
<path d="M63.5 5.4 H72.5 M63.5 5.4 V7.5 M65.7 5.4 V6.8 M68 5.4 V7.5 M70.2 5.4 V6.8 M72.5 5.4 V7.5" stroke="#bbb" stroke-width="0.7" fill="none"/><path d="M72 9.3 L73.8 10.3 L72 11.3Z" fill="#aaa"/>
<path d="M78.5 6.3 H86.5" stroke="#e0e0e0" stroke-width="0.9"/><circle cx="82.6" cy="6.3" r="1.5" fill="#e0e0e0"/>
<path d="M97.6 3.8 V8.8" stroke="#3a6a3a" stroke-width="0.9"/><path d="M102.5 4 V8.6 L98.8 6.3Z" fill="#3a6a3a"/>
<path d="M115.6 3.8 V8.8" stroke="#3a6a3a" stroke-width="0.9"/><path d="M110.7 4 V8.6 L114.4 6.3Z" fill="#3a6a3a"/></svg><div style="left:131.7px;top:748.6px;width:23px;height:11px;background:#1c1c1c;"></div><span class="t" style="left:134.30px;top:751.54px;font-size:6.8px;line-height:6.8px;color:#d4d4d4;">1</span><div style="left:157.5px;top:748.6px;width:22.8px;height:11px;background:#1c1c1c;"></div><span class="t" style="left:159.80px;top:751.54px;font-size:6.8px;line-height:6.8px;color:#d4d4d4;">1</span><div style="left:183px;top:754px;width:1545px;height:0.9px;background:#a6a6a6;"></div><svg style="left:181px;top:751px;" width="5" height="7" viewBox="0 0 5 7"><path d="M0.6 0.4 V6.6 L4 3.5Z" fill="#b8b8b8"/></svg><svg style="left:1725.2px;top:751px;" width="5" height="7" viewBox="0 0 5 7"><path d="M4.4 0.4 V6.6 L1 3.5Z" fill="#b8b8b8"/></svg><div style="left:1731.2px;top:748.6px;width:22.6px;height:11px;background:#1c1c1c;"></div><span class="t" style="left:1732.80px;top:751.54px;font-size:6.8px;line-height:6.8px;color:#d4d4d4;font-weight:bold;transform:scaleX(1.0212);">240</span><div style="left:1756px;top:748.6px;width:22.8px;height:11px;background:#1c1c1c;"></div><span class="t" style="left:1757.80px;top:751.54px;font-size:6.8px;line-height:6.8px;color:#d4d4d4;font-weight:bold;transform:scaleX(1.0212);">240</span><div style="left:1802.8px;top:737.2px;width:8.2px;height:10.2px;background:linear-gradient(#444,#383838);box-shadow:0 0 0 0.6px #1f1f1f;"></div><svg style="left:1781px;top:731px;" width="24" height="23" viewBox="0 0 24 23"><defs><linearGradient id="keyG" x1="0" x2="0" y1="0" y2="1"><stop offset="0" stop-color="#4e4e4e"/><stop offset="1" stop-color="#333"/></linearGradient></defs><circle cx="11.6" cy="11.2" r="10.5" fill="url(#keyG)" stroke="#1f1f1f" stroke-width="0.8"/><circle cx="13.7" cy="8.8" r="2.4" fill="none" stroke="#f0f0f0" stroke-width="1.4"/><path d="M12.2 10.6 L8.6 14.6 M9.6 13.4 L11 14.6 M10.6 12.4 L11.8 13.4" stroke="#f0f0f0" stroke-width="1.2" fill="none"/></svg><svg style="left:1804.6px;top:739.8px;" width="4.4" height="3.5" viewBox="0 0 4.4 3.5"><path d="M0.3 0.4 H4.1 L2.2 3Z" fill="#bbb"/></svg><div style="left:1815.7px;top:728.7px;width:12.3px;height:12px;background:linear-gradient(#4a4a4a,#3c3c3c);box-shadow:inset 0 0 0 0.6px #262626;"></div><svg style="left:1816.7px;top:729.7px;" width="10.3" height="10" viewBox="0 0 10.3 10"><path d="M2 1.5 H8.3 M2 1.5 V8.5 M2 4 H4.5 M2 6.3 H4.5" stroke="#ddd" stroke-width="0.8" fill="none"/><circle cx="6.4" cy="5.4" r="2" fill="none" stroke="#ddd" stroke-width="0.8"/><path d="M1 2.8 h2 M1 5.2 h2 M1 7.5 h2" stroke="#d8a020" stroke-width="0.9"/><path d="M7.8 8.2 L9.6 9 L7.8 9.8Z" fill="#aaa"/></svg><div style="left:1831.7px;top:728.7px;width:84px;height:12.2px;background:linear-gradient(#4c4c4c,#424242);box-shadow:inset 0 0 0 0.6px #2c2c2c;"></div><span class="t" style="left:1841.00px;top:732.10px;font-size:6.5px;line-height:6.5px;color:#c8c8c8;transform:scaleX(0.9281);">0 keys, 9/9 channels</span><svg style="left:1909px;top:732.5px;" width="5" height="5" viewBox="0 0 5 5"><path d="M2.5 0.8 L4.5 4 H0.5Z" fill="#aaa"/></svg><div style="left:1815.7px;top:744.3px;width:12.3px;height:12.5px;background:linear-gradient(#4a4a4a,#3c3c3c);box-shadow:inset 0 0 0 0.6px #262626;"></div><svg style="left:1817px;top:746px;" width="10" height="9.5" viewBox="0 0 10 9.5"><rect x="0.3" y="0.3" width="9.2" height="8.6" fill="#161616"/><path d="M0.8 5 Q2.5 1.5 4.5 4.4 Q6.5 7.5 9 3" stroke="#e0a020" stroke-width="0.8" fill="none"/><path d="M0.8 4 H9" stroke="#4080d0" stroke-width="0.5"/></svg><div style="left:1831.7px;top:744.8px;width:71px;height:12px;background:linear-gradient(#4c4c4c,#424242);box-shadow:inset 0 0 0 0.6px #2c2c2c;"></div><div style="left:1903px;top:744.8px;width:12.7px;height:12px;background:#3f3f3f;box-shadow:inset 0 0 0 0.6px #2c2c2c;"></div><span class="t" style="left:1838.50px;top:748.10px;font-size:6.5px;line-height:6.5px;color:#c8c8c8;transform:scaleX(0.9259);">Key All Channels</span><svg style="left:1907.5px;top:746.3px;" width="5" height="9" viewBox="0 0 5 9"><path d="M2.5 1.2 L4.2 3.7 L0.8 3.7Z M2.5 7.8 L4.2 5.3 L0.8 5.3Z" fill="#8e8e8e"/></svg><div style="left:0px;top:761.8px;width:1920px;height:15.2px;background:#1f1f1f;"></div><div style="left:1739px;top:762.6px;width:181px;height:14.4px;background:#3a3a3a;"></div><svg style="left:1741.5px;top:765px;" width="11" height="10" viewBox="0 0 11 10"><circle cx="4.6" cy="5" r="1.4" fill="#e0a040"/><path d="M1.5 1.8 Q0 5 1.5 8.2 M7.7 1.8 Q9.2 5 7.7 8.2" stroke="#ccc" stroke-width="0.8" fill="none"/><path d="M8.4 7.6 L10.2 8.5 L8.4 9.4Z" fill="#aaa"/></svg><svg style="left:1754px;top:765px;" width="12" height="10" viewBox="0 0 12 10"><path d="M1 5 Q1 1.5 5 1.5 Q9 1.5 9 5 Q9 7.5 6 7.6 L4 9.2 V7.5 Q1 7.3 1 5Z" fill="#dcdcdc"/><path d="M9.4 7.6 L11.2 8.5 L9.4 9.4Z" fill="#aaa"/></svg><div style="left:1767.5px;top:763.5px;width:61px;height:13px;background:linear-gradient(#4a4a4a,#404040);"></div><span class="t" style="left:1776.00px;top:766.97px;font-size:6.3px;line-height:6.3px;color:#b8b8b8;transform:scaleX(1.0992);">/obj/soot_trail/...</span><div style="left:1828.5px;top:763.5px;width:9px;height:13px;background:#3d3d3d;"></div><svg style="left:1829.8px;top:765.5px;" width="5" height="9" viewBox="0 0 5 9"><path d="M2.5 1.2 L4.2 3.7 L0.8 3.7Z M2.5 7.8 L4.2 5.3 L0.8 5.3Z" fill="#8e8e8e"/></svg><svg style="left:1840px;top:765px;" width="11" height="10" viewBox="0 0 11 10"><path d="M2 4.3 Q3 1.8 5.8 2 H8.5 M9 5.7 Q8 8.2 5.2 8 H2.5" stroke="#666" stroke-width="0.8" fill="none"/><path d="M7.6 0.8 L9.6 2 L7.6 3.2Z M3.4 6.8 L1.4 8 L3.4 9.2Z" fill="#666"/></svg><div style="left:1854.5px;top:763.5px;width:51px;height:13px;background:linear-gradient(#4a4a4a,#404040);"></div><span class="t" style="left:1862.80px;top:766.97px;font-size:6.3px;line-height:6.3px;color:#c8c8c8;transform:scaleX(1.0072);">Auto Update</span><div style="left:1905.5px;top:763.5px;width:14.5px;height:13px;background:#3d3d3d;"></div><svg style="left:1910.3px;top:765.5px;" width="5" height="9" viewBox="0 0 5 9"><path d="M2.5 1.2 L4.2 3.7 L0.8 3.7Z M2.5 7.8 L4.2 5.3 L0.8 5.3Z" fill="#8e8e8e"/></svg></div></body></html>
